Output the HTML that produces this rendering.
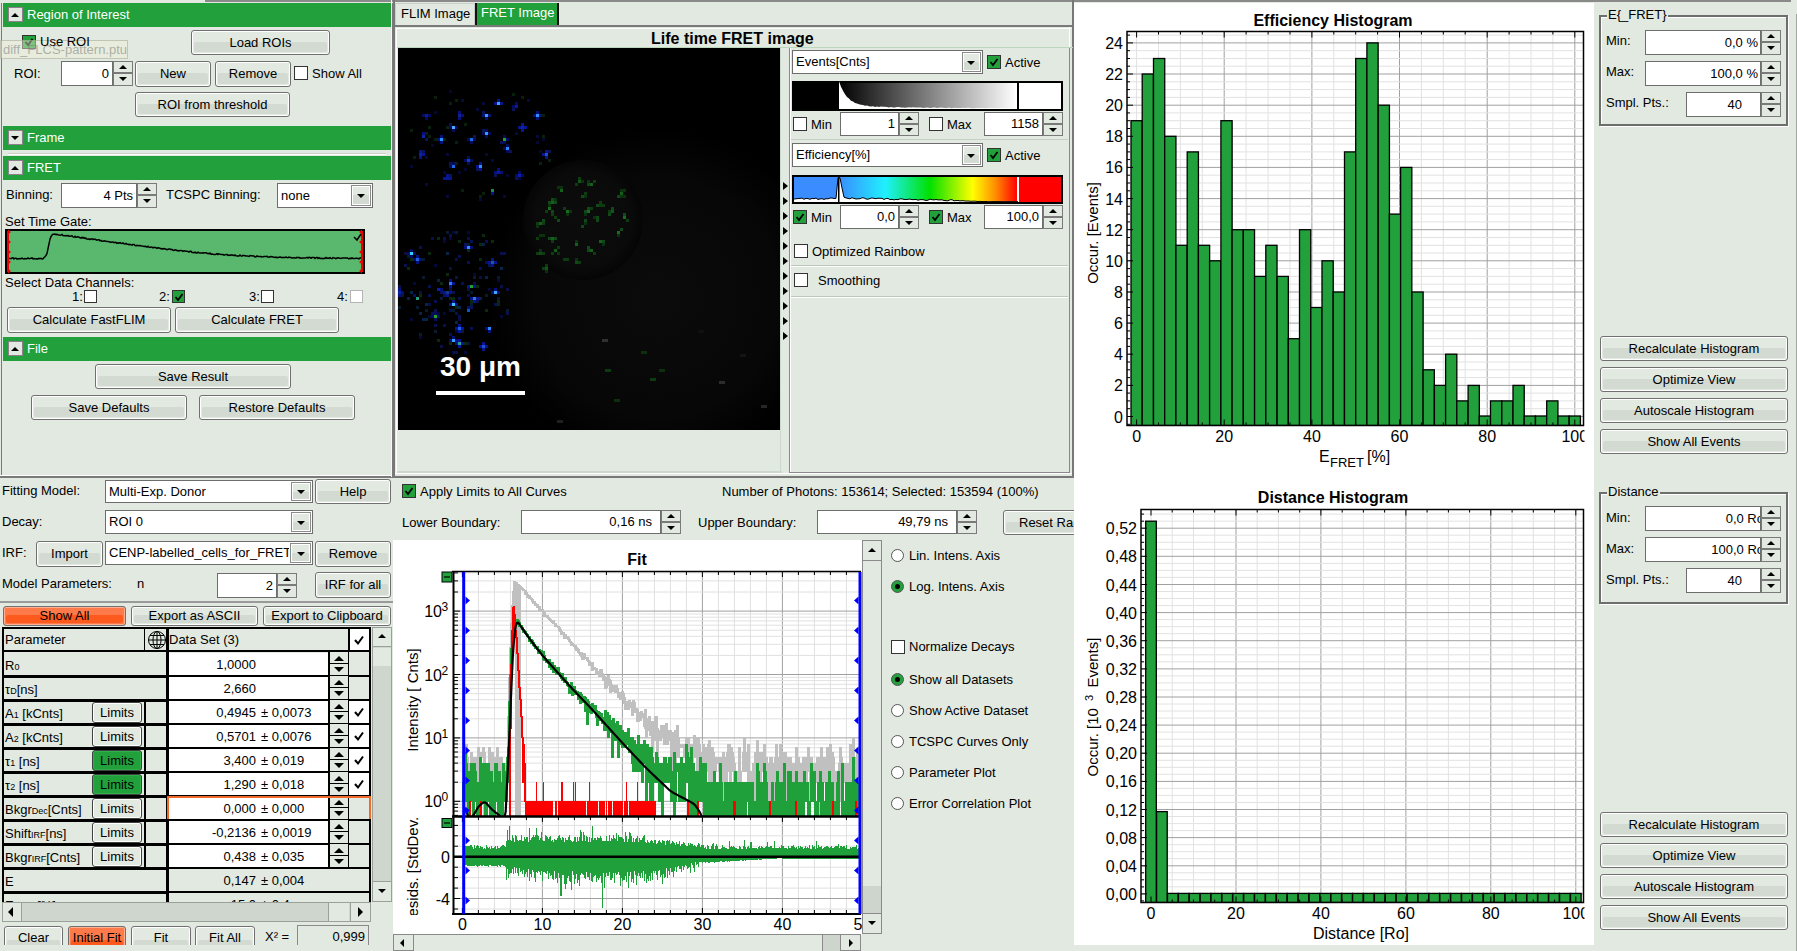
<!DOCTYPE html><html><head><meta charset="utf-8"><style>
*{box-sizing:border-box}
html,body{margin:0;padding:0}
body{width:1797px;height:951px;overflow:hidden;background:#E1E9E0;font-family:"Liberation Sans",sans-serif;font-size:13px;color:#000;position:relative}
.a{position:absolute}
.t{position:absolute;white-space:nowrap;line-height:15px}
.btn{position:absolute;border:1px solid #707070;border-radius:3px;background:#E1E9E0;box-shadow:inset 0 0 0 1px #fff;text-align:center;white-space:nowrap;overflow:hidden}
.btn:before{content:"";position:absolute;left:2px;right:2px;top:46%;bottom:2px;background:#D2DAD1;border-radius:2px}
.btn span{position:relative}
.inp{position:absolute;background:#fff;border:1px solid #6d6d6d;white-space:nowrap;overflow:hidden;text-align:right;padding-right:3px}
.spin{position:absolute;}
.spin i{position:absolute;left:0;right:0;border:1px solid #7a7a7a;background:#E1E9E0}
.cb{position:absolute;width:14px;height:14px;background:#fff;border:1px solid #3c3c3c}
.cbon{background:#21A03B;border-color:#3c3c3c}
.hdr{position:absolute;background:#21A03B;color:#fff}
.tri{position:absolute;width:0;height:0;border-left:4px solid transparent;border-right:4px solid transparent}
</style></head><body><div class="a" style="left:205px;top:0px;width:1586px;height:2px;background:#8a8a8a"></div>
<div class="a" style="left:1px;top:3px;width:1px;height:474px;background:#7a7a7a"></div>
<div class="a" style="left:392px;top:3px;width:1px;height:474px;background:#7a7a7a"></div>
<div class="a" style="left:0px;top:475px;width:392px;height:1px;background:#fff"></div>
<div class="a" style="left:0px;top:476px;width:393px;height:2px;background:#7a7a7a"></div>
<div class="hdr" style="left:3px;top:3px;width:388px;height:24px"></div>
<div class="a" style="left:8px;top:7px;width:15px;height:15px;background:#E1E9E0;border:1px solid #8c7f8c"></div>
<div class="tri" style="left:11px;top:13px;border-left-width:4px;border-right-width:4px;border-bottom:4px solid #000"></div>
<div class="t" style="left:27px;top:7px;color:#fff;">Region of Interest</div>
<div class="a" style="left:22px;top:35px;width:14px;height:14px;background:#21A03B;border:1px solid #333"></div>
<svg class="a" style="left:22px;top:35px" width="14" height="14"><path d="M3.5 7 L6 10 L10.5 4" stroke="#000" stroke-width="1.8" fill="none"/></svg>
<div class="a" style="left:0px;top:40px;width:128px;height:19px;background:rgba(240,240,215,0.45);border:1px solid rgba(150,150,130,0.45)"></div>
<div class="t" style="left:3px;top:42px;color:rgba(120,120,120,0.55);font-size:13px">diff_FLCS-pattern.ptu</div>
<div class="t" style="left:40px;top:34px;">Use ROI</div>
<div class="btn" style="left:191px;top:30px;width:139px;height:25px;"><span style="position:relative;top:4px;line-height:15px">Load ROIs</span></div>
<div class="t" style="left:14px;top:66px;">ROI:</div>
<div class="inp" style="left:61px;top:61px;width:52px;height:25px;line-height:23px;padding-right:3px">0</div>
<div class="a" style="left:113px;top:61px;width:20px;height:12px;border:1px solid #7a7a7a;background:#E1E9E0"></div>
<div class="a" style="left:113px;top:73px;width:20px;height:13px;border:1px solid #7a7a7a;background:#E1E9E0"></div>
<div class="tri" style="left:119px;top:65px;border-left-width:4px;border-right-width:4px;border-bottom:4px solid #000"></div>
<div class="tri" style="left:119px;top:77px;border-left-width:4px;border-right-width:4px;border-top:4px solid #000"></div>
<div class="btn" style="left:135px;top:61px;width:76px;height:26px;"><span style="position:relative;top:4px;line-height:15px">New</span></div>
<div class="btn" style="left:215px;top:61px;width:76px;height:26px;"><span style="position:relative;top:4px;line-height:15px">Remove</span></div>
<div class="a" style="left:294px;top:66px;width:14px;height:14px;background:#fff;border:1px solid #333"></div>
<div class="t" style="left:312px;top:66px;">Show All</div>
<div class="btn" style="left:135px;top:92px;width:155px;height:25px;"><span style="position:relative;top:4px;line-height:15px">ROI from threshold</span></div>
<div class="hdr" style="left:3px;top:126px;width:388px;height:24px"></div>
<div class="a" style="left:8px;top:130px;width:15px;height:15px;background:#E1E9E0;border:1px solid #8c7f8c"></div>
<div class="tri" style="left:11px;top:136px;border-left-width:4px;border-right-width:4px;border-top:4px solid #000"></div>
<div class="t" style="left:27px;top:130px;color:#fff;">Frame</div>
<div class="a" style="left:8px;top:153px;width:378px;height:1px;background:#c8d0c7"></div>
<div class="a" style="left:8px;top:154px;width:378px;height:1px;background:#fff"></div>
<div class="hdr" style="left:3px;top:156px;width:388px;height:24px"></div>
<div class="a" style="left:8px;top:160px;width:15px;height:15px;background:#E1E9E0;border:1px solid #8c7f8c"></div>
<div class="tri" style="left:11px;top:166px;border-left-width:4px;border-right-width:4px;border-bottom:4px solid #000"></div>
<div class="t" style="left:27px;top:160px;color:#fff;">FRET</div>
<div class="t" style="left:6px;top:187px;">Binning:</div>
<div class="inp" style="left:61px;top:183px;width:76px;height:25px;line-height:23px;padding-right:3px">4 Pts</div>
<div class="a" style="left:137px;top:183px;width:20px;height:12px;border:1px solid #7a7a7a;background:#E1E9E0"></div>
<div class="a" style="left:137px;top:195px;width:20px;height:13px;border:1px solid #7a7a7a;background:#E1E9E0"></div>
<div class="tri" style="left:143px;top:187px;border-left-width:4px;border-right-width:4px;border-bottom:4px solid #000"></div>
<div class="tri" style="left:143px;top:199px;border-left-width:4px;border-right-width:4px;border-top:4px solid #000"></div>
<div class="t" style="left:166px;top:187px;">TCSPC Binning:</div>
<div class="a" style="left:277px;top:183px;width:96px;height:25px;background:#fff;border:1px solid #6d6d6d"></div>
<div class="t" style="left:281px;top:188px;">none</div>
<div class="a" style="left:351px;top:185px;width:20px;height:21px;border:1px solid #8a8a8a;background:linear-gradient(#E1E9E0 50%,#D2DAD1 50%);box-shadow:inset 0 0 0 1px #fff"></div>
<div class="tri" style="left:357px;top:194px;border-left-width:4px;border-right-width:4px;border-top:4px solid #000"></div>
<div class="t" style="left:5px;top:214px;">Set Time Gate:</div>
<svg class="a" style="left:5px;top:229px" width="360" height="45"><rect x="1" y="1" width="358" height="43" fill="#5AB86E" stroke="#000" stroke-width="2"/><polyline points="2,29.2 3,29.6 4,29.3 5,29.6 6,29.7 7,29.0 8,28.9 9,29.9 10,29.2 11,29.2 12,30.1 13,29.5 14,29.9 15,29.5 16,29.7 17,29.1 18,29.7 19,29.9 20,29.5 21,29.8 22,29.7 23,29.0 24,29.8 25,29.6 26,29.3 27,28.9 28,29.9 29,29.5 30,29.8 31,30.0 32,29.8 33,30.0 34,29.4 35,29.8 36,29.4 37,29.9 38,29.7 39,28.5 40,27.8 41,26.4 42,24.6 43,19.6 44,14.8 45,10.1 46,7.6 47,6.0 48,5.3 49,5.3 50,5.1 51,5.6 52,5.4 53,5.8 54,5.9 55,6.2 56,6.0 57,5.5 58,6.5 59,6.7 60,6.8 61,6.6 62,6.9 63,6.4 64,7.3 65,7.2 66,7.0 67,6.8 68,7.9 69,8.2 70,7.3 71,8.3 72,8.0 73,7.8 74,8.1 75,8.8 76,9.1 77,8.3 78,9.1 79,8.5 80,9.5 81,9.2 82,10.0 83,10.2 84,9.8 85,10.6 86,9.9 87,9.7 88,10.5 89,10.0 90,10.3 91,10.7 92,11.1 93,10.7 94,10.7 95,11.8 96,11.3 97,12.2 98,12.3 99,11.8 100,12.0 101,12.3 102,12.5 103,12.6 104,12.7 105,12.9 106,13.5 107,13.1 108,13.1 109,13.6 110,13.2 111,13.4 112,14.3 113,13.9 114,14.1 115,13.6 116,14.2 117,14.5 118,14.0 119,14.9 120,15.0 121,14.5 122,15.3 123,15.2 124,15.6 125,15.4 126,15.9 127,16.1 128,15.4 129,15.5 130,16.4 131,16.9 132,16.2 133,16.5 134,16.8 135,16.6 136,16.8 137,16.9 138,17.1 139,17.5 140,17.3 141,17.5 142,18.1 143,17.3 144,18.1 145,18.4 146,18.0 147,18.1 148,18.9 149,18.3 150,18.4 151,18.8 152,19.3 153,18.7 154,19.1 155,19.2 156,19.9 157,19.6 158,20.2 159,19.5 160,19.8 161,20.3 162,20.7 163,20.3 164,20.1 165,20.1 166,20.7 167,20.4 168,21.3 169,21.4 170,20.8 171,21.0 172,21.7 173,21.6 174,22.0 175,21.5 176,21.4 177,21.7 178,22.4 179,21.8 180,22.0 181,22.2 182,22.3 183,22.4 184,23.1 185,22.3 186,22.2 187,23.5 188,23.5 189,23.7 190,23.2 191,23.9 192,23.9 193,23.2 194,23.9 195,24.1 196,24.0 197,23.9 198,23.7 199,23.9 200,23.8 201,23.7 202,24.4 203,24.2 204,24.9 205,24.0 206,25.2 207,25.0 208,25.3 209,25.4 210,25.5 211,25.2 212,24.6 213,25.5 214,24.9 215,25.1 216,25.6 217,25.5 218,25.5 219,26.2 220,25.9 221,25.6 222,25.6 223,26.4 224,26.0 225,26.4 226,26.0 227,25.8 228,26.3 229,26.7 230,26.0 231,26.8 232,27.0 233,26.9 234,27.0 235,26.1 236,26.9 237,27.2 238,26.3 239,26.6 240,26.7 241,27.0 242,26.9 243,27.1 244,27.5 245,26.6 246,26.7 247,26.8 248,26.9 249,26.9 250,28.0 251,27.9 252,27.0 253,27.5 254,27.4 255,27.4 256,27.5 257,27.9 258,27.8 259,27.6 260,27.4 261,27.6 262,27.4 263,28.0 264,28.2 265,27.8 266,27.5 267,27.7 268,27.9 269,28.2 270,28.5 271,28.0 272,28.6 273,28.4 274,28.2 275,28.1 276,28.3 277,28.6 278,28.3 279,28.6 280,28.4 281,28.1 282,28.5 283,28.7 284,28.0 285,28.4 286,28.5 287,29.0 288,29.1 289,28.5 290,29.1 291,29.0 292,28.4 293,28.7 294,28.3 295,29.1 296,28.9 297,29.2 298,29.1 299,29.0 300,29.1 301,28.9 302,28.4 303,29.0 304,28.3 305,28.5 306,29.2 307,28.4 308,28.4 309,28.5 310,29.4 311,28.6 312,28.4 313,29.4 314,28.6 315,29.4 316,29.2 317,29.4 318,29.6 319,29.2 320,29.4 321,28.5 322,29.4 323,29.1 324,29.4 325,28.7 326,29.4 327,29.7 328,28.6 329,28.9 330,29.2 331,29.6 332,28.9 333,28.8 334,28.9 335,29.3 336,29.5 337,29.1 338,29.1 339,29.1 340,29.1 341,29.1 342,28.8 343,29.3 344,29.8 345,29.2 346,29.6 347,28.9 348,29.5 349,29.6 350,29.5 351,29.3 352,29.3 353,29.5 354,29.8 355,28.9 356,28.8 357,29.6" fill="none" stroke="#000" stroke-width="1.5"/><rect x="2" y="2" width="2" height="41" fill="#e00"/><rect x="356" y="2" width="2" height="41" fill="#e00"/><path d="M3 0.5l3 2.5l-3 2.5zM357 0.5l-3 2.5l3 2.5zM3 10.5l3 2.5l-3 2.5zM357 10.5l-3 2.5l3 2.5zM3 20.5l3 2.5l-3 2.5zM357 20.5l-3 2.5l3 2.5zM3 30.5l3 2.5l-3 2.5zM357 30.5l-3 2.5l3 2.5zM3 39.5l3 2.5l-3 2.5zM357 39.5l-3 2.5l3 2.5z" fill="#e00"/><path d="M349 8 L352 11 L356 5" stroke="#000" stroke-width="1.5" fill="none"/></svg>
<div class="t" style="left:5px;top:275px;">Select Data Channels:</div>
<div class="t" style="left:72px;top:289px;">1:</div>
<div class="a" style="left:84px;top:290px;width:13px;height:13px;background:#fff;border:1px solid #333"></div>
<div class="t" style="left:159px;top:289px;">2:</div>
<div class="a" style="left:172px;top:290px;width:13px;height:13px;background:#21A03B;border:1px solid #333"></div>
<svg class="a" style="left:172px;top:290px" width="13" height="13"><path d="M3.5 7 L6 10 L10.5 4" stroke="#000" stroke-width="1.8" fill="none"/></svg>
<div class="t" style="left:249px;top:289px;">3:</div>
<div class="a" style="left:261px;top:290px;width:13px;height:13px;background:#fff;border:1px solid #333"></div>
<div class="t" style="left:337px;top:289px;">4:</div>
<div class="a" style="left:350px;top:290px;width:13px;height:13px;background:#fff;border:1px solid #b4b4b4"></div>
<div class="btn" style="left:7px;top:307px;width:164px;height:26px;"><span style="position:relative;top:4px;line-height:15px">Calculate FastFLIM</span></div>
<div class="btn" style="left:175px;top:307px;width:164px;height:26px;"><span style="position:relative;top:4px;line-height:15px">Calculate FRET</span></div>
<div class="hdr" style="left:3px;top:337px;width:388px;height:24px"></div>
<div class="a" style="left:8px;top:341px;width:15px;height:15px;background:#E1E9E0;border:1px solid #8c7f8c"></div>
<div class="tri" style="left:11px;top:347px;border-left-width:4px;border-right-width:4px;border-bottom:4px solid #000"></div>
<div class="t" style="left:27px;top:341px;color:#fff;">File</div>
<div class="btn" style="left:95px;top:364px;width:196px;height:25px;"><span style="position:relative;top:4px;line-height:15px">Save Result</span></div>
<div class="btn" style="left:31px;top:395px;width:156px;height:25px;"><span style="position:relative;top:4px;line-height:15px">Save Defaults</span></div>
<div class="btn" style="left:199px;top:395px;width:156px;height:25px;"><span style="position:relative;top:4px;line-height:15px">Restore Defaults</span></div>
<div class="a" style="left:0px;top:601px;width:393px;height:2px;background:#9a9a9a"></div>
<div class="t" style="left:2px;top:483px;">Fitting Model:</div>
<div class="a" style="left:105px;top:480px;width:208px;height:23px;background:#fff;border:1px solid #6d6d6d"></div>
<div class="t" style="left:109px;top:484px;">Multi-Exp. Donor</div>
<div class="a" style="left:291px;top:482px;width:20px;height:19px;border:1px solid #8a8a8a;background:linear-gradient(#E1E9E0 50%,#D2DAD1 50%);box-shadow:inset 0 0 0 1px #fff"></div>
<div class="tri" style="left:297px;top:490px;border-left-width:4px;border-right-width:4px;border-top:4px solid #000"></div>
<div class="btn" style="left:315px;top:479px;width:76px;height:25px;"><span style="position:relative;top:4px;line-height:15px">Help</span></div>
<div class="t" style="left:2px;top:514px;">Decay:</div>
<div class="a" style="left:105px;top:510px;width:208px;height:24px;background:#fff;border:1px solid #6d6d6d"></div>
<div class="t" style="left:109px;top:514px;">ROI 0</div>
<div class="a" style="left:291px;top:512px;width:20px;height:20px;border:1px solid #8a8a8a;background:linear-gradient(#E1E9E0 50%,#D2DAD1 50%);box-shadow:inset 0 0 0 1px #fff"></div>
<div class="tri" style="left:297px;top:521px;border-left-width:4px;border-right-width:4px;border-top:4px solid #000"></div>
<div class="t" style="left:2px;top:545px;">IRF:</div>
<div class="btn" style="left:36px;top:541px;width:67px;height:26px;"><span style="position:relative;top:4px;line-height:15px">Import</span></div>
<div class="a" style="left:105px;top:541px;width:208px;height:24px;background:#fff;border:1px solid #6d6d6d"></div>
<div class="a" style="left:106px;top:542px;width:183px;height:22px;overflow:hidden"><div class="t" style="left:3px;top:3px">CENP-labelled_cells_for_FRET.ptu</div></div>
<div class="a" style="left:290px;top:543px;width:21px;height:20px;border:1px solid #8a8a8a;background:linear-gradient(#E1E9E0 50%,#D2DAD1 50%);box-shadow:inset 0 0 0 1px #fff"></div>
<div class="tri" style="left:297px;top:552px;border-left-width:4px;border-right-width:4px;border-top:4px solid #000"></div>
<div class="btn" style="left:315px;top:541px;width:76px;height:26px;"><span style="position:relative;top:4px;line-height:15px">Remove</span></div>
<div class="t" style="left:2px;top:576px;">Model Parameters:</div>
<div class="t" style="left:137px;top:576px;">n</div>
<div class="inp" style="left:217px;top:573px;width:60px;height:25px;line-height:23px;padding-right:3px">2</div>
<div class="a" style="left:277px;top:573px;width:20px;height:12px;border:1px solid #7a7a7a;background:#E1E9E0"></div>
<div class="a" style="left:277px;top:585px;width:20px;height:13px;border:1px solid #7a7a7a;background:#E1E9E0"></div>
<div class="tri" style="left:283px;top:577px;border-left-width:4px;border-right-width:4px;border-bottom:4px solid #000"></div>
<div class="tri" style="left:283px;top:589px;border-left-width:4px;border-right-width:4px;border-top:4px solid #000"></div>
<div class="btn" style="left:315px;top:572px;width:76px;height:26px;"><span style="position:relative;top:4px;line-height:15px">IRF for all</span></div>
<div class="btn orange" style="left:3px;top:606px;width:123px;height:20px;background:#FF7A4A;box-shadow:inset 0 0 0 1px #ffb090;"><span style="position:relative;top:1px;line-height:15px">Show All</span></div>
<style>.orange:before{background:#FF5A1E !important}</style>
<div class="btn" style="left:131px;top:606px;width:127px;height:20px;"><span style="position:relative;top:1px;line-height:15px">Export as ASCII</span></div>
<div class="btn" style="left:263px;top:606px;width:128px;height:20px;"><span style="position:relative;top:1px;line-height:15px">Export to Clipboard</span></div>
<div class="a" style="left:2px;top:627px;width:369px;height:275px;overflow:hidden;background:#E1E9E0"><div class="a" style="left:0;top:0;width:369px;height:25px;border:2px solid #000;border-bottom:0;background:#E1E9E0"></div><div class="t" style="left:3px;top:5px">Parameter</div><div class="a" style="left:142px;top:0;width:1px;height:25px;background:#000"></div><svg class="a" style="left:145px;top:3px" width="20" height="20"><circle cx="10" cy="10" r="8.5" fill="none" stroke="#000" stroke-width="1"/><ellipse cx="10" cy="10" rx="4" ry="8.5" fill="none" stroke="#000"/><line x1="1.5" y1="10" x2="18.5" y2="10" stroke="#000"/><line x1="10" y1="1.5" x2="10" y2="18.5" stroke="#000"/><path d="M3 5.5 H17 M3 14.5 H17" stroke="#000"/></svg><div class="a" style="left:164px;top:0;width:3px;height:25px;background:#000"></div><div class="t" style="left:167px;top:5px">Data Set (3)</div><div class="a" style="left:346px;top:0;width:2px;height:25px;background:#000"></div><div class="a" style="left:348px;top:2px;width:19px;height:21px;background:#fff"></div><svg class="a" style="left:350px;top:6px" width="14" height="14"><path d="M3 7 L6 10.5 L11 3.5" stroke="#000" stroke-width="2" fill="none"/></svg><div class="a" style="left:0;top:23px;width:369px;height:2px;background:#000"></div><div class="a" style="left:0;top:25px;width:2px;height:24px;background:#000"></div><div class="t" style="left:3px;top:31px">R<span style="font-size:9px">0</span></div><div class="a" style="left:164px;top:25px;width:3px;height:24px;background:#000"></div><div class="a" style="left:167px;top:26px;width:200px;height:22px;background:#fff"></div><div class="a" style="left:326px;top:25px;width:20px;height:24px;background:#E1E9E0;border-left:2px solid #000"></div><div class="a" style="left:326px;top:36px;width:20px;height:1px;background:#000"></div><div class="tri" style="left:332px;top:29px;border-left-width:5px;border-right-width:5px;border-bottom:5px solid #000"></div><div class="tri" style="left:332px;top:40px;border-left-width:5px;border-right-width:5px;border-top:5px solid #000"></div><div class="a" style="left:346px;top:25px;width:1px;height:24px;background:#000"></div><div class="a" style="left:347px;top:26px;width:20px;height:22px;background:#E1E9E0"></div><div class="a" style="left:367px;top:25px;width:2px;height:24px;background:#000"></div><div class="t" style="left:167px;top:30px;width:87px;text-align:right">1,0000</div><div class="a" style="left:0;top:48px;width:369px;height:3px;background:#000"></div><div class="a" style="left:0;top:49px;width:2px;height:24px;background:#000"></div><div class="t" style="left:3px;top:55px">τ<span style="font-size:9px">D</span>[ns]</div><div class="a" style="left:164px;top:49px;width:3px;height:24px;background:#000"></div><div class="a" style="left:167px;top:50px;width:200px;height:22px;background:#fff"></div><div class="a" style="left:326px;top:49px;width:20px;height:24px;background:#E1E9E0;border-left:2px solid #000"></div><div class="a" style="left:326px;top:60px;width:20px;height:1px;background:#000"></div><div class="tri" style="left:332px;top:53px;border-left-width:5px;border-right-width:5px;border-bottom:5px solid #000"></div><div class="tri" style="left:332px;top:64px;border-left-width:5px;border-right-width:5px;border-top:5px solid #000"></div><div class="a" style="left:346px;top:49px;width:1px;height:24px;background:#000"></div><div class="a" style="left:347px;top:50px;width:20px;height:22px;background:#E1E9E0"></div><div class="a" style="left:367px;top:49px;width:2px;height:24px;background:#000"></div><div class="t" style="left:167px;top:54px;width:87px;text-align:right">2,660</div><div class="a" style="left:0;top:72px;width:369px;height:3px;background:#000"></div><div class="a" style="left:0;top:73px;width:2px;height:24px;background:#000"></div><div class="t" style="left:3px;top:79px">A<span style="font-size:9px">1</span> [kCnts]</div><div class="a" style="left:90px;top:75px;width:50px;height:21px;border:1px solid #404040;border-radius:3px;background:#E1E9E0;box-shadow:inset 0 0 0 1px #fff;text-align:center;line-height:19px">Limits</div><div class="a" style="left:142px;top:73px;width:2px;height:24px;background:#000"></div><div class="a" style="left:164px;top:73px;width:3px;height:24px;background:#000"></div><div class="a" style="left:167px;top:74px;width:200px;height:22px;background:#fff"></div><div class="a" style="left:326px;top:73px;width:20px;height:24px;background:#E1E9E0;border-left:2px solid #000"></div><div class="a" style="left:326px;top:84px;width:20px;height:1px;background:#000"></div><div class="tri" style="left:332px;top:77px;border-left-width:5px;border-right-width:5px;border-bottom:5px solid #000"></div><div class="tri" style="left:332px;top:88px;border-left-width:5px;border-right-width:5px;border-top:5px solid #000"></div><div class="a" style="left:346px;top:73px;width:1px;height:24px;background:#000"></div><div class="a" style="left:347px;top:74px;width:20px;height:22px;background:#fff"></div><div class="a" style="left:367px;top:73px;width:2px;height:24px;background:#000"></div><div class="t" style="left:167px;top:78px;width:87px;text-align:right">0,4945</div><div class="t" style="left:259px;top:78px">± 0,0073</div><svg class="a" style="left:350px;top:78px" width="14" height="14"><path d="M3 7 L6 10.5 L11 3.5" stroke="#000" stroke-width="2" fill="none"/></svg><div class="a" style="left:0;top:96px;width:369px;height:3px;background:#000"></div><div class="a" style="left:0;top:97px;width:2px;height:24px;background:#000"></div><div class="t" style="left:3px;top:103px">A<span style="font-size:9px">2</span> [kCnts]</div><div class="a" style="left:90px;top:99px;width:50px;height:21px;border:1px solid #404040;border-radius:3px;background:#E1E9E0;box-shadow:inset 0 0 0 1px #fff;text-align:center;line-height:19px">Limits</div><div class="a" style="left:142px;top:97px;width:2px;height:24px;background:#000"></div><div class="a" style="left:164px;top:97px;width:3px;height:24px;background:#000"></div><div class="a" style="left:167px;top:98px;width:200px;height:22px;background:#fff"></div><div class="a" style="left:326px;top:97px;width:20px;height:24px;background:#E1E9E0;border-left:2px solid #000"></div><div class="a" style="left:326px;top:108px;width:20px;height:1px;background:#000"></div><div class="tri" style="left:332px;top:101px;border-left-width:5px;border-right-width:5px;border-bottom:5px solid #000"></div><div class="tri" style="left:332px;top:112px;border-left-width:5px;border-right-width:5px;border-top:5px solid #000"></div><div class="a" style="left:346px;top:97px;width:1px;height:24px;background:#000"></div><div class="a" style="left:347px;top:98px;width:20px;height:22px;background:#fff"></div><div class="a" style="left:367px;top:97px;width:2px;height:24px;background:#000"></div><div class="t" style="left:167px;top:102px;width:87px;text-align:right">0,5701</div><div class="t" style="left:259px;top:102px">± 0,0076</div><svg class="a" style="left:350px;top:102px" width="14" height="14"><path d="M3 7 L6 10.5 L11 3.5" stroke="#000" stroke-width="2" fill="none"/></svg><div class="a" style="left:0;top:120px;width:369px;height:3px;background:#000"></div><div class="a" style="left:0;top:121px;width:2px;height:24px;background:#000"></div><div class="t" style="left:3px;top:127px">τ<span style="font-size:9px">1</span> [ns]</div><div class="a" style="left:90px;top:123px;width:50px;height:21px;border:1px solid #404040;border-radius:3px;background:#21A03B;box-shadow:inset 0 0 0 1px #2fb04a;text-align:center;line-height:19px">Limits</div><div class="a" style="left:142px;top:121px;width:2px;height:24px;background:#000"></div><div class="a" style="left:164px;top:121px;width:3px;height:24px;background:#000"></div><div class="a" style="left:167px;top:122px;width:200px;height:22px;background:#fff"></div><div class="a" style="left:326px;top:121px;width:20px;height:24px;background:#E1E9E0;border-left:2px solid #000"></div><div class="a" style="left:326px;top:132px;width:20px;height:1px;background:#000"></div><div class="tri" style="left:332px;top:125px;border-left-width:5px;border-right-width:5px;border-bottom:5px solid #000"></div><div class="tri" style="left:332px;top:136px;border-left-width:5px;border-right-width:5px;border-top:5px solid #000"></div><div class="a" style="left:346px;top:121px;width:1px;height:24px;background:#000"></div><div class="a" style="left:347px;top:122px;width:20px;height:22px;background:#fff"></div><div class="a" style="left:367px;top:121px;width:2px;height:24px;background:#000"></div><div class="t" style="left:167px;top:126px;width:87px;text-align:right">3,400</div><div class="t" style="left:259px;top:126px">± 0,019</div><svg class="a" style="left:350px;top:126px" width="14" height="14"><path d="M3 7 L6 10.5 L11 3.5" stroke="#000" stroke-width="2" fill="none"/></svg><div class="a" style="left:0;top:144px;width:369px;height:3px;background:#000"></div><div class="a" style="left:0;top:145px;width:2px;height:24px;background:#000"></div><div class="t" style="left:3px;top:151px">τ<span style="font-size:9px">2</span> [ns]</div><div class="a" style="left:90px;top:147px;width:50px;height:21px;border:1px solid #404040;border-radius:3px;background:#21A03B;box-shadow:inset 0 0 0 1px #2fb04a;text-align:center;line-height:19px">Limits</div><div class="a" style="left:142px;top:145px;width:2px;height:24px;background:#000"></div><div class="a" style="left:164px;top:145px;width:3px;height:24px;background:#000"></div><div class="a" style="left:167px;top:146px;width:200px;height:22px;background:#fff"></div><div class="a" style="left:326px;top:145px;width:20px;height:24px;background:#E1E9E0;border-left:2px solid #000"></div><div class="a" style="left:326px;top:156px;width:20px;height:1px;background:#000"></div><div class="tri" style="left:332px;top:149px;border-left-width:5px;border-right-width:5px;border-bottom:5px solid #000"></div><div class="tri" style="left:332px;top:160px;border-left-width:5px;border-right-width:5px;border-top:5px solid #000"></div><div class="a" style="left:346px;top:145px;width:1px;height:24px;background:#000"></div><div class="a" style="left:347px;top:146px;width:20px;height:22px;background:#fff"></div><div class="a" style="left:367px;top:145px;width:2px;height:24px;background:#000"></div><div class="t" style="left:167px;top:150px;width:87px;text-align:right">1,290</div><div class="t" style="left:259px;top:150px">± 0,018</div><svg class="a" style="left:350px;top:150px" width="14" height="14"><path d="M3 7 L6 10.5 L11 3.5" stroke="#000" stroke-width="2" fill="none"/></svg><div class="a" style="left:0;top:168px;width:369px;height:3px;background:#000"></div><div class="a" style="left:0;top:169px;width:2px;height:24px;background:#000"></div><div class="t" style="left:3px;top:175px">Bkgr<span style="font-size:9px">Dec</span>[Cnts]</div><div class="a" style="left:90px;top:171px;width:50px;height:21px;border:1px solid #404040;border-radius:3px;background:#E1E9E0;box-shadow:inset 0 0 0 1px #fff;text-align:center;line-height:19px">Limits</div><div class="a" style="left:142px;top:169px;width:2px;height:24px;background:#000"></div><div class="a" style="left:164px;top:169px;width:3px;height:24px;background:#000"></div><div class="a" style="left:167px;top:170px;width:200px;height:22px;background:#fff"></div><div class="a" style="left:326px;top:169px;width:20px;height:24px;background:#E1E9E0;border-left:2px solid #000"></div><div class="a" style="left:326px;top:180px;width:20px;height:1px;background:#000"></div><div class="tri" style="left:332px;top:173px;border-left-width:5px;border-right-width:5px;border-bottom:5px solid #000"></div><div class="tri" style="left:332px;top:184px;border-left-width:5px;border-right-width:5px;border-top:5px solid #000"></div><div class="a" style="left:346px;top:169px;width:1px;height:24px;background:#000"></div><div class="a" style="left:347px;top:170px;width:20px;height:22px;background:#E1E9E0"></div><div class="a" style="left:367px;top:169px;width:2px;height:24px;background:#000"></div><div class="t" style="left:167px;top:174px;width:87px;text-align:right">0,000</div><div class="t" style="left:259px;top:174px">± 0,000</div><div class="a" style="left:165px;top:169px;width:204px;height:25px;border:2px solid #F26A2A"></div><div class="a" style="left:0;top:192px;width:369px;height:3px;background:#000"></div><div class="a" style="left:0;top:193px;width:2px;height:24px;background:#000"></div><div class="t" style="left:3px;top:199px">Shift<span style="font-size:9px">IRF</span>[ns]</div><div class="a" style="left:90px;top:195px;width:50px;height:21px;border:1px solid #404040;border-radius:3px;background:#E1E9E0;box-shadow:inset 0 0 0 1px #fff;text-align:center;line-height:19px">Limits</div><div class="a" style="left:142px;top:193px;width:2px;height:24px;background:#000"></div><div class="a" style="left:164px;top:193px;width:3px;height:24px;background:#000"></div><div class="a" style="left:167px;top:194px;width:200px;height:22px;background:#fff"></div><div class="a" style="left:326px;top:193px;width:20px;height:24px;background:#E1E9E0;border-left:2px solid #000"></div><div class="a" style="left:326px;top:204px;width:20px;height:1px;background:#000"></div><div class="tri" style="left:332px;top:197px;border-left-width:5px;border-right-width:5px;border-bottom:5px solid #000"></div><div class="tri" style="left:332px;top:208px;border-left-width:5px;border-right-width:5px;border-top:5px solid #000"></div><div class="a" style="left:346px;top:193px;width:1px;height:24px;background:#000"></div><div class="a" style="left:347px;top:194px;width:20px;height:22px;background:#E1E9E0"></div><div class="a" style="left:367px;top:193px;width:2px;height:24px;background:#000"></div><div class="t" style="left:167px;top:198px;width:87px;text-align:right">-0,2136</div><div class="t" style="left:259px;top:198px">± 0,0019</div><div class="a" style="left:0;top:216px;width:369px;height:3px;background:#000"></div><div class="a" style="left:0;top:217px;width:2px;height:24px;background:#000"></div><div class="t" style="left:3px;top:223px">Bkgr<span style="font-size:9px">IRF</span>[Cnts]</div><div class="a" style="left:90px;top:219px;width:50px;height:21px;border:1px solid #404040;border-radius:3px;background:#E1E9E0;box-shadow:inset 0 0 0 1px #fff;text-align:center;line-height:19px">Limits</div><div class="a" style="left:142px;top:217px;width:2px;height:24px;background:#000"></div><div class="a" style="left:164px;top:217px;width:3px;height:24px;background:#000"></div><div class="a" style="left:167px;top:218px;width:200px;height:22px;background:#fff"></div><div class="a" style="left:326px;top:217px;width:20px;height:24px;background:#E1E9E0;border-left:2px solid #000"></div><div class="a" style="left:326px;top:228px;width:20px;height:1px;background:#000"></div><div class="tri" style="left:332px;top:221px;border-left-width:5px;border-right-width:5px;border-bottom:5px solid #000"></div><div class="tri" style="left:332px;top:232px;border-left-width:5px;border-right-width:5px;border-top:5px solid #000"></div><div class="a" style="left:346px;top:217px;width:1px;height:24px;background:#000"></div><div class="a" style="left:347px;top:218px;width:20px;height:22px;background:#E1E9E0"></div><div class="a" style="left:367px;top:217px;width:2px;height:24px;background:#000"></div><div class="t" style="left:167px;top:222px;width:87px;text-align:right">0,438</div><div class="t" style="left:259px;top:222px">± 0,035</div><div class="a" style="left:0;top:240px;width:369px;height:3px;background:#000"></div><div class="a" style="left:0;top:241px;width:2px;height:24px;background:#000"></div><div class="t" style="left:3px;top:247px">E</div><div class="a" style="left:164px;top:241px;width:3px;height:24px;background:#000"></div><div class="a" style="left:167px;top:242px;width:202px;height:22px;background:#E1E9E0"></div><div class="a" style="left:367px;top:241px;width:2px;height:24px;background:#000"></div><div class="t" style="left:167px;top:246px;width:87px;text-align:right">0,147</div><div class="t" style="left:259px;top:246px">± 0,004</div><div class="a" style="left:0;top:264px;width:369px;height:3px;background:#000"></div><div class="a" style="left:0;top:265px;width:2px;height:24px;background:#000"></div><div class="t" style="left:3px;top:271px">E<span style="font-size:9px">FRET</span>[%]</div><div class="a" style="left:164px;top:265px;width:3px;height:24px;background:#000"></div><div class="a" style="left:167px;top:266px;width:202px;height:22px;background:#E1E9E0"></div><div class="a" style="left:367px;top:265px;width:2px;height:24px;background:#000"></div><div class="t" style="left:167px;top:270px;width:87px;text-align:right">15,0</div><div class="t" style="left:259px;top:270px">± 0,4</div></div>
<div class="a" style="left:372px;top:627px;width:20px;height:275px;background:#cfd6ce;border:1px solid #9aa09a"></div>
<div class="a" style="left:372px;top:627px;width:20px;height:20px;background:#E1E9E0;border:1px solid #9aa09a"></div>
<div class="tri" style="left:378px;top:634px;border-left-width:4px;border-right-width:4px;border-bottom:4px solid #000"></div>
<div class="a" style="left:373px;top:648px;width:18px;height:18px;background:#E1E9E0"></div>
<div class="a" style="left:372px;top:881px;width:20px;height:21px;background:#E1E9E0;border:1px solid #9aa09a"></div>
<div class="tri" style="left:378px;top:889px;border-left-width:4px;border-right-width:4px;border-top:4px solid #000"></div>
<div class="a" style="left:2px;top:902px;width:369px;height:20px;background:#cfd6ce;border:1px solid #9aa09a"></div>
<div class="a" style="left:2px;top:902px;width:20px;height:20px;background:#E1E9E0;border:1px solid #9aa09a"></div>
<div class="tri" style="left:8px;top:907px;border-top:5px solid transparent;border-bottom:5px solid transparent;border-right:5px solid #000;border-left:0"></div>
<div class="a" style="left:350px;top:902px;width:21px;height:20px;background:#E1E9E0;border:1px solid #9aa09a"></div>
<div class="tri" style="left:358px;top:907px;border-top:5px solid transparent;border-bottom:5px solid transparent;border-left:5px solid #000;border-right:0"></div>
<div class="a" style="left:328px;top:903px;width:21px;height:18px;background:#E1E9E0;border-left:1px solid #9aa09a"></div>
<div class="a" style="left:371px;top:902px;width:21px;height:20px;background:#E1E9E0"></div>
<div class="btn" style="left:4px;top:926px;width:59px;height:30px;"><span style="position:relative;top:3px;line-height:15px">Clear</span></div>
<div class="btn orange" style="left:68px;top:926px;width:58px;height:30px;background:#FF7A4A;box-shadow:inset 0 0 0 1px #ffb090;"><span style="position:relative;top:3px;line-height:15px">Initial Fit</span></div>
<div class="btn" style="left:131px;top:926px;width:60px;height:30px;"><span style="position:relative;top:3px;line-height:15px">Fit</span></div>
<div class="btn" style="left:195px;top:926px;width:60px;height:30px;"><span style="position:relative;top:3px;line-height:15px">Fit All</span></div>
<div class="t" style="left:265px;top:929px;">X² =</div>
<div class="inp" style="left:297px;top:925px;width:72px;height:30px;line-height:22px;border-color:#8a8a8a;background:#E1E9E0">0,999</div>
<div class="a" style="left:0px;top:945px;width:393px;height:6px;background:#E1E9E0"></div>
<div class="a" style="left:393px;top:927px;width:3px;height:24px;background:#E1E9E0;border-left:1px solid #888;border-top:1px solid #888"></div>
<div class="a" style="left:391px;top:0px;width:1px;height:477px;background:#f4f8f3"></div>
<div class="a" style="left:393px;top:0px;width:2px;height:477px;background:#787878"></div>
<div class="a" style="left:395px;top:3px;width:80px;height:22px;background:#E1E9E0;border:1px solid #c9cfc8;border-bottom:none"></div>
<div class="t" style="left:401px;top:6px;">FLIM Image</div>
<div class="a" style="left:475px;top:3px;width:84px;height:22px;background:#21A03B;border-left:2px solid #111;border-right:2px solid #111"></div>
<div class="t" style="left:481px;top:5px;color:#fff;">FRET Image</div>
<div class="a" style="left:395px;top:25px;width:678px;height:2px;background:#7a7a7a"></div>
<div class="a" style="left:396px;top:28px;width:675px;height:1px;background:#fff"></div>
<div class="a" style="left:396px;top:28px;width:1px;height:446px;background:#fff"></div>
<div class="a" style="left:1069px;top:27px;width:1px;height:447px;background:#fff"></div>
<div class="a" style="left:1072px;top:0px;width:2px;height:477px;background:#787878"></div>
<div class="a" style="left:395px;top:473px;width:677px;height:1px;background:#fff"></div>
<div class="a" style="left:393px;top:476px;width:681px;height:2px;background:#787878"></div>
<div class="a" style="left:397px;top:47px;width:676px;height:1px;background:#bcd8bc"></div>
<div class="t" style="left:651px;top:30px;font-size:16px;font-weight:bold;line-height:18px">Life time FRET image</div>
<div class="a" style="left:397px;top:471px;width:385px;height:2px;background:#cdd8cc"></div>
<div class="a" style="left:780px;top:48px;width:1px;height:425px;background:#cdd8cc"></div>
<div class="a" style="left:789px;top:48px;width:1px;height:425px;background:#9aa59a"></div>
<div class="a" style="left:789px;top:48px;width:281px;height:425px;background:#E1E9E0;border:1px solid #8a8a8a;border-top:none;box-shadow:inset 1px 0 0 #fff"></div>
<svg class="a" style="left:398px;top:48px" width="382" height="382" shape-rendering="crispEdges"><rect width="382" height="382" fill="#000"/><defs><radialGradient id="rg1"><stop offset="0" stop-color="#0b0b0b"/><stop offset="0.7" stop-color="#070707"/><stop offset="1" stop-color="#000"/></radialGradient><radialGradient id="rg2"><stop offset="0" stop-color="#0c0c0c"/><stop offset="0.8" stop-color="#0a0a0a"/><stop offset="1" stop-color="#050505"/></radialGradient></defs><ellipse cx="260" cy="250" rx="170" ry="170" fill="url(#rg1)"/><ellipse cx="185" cy="172" rx="60" ry="60" fill="url(#rg2)"/><rect x="51" y="249" width="3" height="3" fill="#0a2a10"/><rect x="51" y="285" width="3" height="3" fill="#071050"/><rect x="21" y="243" width="3" height="3" fill="#0a0f45"/><rect x="69" y="201" width="3" height="3" fill="#0a2a10"/><rect x="33" y="189" width="3" height="3" fill="#0a0f45"/><rect x="72" y="252" width="3" height="3" fill="#0a2a10"/><rect x="108" y="261" width="3" height="3" fill="#081a30"/><rect x="72" y="255" width="3" height="3" fill="#081a30"/><rect x="99" y="252" width="3" height="3" fill="#0a2a10"/><rect x="36" y="252" width="3" height="3" fill="#071050"/><rect x="57" y="258" width="3" height="3" fill="#0a2a10"/><rect x="75" y="228" width="3" height="3" fill="#081a30"/><rect x="81" y="219" width="3" height="3" fill="#071050"/><rect x="57" y="183" width="3" height="3" fill="#081a30"/><rect x="87" y="228" width="3" height="3" fill="#06244a"/><rect x="42" y="297" width="3" height="3" fill="#0a0f45"/><rect x="102" y="237" width="3" height="3" fill="#0a0f45"/><rect x="45" y="189" width="3" height="3" fill="#0a0f45"/><rect x="21" y="264" width="3" height="3" fill="#06244a"/><rect x="9" y="219" width="3" height="3" fill="#0a2a10"/><rect x="87" y="192" width="3" height="3" fill="#071050"/><rect x="51" y="240" width="3" height="3" fill="#0a0f45"/><rect x="63" y="234" width="3" height="3" fill="#071050"/><rect x="48" y="225" width="3" height="3" fill="#0a2a10"/><rect x="48" y="204" width="3" height="3" fill="#06244a"/><rect x="66" y="303" width="3" height="3" fill="#05083a"/><rect x="24" y="228" width="3" height="3" fill="#081a30"/><rect x="72" y="192" width="3" height="3" fill="#071050"/><rect x="24" y="210" width="3" height="3" fill="#081a30"/><rect x="36" y="216" width="3" height="3" fill="#05083a"/><rect x="6" y="204" width="3" height="3" fill="#0a0f45"/><rect x="27" y="255" width="3" height="3" fill="#06244a"/><rect x="69" y="195" width="3" height="3" fill="#081a30"/><rect x="54" y="249" width="3" height="3" fill="#0a2a10"/><rect x="21" y="198" width="3" height="3" fill="#071050"/><rect x="93" y="210" width="3" height="3" fill="#081490"/><rect x="18" y="258" width="3" height="3" fill="#081a30"/><rect x="99" y="255" width="3" height="3" fill="#0a2a10"/><rect x="57" y="210" width="3" height="3" fill="#0a0f45"/><rect x="81" y="210" width="3" height="3" fill="#0a2a10"/><rect x="54" y="243" width="3" height="3" fill="#0a0f45"/><rect x="54" y="261" width="3" height="3" fill="#081a30"/><rect x="69" y="213" width="3" height="3" fill="#071050"/><rect x="84" y="186" width="3" height="3" fill="#0a2a10"/><rect x="51" y="186" width="3" height="3" fill="#071050"/><rect x="30" y="246" width="3" height="3" fill="#071050"/><rect x="51" y="219" width="3" height="3" fill="#0a0f45"/><rect x="78" y="252" width="3" height="3" fill="#071050"/><rect x="66" y="294" width="3" height="3" fill="#0a2a10"/><rect x="102" y="267" width="3" height="3" fill="#05083a"/><rect x="0" y="258" width="3" height="3" fill="#081a30"/><rect x="6" y="216" width="3" height="3" fill="#071050"/><rect x="60" y="270" width="3" height="3" fill="#0a0f45"/><rect x="84" y="195" width="3" height="3" fill="#06244a"/><rect x="39" y="264" width="3" height="3" fill="#05083a"/><rect x="99" y="231" width="3" height="3" fill="#05083a"/><rect x="99" y="249" width="3" height="3" fill="#081a30"/><rect x="75" y="225" width="3" height="3" fill="#05083a"/><rect x="69" y="189" width="3" height="3" fill="#0a0f45"/><rect x="12" y="210" width="3" height="3" fill="#0a2a10"/><rect x="81" y="228" width="3" height="3" fill="#0a0f45"/><rect x="78" y="237" width="3" height="3" fill="#0a2a10"/><rect x="69" y="240" width="3" height="3" fill="#071050"/><rect x="87" y="261" width="3" height="3" fill="#0a2a10"/><rect x="33" y="264" width="3" height="3" fill="#071050"/><rect x="57" y="273" width="3" height="3" fill="#06244a"/><rect x="75" y="234" width="3" height="3" fill="#071050"/><rect x="36" y="261" width="3" height="3" fill="#071050"/><rect x="72" y="279" width="3" height="3" fill="#071050"/><rect x="99" y="228" width="3" height="3" fill="#081a30"/><rect x="105" y="204" width="3" height="3" fill="#071050"/><rect x="57" y="282" width="3" height="3" fill="#05083a"/><rect x="81" y="297" width="3" height="3" fill="#081490"/><rect x="93" y="192" width="3" height="3" fill="#0a2a10"/><rect x="30" y="204" width="3" height="3" fill="#0a2a10"/><rect x="42" y="243" width="3" height="3" fill="#07145a"/><rect x="36" y="282" width="3" height="3" fill="#081a30"/><rect x="51" y="189" width="3" height="3" fill="#05083a"/><rect x="30" y="255" width="3" height="3" fill="#0a0f45"/><rect x="81" y="249" width="3" height="3" fill="#06244a"/><rect x="72" y="249" width="3" height="3" fill="#081490"/><rect x="15" y="234" width="3" height="3" fill="#05083a"/><rect x="87" y="213" width="3" height="3" fill="#071050"/><rect x="60" y="258" width="3" height="3" fill="#06244a"/><rect x="108" y="264" width="3" height="3" fill="#071050"/><rect x="0" y="237" width="3" height="3" fill="#0a0f45"/><rect x="87" y="246" width="3" height="3" fill="#081a30"/><rect x="57" y="303" width="3" height="3" fill="#071050"/><rect x="45" y="276" width="3" height="3" fill="#071050"/><rect x="81" y="195" width="3" height="3" fill="#0a2a10"/><rect x="21" y="288" width="3" height="3" fill="#05083a"/><rect x="42" y="249" width="3" height="3" fill="#081a30"/><rect x="51" y="261" width="3" height="3" fill="#071050"/><rect x="60" y="276" width="3" height="3" fill="#081490"/><rect x="30" y="267" width="3" height="3" fill="#05083a"/><rect x="39" y="189" width="3" height="3" fill="#0a2a10"/><rect x="39" y="231" width="3" height="3" fill="#06244a"/><rect x="54" y="183" width="3" height="3" fill="#05083a"/><rect x="48" y="183" width="3" height="3" fill="#081a30"/><rect x="36" y="276" width="3" height="3" fill="#071050"/><rect x="54" y="303" width="3" height="3" fill="#0a0f45"/><rect x="57" y="264" width="3" height="3" fill="#071050"/><rect x="108" y="240" width="3" height="3" fill="#0a0f45"/><rect x="9" y="207" width="3" height="3" fill="#081a30"/><rect x="63" y="282" width="3" height="3" fill="#081a30"/><rect x="72" y="243" width="3" height="3" fill="#081a30"/><rect x="27" y="261" width="3" height="3" fill="#081a30"/><rect x="21" y="285" width="3" height="3" fill="#081a30"/><rect x="60" y="249" width="3" height="3" fill="#071050"/><rect x="45" y="192" width="3" height="3" fill="#05083a"/><rect x="69" y="183" width="3" height="3" fill="#05083a"/><rect x="57" y="228" width="3" height="3" fill="#081a30"/><rect x="51" y="294" width="3" height="3" fill="#0a2a10"/><rect x="30" y="237" width="3" height="3" fill="#071050"/><rect x="39" y="291" width="3" height="3" fill="#0a2a10"/><rect x="60" y="192" width="3" height="3" fill="#0a2a10"/><rect x="69" y="294" width="3" height="3" fill="#071050"/><rect x="12" y="270" width="3" height="3" fill="#05083a"/><rect x="96" y="255" width="3" height="3" fill="#071050"/><rect x="21" y="246" width="3" height="3" fill="#0a2a10"/><rect x="69" y="246" width="3" height="3" fill="#0a0f45"/><rect x="60" y="207" width="3" height="3" fill="#071050"/><rect x="24" y="270" width="3" height="3" fill="#06244a"/><rect x="102" y="219" width="3" height="3" fill="#06244a"/><rect x="102" y="204" width="3" height="3" fill="#071050"/><rect x="27" y="270" width="3" height="3" fill="#06244a"/><rect x="42" y="234" width="3" height="3" fill="#0a2a10"/><rect x="60" y="267" width="3" height="3" fill="#071050"/><rect x="45" y="264" width="3" height="3" fill="#05083a"/><rect x="9" y="249" width="3" height="3" fill="#06244a"/><rect x="12" y="243" width="3" height="3" fill="#06244a"/><rect x="90" y="240" width="3" height="3" fill="#05083a"/><rect x="3" y="246" width="3" height="3" fill="#081a30"/><rect x="138" y="93" width="3" height="3" fill="#040830"/><rect x="36" y="63" width="3" height="3" fill="#040830"/><rect x="144" y="90" width="3" height="3" fill="#040830"/><rect x="57" y="93" width="3" height="3" fill="#08200c"/><rect x="60" y="63" width="3" height="3" fill="#06107a"/><rect x="12" y="117" width="3" height="3" fill="#040830"/><rect x="36" y="90" width="3" height="3" fill="#08200c"/><rect x="63" y="141" width="3" height="3" fill="#08200c"/><rect x="33" y="96" width="3" height="3" fill="#040830"/><rect x="57" y="51" width="3" height="3" fill="#08200c"/><rect x="141" y="102" width="3" height="3" fill="#040830"/><rect x="81" y="150" width="3" height="3" fill="#050a3a"/><rect x="51" y="54" width="3" height="3" fill="#08200c"/><rect x="120" y="129" width="3" height="3" fill="#050a3a"/><rect x="30" y="78" width="3" height="3" fill="#08200c"/><rect x="108" y="126" width="3" height="3" fill="#040830"/><rect x="66" y="120" width="3" height="3" fill="#040830"/><rect x="123" y="75" width="3" height="3" fill="#081490"/><rect x="12" y="81" width="3" height="3" fill="#08200c"/><rect x="48" y="147" width="3" height="3" fill="#050a3a"/><rect x="57" y="114" width="3" height="3" fill="#08200c"/><rect x="36" y="48" width="3" height="3" fill="#08200c"/><rect x="150" y="111" width="3" height="3" fill="#08200c"/><rect x="27" y="84" width="3" height="3" fill="#08200c"/><rect x="15" y="108" width="3" height="3" fill="#08200c"/><rect x="45" y="90" width="3" height="3" fill="#08200c"/><rect x="63" y="51" width="3" height="3" fill="#050a3a"/><rect x="48" y="78" width="3" height="3" fill="#08200c"/><rect x="81" y="147" width="3" height="3" fill="#08200c"/><rect x="129" y="51" width="3" height="3" fill="#050a3a"/><rect x="123" y="48" width="3" height="3" fill="#08200c"/><rect x="105" y="147" width="3" height="3" fill="#050a3a"/><rect x="78" y="60" width="3" height="3" fill="#050a3a"/><rect x="87" y="105" width="3" height="3" fill="#050a3a"/><rect x="144" y="87" width="3" height="3" fill="#08200c"/><rect x="66" y="75" width="3" height="3" fill="#08200c"/><rect x="51" y="114" width="3" height="3" fill="#07145a"/><rect x="141" y="114" width="3" height="3" fill="#08200c"/><rect x="51" y="42" width="3" height="3" fill="#040830"/><rect x="93" y="111" width="3" height="3" fill="#050a3a"/><rect x="117" y="84" width="3" height="3" fill="#050a3a"/><rect x="114" y="45" width="3" height="3" fill="#08200c"/><rect x="138" y="87" width="3" height="3" fill="#050a3a"/><rect x="45" y="123" width="3" height="3" fill="#040830"/><rect x="84" y="144" width="3" height="3" fill="#08200c"/><rect x="144" y="66" width="3" height="3" fill="#08200c"/><rect x="27" y="108" width="3" height="3" fill="#050a3a"/><rect x="27" y="135" width="3" height="3" fill="#050a3a"/><rect x="84" y="54" width="3" height="3" fill="#050a3a"/><rect x="30" y="87" width="3" height="3" fill="#08200c"/><rect x="48" y="105" width="3" height="3" fill="#050a3a"/><rect x="60" y="123" width="3" height="3" fill="#040830"/><rect x="99" y="51" width="3" height="3" fill="#081490"/><rect x="96" y="54" width="3" height="3" fill="#081490"/><rect x="102" y="54" width="3" height="3" fill="#081490"/><rect x="99" y="54" width="3" height="3" fill="#3aa0ff"/><rect x="24" y="66" width="3" height="3" fill="#050c60"/><rect x="30" y="66" width="3" height="3" fill="#050c60"/><rect x="27" y="69" width="3" height="3" fill="#050c60"/><rect x="27" y="66" width="3" height="3" fill="#0a1a9a"/><rect x="63" y="66" width="3" height="3" fill="#06107a"/><rect x="60" y="69" width="3" height="3" fill="#06107a"/><rect x="60" y="66" width="3" height="3" fill="#142090"/><rect x="84" y="66" width="3" height="3" fill="#06107a"/><rect x="90" y="66" width="3" height="3" fill="#06107a"/><rect x="87" y="69" width="3" height="3" fill="#06107a"/><rect x="84" y="63" width="3" height="3" fill="#07145a"/><rect x="87" y="66" width="3" height="3" fill="#3a9cff"/><rect x="138" y="63" width="3" height="3" fill="#06107a"/><rect x="135" y="66" width="3" height="3" fill="#06107a"/><rect x="141" y="66" width="3" height="3" fill="#06107a"/><rect x="138" y="69" width="3" height="3" fill="#06107a"/><rect x="138" y="66" width="3" height="3" fill="#2e90ff"/><rect x="51" y="78" width="3" height="3" fill="#050c60"/><rect x="57" y="78" width="3" height="3" fill="#050c60"/><rect x="54" y="81" width="3" height="3" fill="#050c60"/><rect x="51" y="75" width="3" height="3" fill="#07145a"/><rect x="54" y="78" width="3" height="3" fill="#4aaaff"/><rect x="24" y="84" width="3" height="3" fill="#06107a"/><rect x="27" y="90" width="3" height="3" fill="#07145a"/><rect x="24" y="87" width="3" height="3" fill="#0a28a0"/><rect x="42" y="87" width="3" height="3" fill="#06107a"/><rect x="39" y="90" width="3" height="3" fill="#06107a"/><rect x="42" y="93" width="3" height="3" fill="#06107a"/><rect x="42" y="90" width="3" height="3" fill="#2a8cff"/><rect x="69" y="90" width="3" height="3" fill="#050c60"/><rect x="75" y="90" width="3" height="3" fill="#050c60"/><rect x="72" y="93" width="3" height="3" fill="#050c60"/><rect x="75" y="87" width="3" height="3" fill="#07145a"/><rect x="72" y="90" width="3" height="3" fill="#1a6ae0"/><rect x="87" y="81" width="3" height="3" fill="#050c60"/><rect x="84" y="84" width="3" height="3" fill="#050c60"/><rect x="90" y="84" width="3" height="3" fill="#050c60"/><rect x="87" y="87" width="3" height="3" fill="#050c60"/><rect x="84" y="81" width="3" height="3" fill="#07145a"/><rect x="87" y="84" width="3" height="3" fill="#2e9cff"/><rect x="120" y="78" width="3" height="3" fill="#081490"/><rect x="126" y="78" width="3" height="3" fill="#081490"/><rect x="123" y="81" width="3" height="3" fill="#081490"/><rect x="123" y="78" width="3" height="3" fill="#0c22a8"/><rect x="105" y="87" width="3" height="3" fill="#050c60"/><rect x="108" y="90" width="3" height="3" fill="#050c60"/><rect x="105" y="93" width="3" height="3" fill="#050c60"/><rect x="102" y="93" width="3" height="3" fill="#07145a"/><rect x="105" y="90" width="3" height="3" fill="#22a030"/><rect x="108" y="96" width="3" height="3" fill="#050c60"/><rect x="105" y="99" width="3" height="3" fill="#050c60"/><rect x="108" y="102" width="3" height="3" fill="#050c60"/><rect x="111" y="102" width="3" height="3" fill="#07145a"/><rect x="108" y="99" width="3" height="3" fill="#2a88ff"/><rect x="21" y="102" width="3" height="3" fill="#081490"/><rect x="24" y="105" width="3" height="3" fill="#081490"/><rect x="21" y="108" width="3" height="3" fill="#081490"/><rect x="24" y="102" width="3" height="3" fill="#07145a"/><rect x="21" y="105" width="3" height="3" fill="#0a22a0"/><rect x="147" y="102" width="3" height="3" fill="#081490"/><rect x="144" y="105" width="3" height="3" fill="#081490"/><rect x="147" y="108" width="3" height="3" fill="#081490"/><rect x="150" y="102" width="3" height="3" fill="#07145a"/><rect x="147" y="105" width="3" height="3" fill="#1a50d0"/><rect x="54" y="114" width="3" height="3" fill="#050c60"/><rect x="51" y="117" width="3" height="3" fill="#050c60"/><rect x="54" y="117" width="3" height="3" fill="#1a6ae0"/><rect x="69" y="108" width="3" height="3" fill="#050c60"/><rect x="66" y="111" width="3" height="3" fill="#050c60"/><rect x="72" y="111" width="3" height="3" fill="#050c60"/><rect x="69" y="114" width="3" height="3" fill="#050c60"/><rect x="69" y="111" width="3" height="3" fill="#1040c0"/><rect x="81" y="114" width="3" height="3" fill="#081490"/><rect x="78" y="117" width="3" height="3" fill="#081490"/><rect x="81" y="120" width="3" height="3" fill="#081490"/><rect x="78" y="120" width="3" height="3" fill="#07145a"/><rect x="81" y="117" width="3" height="3" fill="#2a90ff"/><rect x="99" y="120" width="3" height="3" fill="#06107a"/><rect x="96" y="123" width="3" height="3" fill="#06107a"/><rect x="102" y="123" width="3" height="3" fill="#06107a"/><rect x="96" y="126" width="3" height="3" fill="#07145a"/><rect x="99" y="123" width="3" height="3" fill="#0a1aa0"/><rect x="120" y="123" width="3" height="3" fill="#050c60"/><rect x="117" y="126" width="3" height="3" fill="#050c60"/><rect x="123" y="126" width="3" height="3" fill="#050c60"/><rect x="117" y="129" width="3" height="3" fill="#07145a"/><rect x="120" y="126" width="3" height="3" fill="#0c1cb0"/><rect x="48" y="126" width="3" height="3" fill="#081490"/><rect x="45" y="129" width="3" height="3" fill="#081490"/><rect x="51" y="129" width="3" height="3" fill="#081490"/><rect x="51" y="126" width="3" height="3" fill="#07145a"/><rect x="48" y="129" width="3" height="3" fill="#081a90"/><rect x="93" y="144" width="3" height="3" fill="#081490"/><rect x="93" y="141" width="3" height="3" fill="#1e8a50"/><rect x="117" y="54" width="3" height="3" fill="#050c60"/><rect x="114" y="57" width="3" height="3" fill="#050c60"/><rect x="114" y="60" width="3" height="3" fill="#07145a"/><rect x="117" y="57" width="3" height="3" fill="#0a1a90"/><rect x="12" y="201" width="3" height="3" fill="#050c60"/><rect x="9" y="204" width="3" height="3" fill="#050c60"/><rect x="15" y="204" width="3" height="3" fill="#050c60"/><rect x="12" y="207" width="3" height="3" fill="#050c60"/><rect x="12" y="204" width="3" height="3" fill="#30d0ff"/><rect x="18" y="207" width="3" height="3" fill="#06107a"/><rect x="15" y="210" width="3" height="3" fill="#06107a"/><rect x="21" y="210" width="3" height="3" fill="#06107a"/><rect x="18" y="213" width="3" height="3" fill="#06107a"/><rect x="18" y="210" width="3" height="3" fill="#1a60e0"/><rect x="66" y="198" width="3" height="3" fill="#06107a"/><rect x="72" y="198" width="3" height="3" fill="#06107a"/><rect x="66" y="195" width="3" height="3" fill="#07145a"/><rect x="69" y="198" width="3" height="3" fill="#2a90ff"/><rect x="90" y="213" width="3" height="3" fill="#081490"/><rect x="96" y="213" width="3" height="3" fill="#081490"/><rect x="93" y="216" width="3" height="3" fill="#081490"/><rect x="90" y="216" width="3" height="3" fill="#07145a"/><rect x="93" y="213" width="3" height="3" fill="#1a5a90"/><rect x="51" y="231" width="3" height="3" fill="#081490"/><rect x="54" y="234" width="3" height="3" fill="#081490"/><rect x="51" y="237" width="3" height="3" fill="#081490"/><rect x="51" y="234" width="3" height="3" fill="#2a80ff"/><rect x="69" y="237" width="3" height="3" fill="#081490"/><rect x="75" y="237" width="3" height="3" fill="#081490"/><rect x="72" y="237" width="3" height="3" fill="#22a030"/><rect x="96" y="240" width="3" height="3" fill="#06107a"/><rect x="93" y="243" width="3" height="3" fill="#06107a"/><rect x="99" y="243" width="3" height="3" fill="#06107a"/><rect x="96" y="243" width="3" height="3" fill="#40a8ff"/><rect x="15" y="246" width="3" height="3" fill="#07145a"/><rect x="18" y="249" width="3" height="3" fill="#20a080"/><rect x="78" y="249" width="3" height="3" fill="#081490"/><rect x="75" y="252" width="3" height="3" fill="#081490"/><rect x="75" y="249" width="3" height="3" fill="#2a78e0"/><rect x="54" y="252" width="3" height="3" fill="#081490"/><rect x="51" y="255" width="3" height="3" fill="#081490"/><rect x="57" y="255" width="3" height="3" fill="#081490"/><rect x="54" y="255" width="3" height="3" fill="#40c0ff"/><rect x="36" y="264" width="3" height="3" fill="#050c60"/><rect x="33" y="267" width="3" height="3" fill="#050c60"/><rect x="39" y="267" width="3" height="3" fill="#050c60"/><rect x="36" y="270" width="3" height="3" fill="#050c60"/><rect x="36" y="267" width="3" height="3" fill="#22a030"/><rect x="69" y="258" width="3" height="3" fill="#06107a"/><rect x="72" y="258" width="3" height="3" fill="#07145a"/><rect x="69" y="261" width="3" height="3" fill="#1a50d0"/><rect x="57" y="279" width="3" height="3" fill="#081490"/><rect x="63" y="279" width="3" height="3" fill="#081490"/><rect x="60" y="282" width="3" height="3" fill="#081490"/><rect x="60" y="279" width="3" height="3" fill="#1a60e0"/><rect x="87" y="279" width="3" height="3" fill="#06107a"/><rect x="90" y="282" width="3" height="3" fill="#06107a"/><rect x="90" y="279" width="3" height="3" fill="#2a88ff"/><rect x="54" y="288" width="3" height="3" fill="#06107a"/><rect x="51" y="291" width="3" height="3" fill="#06107a"/><rect x="57" y="291" width="3" height="3" fill="#06107a"/><rect x="54" y="291" width="3" height="3" fill="#3aa0ff"/><rect x="60" y="291" width="3" height="3" fill="#081490"/><rect x="57" y="294" width="3" height="3" fill="#081490"/><rect x="63" y="294" width="3" height="3" fill="#081490"/><rect x="60" y="297" width="3" height="3" fill="#081490"/><rect x="60" y="294" width="3" height="3" fill="#20a090"/><rect x="84" y="294" width="3" height="3" fill="#081490"/><rect x="87" y="297" width="3" height="3" fill="#081490"/><rect x="84" y="300" width="3" height="3" fill="#081490"/><rect x="84" y="297" width="3" height="3" fill="#1a50d0"/><rect x="0" y="240" width="3" height="3" fill="#06107a"/><rect x="3" y="243" width="3" height="3" fill="#06107a"/><rect x="0" y="246" width="3" height="3" fill="#06107a"/><rect x="0" y="243" width="3" height="3" fill="#0a22a0"/><rect x="42" y="240" width="3" height="3" fill="#06107a"/><rect x="39" y="240" width="3" height="3" fill="#0a20a0"/><rect x="45" y="243" width="3" height="3" fill="#081490"/><rect x="51" y="243" width="3" height="3" fill="#081490"/><rect x="48" y="246" width="3" height="3" fill="#081490"/><rect x="45" y="246" width="3" height="3" fill="#07145a"/><rect x="48" y="243" width="3" height="3" fill="#103a80"/><rect x="180" y="132" width="3" height="3" fill="#115616"/><rect x="183" y="132" width="3" height="3" fill="#0a320e"/><rect x="180" y="129" width="3" height="3" fill="#0c3c10"/><rect x="177" y="135" width="3" height="3" fill="#0c3c10"/><rect x="192" y="135" width="3" height="3" fill="#146018"/><rect x="189" y="132" width="3" height="3" fill="#0a320e"/><rect x="189" y="135" width="3" height="3" fill="#10481a"/><rect x="195" y="132" width="3" height="3" fill="#0c3c10"/><rect x="162" y="141" width="3" height="3" fill="#146018"/><rect x="159" y="138" width="3" height="3" fill="#0a320e"/><rect x="162" y="138" width="3" height="3" fill="#0a320e"/><rect x="183" y="147" width="3" height="3" fill="#10481a"/><rect x="186" y="144" width="3" height="3" fill="#0c3c10"/><rect x="186" y="147" width="3" height="3" fill="#0a320e"/><rect x="222" y="144" width="3" height="3" fill="#146018"/><rect x="225" y="147" width="3" height="3" fill="#0a320e"/><rect x="219" y="147" width="3" height="3" fill="#10481a"/><rect x="225" y="141" width="3" height="3" fill="#0a320e"/><rect x="222" y="141" width="3" height="3" fill="#0a320e"/><rect x="222" y="147" width="3" height="3" fill="#0a320e"/><rect x="153" y="153" width="3" height="3" fill="#146018"/><rect x="150" y="156" width="3" height="3" fill="#0a320e"/><rect x="153" y="150" width="3" height="3" fill="#10481a"/><rect x="156" y="150" width="3" height="3" fill="#0a320e"/><rect x="156" y="153" width="3" height="3" fill="#10481a"/><rect x="150" y="153" width="3" height="3" fill="#10481a"/><rect x="150" y="159" width="3" height="3" fill="#186c1c"/><rect x="153" y="162" width="3" height="3" fill="#10481a"/><rect x="147" y="162" width="3" height="3" fill="#0c3c10"/><rect x="168" y="162" width="3" height="3" fill="#186c1c"/><rect x="165" y="159" width="3" height="3" fill="#0c3c10"/><rect x="168" y="165" width="3" height="3" fill="#0a320e"/><rect x="171" y="162" width="3" height="3" fill="#0a320e"/><rect x="201" y="153" width="3" height="3" fill="#0c3c10"/><rect x="201" y="156" width="3" height="3" fill="#0c3c10"/><rect x="198" y="156" width="3" height="3" fill="#10481a"/><rect x="204" y="156" width="3" height="3" fill="#0c3c10"/><rect x="189" y="162" width="3" height="3" fill="#186c1c"/><rect x="186" y="165" width="3" height="3" fill="#0a320e"/><rect x="192" y="159" width="3" height="3" fill="#0c3c10"/><rect x="186" y="162" width="3" height="3" fill="#10481a"/><rect x="189" y="159" width="3" height="3" fill="#10481a"/><rect x="213" y="162" width="3" height="3" fill="#115616"/><rect x="210" y="165" width="3" height="3" fill="#10481a"/><rect x="210" y="162" width="3" height="3" fill="#0c3c10"/><rect x="213" y="159" width="3" height="3" fill="#10481a"/><rect x="156" y="168" width="3" height="3" fill="#0c3c10"/><rect x="159" y="171" width="3" height="3" fill="#10481a"/><rect x="153" y="165" width="3" height="3" fill="#0c3c10"/><rect x="141" y="174" width="3" height="3" fill="#146018"/><rect x="138" y="177" width="3" height="3" fill="#0a320e"/><rect x="138" y="174" width="3" height="3" fill="#0c3c10"/><rect x="144" y="174" width="3" height="3" fill="#0c3c10"/><rect x="144" y="171" width="3" height="3" fill="#10481a"/><rect x="198" y="168" width="3" height="3" fill="#10481a"/><rect x="195" y="168" width="3" height="3" fill="#0a320e"/><rect x="198" y="171" width="3" height="3" fill="#10481a"/><rect x="141" y="186" width="3" height="3" fill="#0a320e"/><rect x="144" y="186" width="3" height="3" fill="#0a320e"/><rect x="138" y="189" width="3" height="3" fill="#0c3c10"/><rect x="153" y="189" width="3" height="3" fill="#146018"/><rect x="150" y="189" width="3" height="3" fill="#10481a"/><rect x="156" y="189" width="3" height="3" fill="#10481a"/><rect x="153" y="192" width="3" height="3" fill="#0c3c10"/><rect x="177" y="195" width="3" height="3" fill="#146018"/><rect x="177" y="192" width="3" height="3" fill="#0a320e"/><rect x="219" y="183" width="3" height="3" fill="#186c1c"/><rect x="222" y="180" width="3" height="3" fill="#10481a"/><rect x="219" y="186" width="3" height="3" fill="#0a320e"/><rect x="201" y="192" width="3" height="3" fill="#146018"/><rect x="204" y="195" width="3" height="3" fill="#0a320e"/><rect x="204" y="192" width="3" height="3" fill="#10481a"/><rect x="156" y="201" width="3" height="3" fill="#146018"/><rect x="159" y="204" width="3" height="3" fill="#0a320e"/><rect x="159" y="198" width="3" height="3" fill="#0c3c10"/><rect x="153" y="204" width="3" height="3" fill="#0c3c10"/><rect x="141" y="204" width="3" height="3" fill="#10481a"/><rect x="138" y="204" width="3" height="3" fill="#0c3c10"/><rect x="144" y="204" width="3" height="3" fill="#0c3c10"/><rect x="141" y="201" width="3" height="3" fill="#0a320e"/><rect x="168" y="210" width="3" height="3" fill="#0c3c10"/><rect x="165" y="210" width="3" height="3" fill="#0c3c10"/><rect x="180" y="213" width="3" height="3" fill="#0c3c10"/><rect x="177" y="213" width="3" height="3" fill="#10481a"/><rect x="177" y="210" width="3" height="3" fill="#0a320e"/><rect x="192" y="201" width="3" height="3" fill="#146018"/><rect x="195" y="204" width="3" height="3" fill="#0c3c10"/><rect x="189" y="198" width="3" height="3" fill="#10481a"/><rect x="189" y="201" width="3" height="3" fill="#10481a"/><rect x="147" y="219" width="3" height="3" fill="#115616"/><rect x="147" y="222" width="3" height="3" fill="#0a320e"/><rect x="147" y="216" width="3" height="3" fill="#0c3c10"/><rect x="144" y="219" width="3" height="3" fill="#0c3c10"/><rect x="186" y="174" width="3" height="3" fill="#0a320e"/><rect x="186" y="171" width="3" height="3" fill="#10481a"/><rect x="183" y="177" width="3" height="3" fill="#10481a"/><rect x="225" y="168" width="3" height="3" fill="#186c1c"/><rect x="228" y="171" width="3" height="3" fill="#0c3c10"/><rect x="225" y="165" width="3" height="3" fill="#10481a"/><rect x="204" y="291" width="3" height="3" fill="#303030"/><rect x="207" y="291" width="3" height="3" fill="#303030"/><rect x="321" y="333" width="3" height="3" fill="#2c2c2c"/><rect x="324" y="333" width="3" height="3" fill="#2c2c2c"/><rect x="363" y="357" width="3" height="3" fill="#262626"/><rect x="366" y="357" width="3" height="3" fill="#262626"/><rect x="159" y="372" width="3" height="3" fill="#202020"/><rect x="162" y="372" width="3" height="3" fill="#202020"/><rect x="207" y="321" width="3" height="3" fill="#0e3a10"/><rect x="210" y="321" width="3" height="3" fill="#0e3a10"/><rect x="252" y="330" width="3" height="3" fill="#0e3a10"/><rect x="255" y="330" width="3" height="3" fill="#0e3a10"/><rect x="261" y="321" width="3" height="3" fill="#0c300e"/><rect x="264" y="321" width="3" height="3" fill="#0c300e"/><rect x="216" y="351" width="3" height="3" fill="#0c300e"/><rect x="219" y="351" width="3" height="3" fill="#0c300e"/><rect x="243" y="303" width="3" height="3" fill="#0c300e"/><rect x="246" y="303" width="3" height="3" fill="#0c300e"/><rect x="300" y="282" width="3" height="3" fill="#101010"/><rect x="303" y="282" width="3" height="3" fill="#101010"/><rect x="342" y="306" width="3" height="3" fill="#141414"/><rect x="345" y="306" width="3" height="3" fill="#141414"/></svg>
<div class="t" style="left:440px;top:351px;font-size:28px;color:#fff;font-weight:bold;line-height:32px">30 μm</div>
<div class="a" style="left:436px;top:391px;width:89px;height:4px;background:#fff"></div>
<div class="tri" style="left:783px;top:182px;border-top:4px solid transparent;border-bottom:4px solid transparent;border-left:5px solid #000;border-right:0"></div>
<div class="tri" style="left:783px;top:197px;border-top:4px solid transparent;border-bottom:4px solid transparent;border-left:5px solid #000;border-right:0"></div>
<div class="tri" style="left:783px;top:212px;border-top:4px solid transparent;border-bottom:4px solid transparent;border-left:5px solid #000;border-right:0"></div>
<div class="tri" style="left:783px;top:227px;border-top:4px solid transparent;border-bottom:4px solid transparent;border-left:5px solid #000;border-right:0"></div>
<div class="tri" style="left:783px;top:242px;border-top:4px solid transparent;border-bottom:4px solid transparent;border-left:5px solid #000;border-right:0"></div>
<div class="tri" style="left:783px;top:257px;border-top:4px solid transparent;border-bottom:4px solid transparent;border-left:5px solid #000;border-right:0"></div>
<div class="tri" style="left:783px;top:272px;border-top:4px solid transparent;border-bottom:4px solid transparent;border-left:5px solid #000;border-right:0"></div>
<div class="tri" style="left:783px;top:287px;border-top:4px solid transparent;border-bottom:4px solid transparent;border-left:5px solid #000;border-right:0"></div>
<div class="tri" style="left:783px;top:302px;border-top:4px solid transparent;border-bottom:4px solid transparent;border-left:5px solid #000;border-right:0"></div>
<div class="tri" style="left:783px;top:317px;border-top:4px solid transparent;border-bottom:4px solid transparent;border-left:5px solid #000;border-right:0"></div>
<div class="tri" style="left:783px;top:332px;border-top:4px solid transparent;border-bottom:4px solid transparent;border-left:5px solid #000;border-right:0"></div>
<div class="a" style="left:792px;top:50px;width:191px;height:24px;background:#fff;border:1px solid #6d6d6d"></div>
<div class="t" style="left:796px;top:54px;">Events[Cnts]</div>
<div class="a" style="left:962px;top:52px;width:19px;height:20px;border:1px solid #8a8a8a;background:linear-gradient(#E1E9E0 50%,#D2DAD1 50%);box-shadow:inset 0 0 0 1px #fff"></div>
<div class="tri" style="left:967px;top:61px;border-left-width:4px;border-right-width:4px;border-top:4px solid #000"></div>
<div class="a" style="left:987px;top:55px;width:14px;height:14px;background:#21A03B;border:1px solid #333"></div>
<svg class="a" style="left:987px;top:55px" width="14" height="14"><path d="M3.5 7 L6 10 L10.5 4" stroke="#000" stroke-width="1.8" fill="none"/></svg>
<div class="t" style="left:1005px;top:55px;">Active</div>
<svg class="a" style="left:792px;top:81px" width="271" height="30"><defs><linearGradient id="gg" x1="0" x2="1"><stop offset="0" stop-color="#000"/><stop offset="1" stop-color="#fff"/></linearGradient><linearGradient id="rb" x1="0" x2="1"><stop offset="0" stop-color="#3a8cff"/><stop offset="0.18" stop-color="#22e8ff"/><stop offset="0.42" stop-color="#00e000"/><stop offset="0.62" stop-color="#ffff20"/><stop offset="0.8" stop-color="#ff9000"/><stop offset="1" stop-color="#ff1010"/></linearGradient></defs><rect x="1" y="1" width="269" height="28" fill="#fff" stroke="#000" stroke-width="2"/><rect x="2" y="2" width="45" height="26" fill="#000"/><rect x="47" y="2" width="178" height="26" fill="url(#gg)"/><rect x="225" y="2" width="2" height="26" fill="#000"/><polygon points="47,28 47,5 47,0.3 49,5.8 51,9.7 53,13.2 55,16.1 57,17.6 59,19.8 61,20.5 63,22.1 65,22.5 67,23.2 69,23.8 71,24.1 73,24.8 75,24.5 77,25.3 79,25.5 81,25.2 83,25.9 85,25.4 87,26.0 89,25.6 91,25.8 93,25.7 95,26.0 97,26.5 99,25.9 101,26.5 103,26.6 105,26.1 107,26.1 109,26.5 111,26.4 113,26.8 115,26.6 117,26.3 119,26.4 121,26.2 123,26.4 125,26.6 127,26.6 129,26.5 131,27.0 133,26.8 135,26.6 137,26.7 139,26.9 141,26.6 143,26.6 145,27.0 147,26.8 149,26.6 151,26.8 153,27.0 155,27.1 157,26.6 159,27.2 161,26.9 163,26.7 165,27.1 167,26.9 169,26.9 171,26.7 173,27.0 175,26.8 177,26.7 179,27.3 181,27.3 183,27.2 185,26.9 187,27.0 189,26.9 191,26.9 193,27.3 195,27.1 197,26.9 199,26.8 201,26.9 203,26.9 205,26.9 207,27.1 209,27.0 211,27.1 213,27.2 215,27.3 217,27.1 219,27.0 221,27.0 223,27.1 225,28" fill="#fff"/></svg>
<div class="a" style="left:793px;top:117px;width:14px;height:14px;background:#fff;border:1px solid #333"></div>
<div class="t" style="left:811px;top:117px;">Min</div>
<div class="inp" style="left:840px;top:112px;width:59px;height:24px;line-height:22px;padding-right:3px">1</div>
<div class="a" style="left:899px;top:112px;width:20px;height:12px;border:1px solid #7a7a7a;background:#E1E9E0"></div>
<div class="a" style="left:899px;top:124px;width:20px;height:12px;border:1px solid #7a7a7a;background:#E1E9E0"></div>
<div class="tri" style="left:905px;top:116px;border-left-width:4px;border-right-width:4px;border-bottom:4px solid #000"></div>
<div class="tri" style="left:905px;top:128px;border-left-width:4px;border-right-width:4px;border-top:4px solid #000"></div>
<div class="a" style="left:929px;top:117px;width:14px;height:14px;background:#fff;border:1px solid #333"></div>
<div class="t" style="left:947px;top:117px;">Max</div>
<div class="inp" style="left:984px;top:112px;width:59px;height:24px;line-height:22px;padding-right:3px">1158</div>
<div class="a" style="left:1043px;top:112px;width:20px;height:12px;border:1px solid #7a7a7a;background:#E1E9E0"></div>
<div class="a" style="left:1043px;top:124px;width:20px;height:12px;border:1px solid #7a7a7a;background:#E1E9E0"></div>
<div class="tri" style="left:1049px;top:116px;border-left-width:4px;border-right-width:4px;border-bottom:4px solid #000"></div>
<div class="tri" style="left:1049px;top:128px;border-left-width:4px;border-right-width:4px;border-top:4px solid #000"></div>
<div class="a" style="left:791px;top:139px;width:277px;height:1px;background:#c5cfc4"></div>
<div class="a" style="left:792px;top:143px;width:191px;height:24px;background:#fff;border:1px solid #6d6d6d"></div>
<div class="t" style="left:796px;top:147px;">Efficiency[%]</div>
<div class="a" style="left:962px;top:145px;width:19px;height:20px;border:1px solid #8a8a8a;background:linear-gradient(#E1E9E0 50%,#D2DAD1 50%);box-shadow:inset 0 0 0 1px #fff"></div>
<div class="tri" style="left:967px;top:154px;border-left-width:4px;border-right-width:4px;border-top:4px solid #000"></div>
<div class="a" style="left:987px;top:148px;width:14px;height:14px;background:#21A03B;border:1px solid #333"></div>
<svg class="a" style="left:987px;top:148px" width="14" height="14"><path d="M3.5 7 L6 10 L10.5 4" stroke="#000" stroke-width="1.8" fill="none"/></svg>
<div class="t" style="left:1005px;top:148px;">Active</div>
<svg class="a" style="left:792px;top:175px" width="271" height="29"><defs><linearGradient id="rb2" x1="0" x2="1"><stop offset="0" stop-color="#3a8cff"/><stop offset="0.26" stop-color="#20f0ff"/><stop offset="0.51" stop-color="#00e000"/><stop offset="0.75" stop-color="#ffff00"/><stop offset="0.88" stop-color="#ff8c00"/><stop offset="1" stop-color="#ff0000"/></linearGradient></defs><rect x="1" y="1" width="269" height="27" fill="#ff0000" stroke="#000" stroke-width="2"/><rect x="2" y="2" width="45" height="25" fill="#3a8cff"/><rect x="47" y="2" width="178" height="25" fill="url(#rb2)"/><rect x="225" y="2" width="2" height="25" fill="#fff"/><rect x="46" y="2" width="1.5" height="25" fill="#000"/><polygon points="2,27 2,24.0 4,23.8 6,23.5 8,23.4 10,23.1 12,24.3 14,23.4 16,23.6 18,24.3 20,23.4 22,23.7 24,23.0 26,24.5 28,23.9 30,23.7 32,24.4 34,23.7 36,23.8 38,23.1 40,23.0 42,23.5 44,23.4 46,3.0 48,3.0 50,13.0 52,22.2 54,22.9 56,23.4 58,23.8 60,22.7 62,23.4 64,24.0 66,23.8 68,23.7 70,22.8 72,22.9 74,24.0 76,24.2 78,23.5 80,22.9 82,23.4 84,23.7 86,23.2 88,23.3 90,23.3 92,24.5 94,23.5 96,23.4 98,24.6 100,24.4 102,24.9 104,24.4 106,24.7 108,23.8 110,23.9 112,24.4 114,24.6 116,24.3 118,24.1 120,24.6 122,24.6 124,24.4 126,25.2 128,24.7 130,24.6 132,24.9 134,25.5 136,25.2 138,24.1 140,24.7 142,24.9 144,24.5 146,24.9 148,24.9 150,24.8 152,25.5 154,25.7 156,25.8 158,24.8 160,24.7 162,25.8 164,25.6 166,25.5 168,25.9 170,25.7 172,25.8 174,26.1 176,26.0 178,26.2 180,26.3 182,26.1 184,26.3 186,26.5 188,26.4 190,26.5 192,26.6 194,26.5 196,26.7 198,26.7 200,26.6 202,26.6 204,26.6 206,26.6 208,26.6 210,26.7 212,26.7 214,26.7 216,26.6 218,26.6 220,26.7 222,26.7 224,26.7 226,26.7 225,27" fill="#fff"/><polyline points="2,24.0 4,23.8 6,23.5 8,23.4 10,23.1 12,24.3 14,23.4 16,23.6 18,24.3 20,23.4 22,23.7 24,23.0 26,24.5 28,23.9 30,23.7 32,24.4 34,23.7 36,23.8 38,23.1 40,23.0 42,23.5 44,23.4 46,3.0 48,3.0 50,13.0 52,22.2 54,22.9 56,23.4 58,23.8 60,22.7 62,23.4 64,24.0 66,23.8 68,23.7 70,22.8 72,22.9 74,24.0 76,24.2 78,23.5 80,22.9 82,23.4 84,23.7 86,23.2 88,23.3 90,23.3 92,24.5 94,23.5 96,23.4 98,24.6 100,24.4 102,24.9 104,24.4 106,24.7 108,23.8 110,23.9 112,24.4 114,24.6 116,24.3 118,24.1 120,24.6 122,24.6 124,24.4 126,25.2 128,24.7 130,24.6 132,24.9 134,25.5 136,25.2 138,24.1 140,24.7 142,24.9 144,24.5 146,24.9 148,24.9 150,24.8 152,25.5 154,25.7 156,25.8 158,24.8 160,24.7 162,25.8 164,25.6 166,25.5 168,25.9 170,25.7 172,25.8 174,26.1 176,26.0 178,26.2 180,26.3 182,26.1 184,26.3 186,26.5 188,26.4 190,26.5 192,26.6 194,26.5 196,26.7 198,26.7 200,26.6 202,26.6 204,26.6 206,26.6 208,26.6 210,26.7 212,26.7 214,26.7 216,26.6 218,26.6 220,26.7 222,26.7 224,26.7 226,26.7" fill="none" stroke="#000" stroke-width="1"/><rect x="46" y="2" width="1.5" height="25" fill="#000"/></svg>
<div class="a" style="left:793px;top:210px;width:14px;height:14px;background:#21A03B;border:1px solid #333"></div>
<svg class="a" style="left:793px;top:210px" width="14" height="14"><path d="M3.5 7 L6 10 L10.5 4" stroke="#000" stroke-width="1.8" fill="none"/></svg>
<div class="t" style="left:811px;top:210px;">Min</div>
<div class="inp" style="left:840px;top:205px;width:59px;height:24px;line-height:22px;padding-right:3px">0,0</div>
<div class="a" style="left:899px;top:205px;width:20px;height:12px;border:1px solid #7a7a7a;background:#E1E9E0"></div>
<div class="a" style="left:899px;top:217px;width:20px;height:12px;border:1px solid #7a7a7a;background:#E1E9E0"></div>
<div class="tri" style="left:905px;top:209px;border-left-width:4px;border-right-width:4px;border-bottom:4px solid #000"></div>
<div class="tri" style="left:905px;top:221px;border-left-width:4px;border-right-width:4px;border-top:4px solid #000"></div>
<div class="a" style="left:929px;top:210px;width:14px;height:14px;background:#21A03B;border:1px solid #333"></div>
<svg class="a" style="left:929px;top:210px" width="14" height="14"><path d="M3.5 7 L6 10 L10.5 4" stroke="#000" stroke-width="1.8" fill="none"/></svg>
<div class="t" style="left:947px;top:210px;">Max</div>
<div class="inp" style="left:984px;top:205px;width:59px;height:24px;line-height:22px;padding-right:3px">100,0</div>
<div class="a" style="left:1043px;top:205px;width:20px;height:12px;border:1px solid #7a7a7a;background:#E1E9E0"></div>
<div class="a" style="left:1043px;top:217px;width:20px;height:12px;border:1px solid #7a7a7a;background:#E1E9E0"></div>
<div class="tri" style="left:1049px;top:209px;border-left-width:4px;border-right-width:4px;border-bottom:4px solid #000"></div>
<div class="tri" style="left:1049px;top:221px;border-left-width:4px;border-right-width:4px;border-top:4px solid #000"></div>
<div class="a" style="left:794px;top:244px;width:14px;height:14px;background:#fff;border:1px solid #333"></div>
<div class="t" style="left:812px;top:244px;">Optimized Rainbow</div>
<div class="a" style="left:791px;top:265px;width:277px;height:1px;background:#b9c8b8"></div>
<div class="a" style="left:791px;top:266px;width:277px;height:1px;background:#fff"></div>
<div class="a" style="left:794px;top:273px;width:14px;height:14px;background:#fff;border:1px solid #333"></div>
<div class="t" style="left:818px;top:273px;">Smoothing</div>
<div class="a" style="left:791px;top:296px;width:277px;height:1px;background:#b9c8b8"></div>
<div class="a" style="left:791px;top:297px;width:277px;height:1px;background:#fff"></div>
<div class="a" style="left:402px;top:484px;width:14px;height:14px;background:#21A03B;border:1px solid #333"></div>
<svg class="a" style="left:402px;top:484px" width="14" height="14"><path d="M3.5 7 L6 10 L10.5 4" stroke="#000" stroke-width="1.8" fill="none"/></svg>
<div class="t" style="left:420px;top:484px;">Apply Limits to All Curves</div>
<div class="t" style="left:722px;top:484px;">Number of Photons: 153614; Selected: 153594 (100%)</div>
<div class="t" style="left:402px;top:515px;">Lower Boundary:</div>
<div class="inp" style="left:521px;top:510px;width:140px;height:24px;line-height:22px;padding-right:8px">0,16 ns</div>
<div class="a" style="left:661px;top:510px;width:20px;height:12px;border:1px solid #7a7a7a;background:#E1E9E0"></div>
<div class="a" style="left:661px;top:522px;width:20px;height:12px;border:1px solid #7a7a7a;background:#E1E9E0"></div>
<div class="tri" style="left:667px;top:514px;border-left-width:4px;border-right-width:4px;border-bottom:4px solid #000"></div>
<div class="tri" style="left:667px;top:526px;border-left-width:4px;border-right-width:4px;border-top:4px solid #000"></div>
<div class="t" style="left:698px;top:515px;">Upper Boundary:</div>
<div class="inp" style="left:817px;top:510px;width:140px;height:24px;line-height:22px;padding-right:8px">49,79 ns</div>
<div class="a" style="left:957px;top:510px;width:20px;height:12px;border:1px solid #7a7a7a;background:#E1E9E0"></div>
<div class="a" style="left:957px;top:522px;width:20px;height:12px;border:1px solid #7a7a7a;background:#E1E9E0"></div>
<div class="tri" style="left:963px;top:514px;border-left-width:4px;border-right-width:4px;border-bottom:4px solid #000"></div>
<div class="tri" style="left:963px;top:526px;border-left-width:4px;border-right-width:4px;border-top:4px solid #000"></div>
<div class="btn" style="left:1003px;top:510px;width:90px;height:25px"><span style="position:absolute;left:15px;top:4px;line-height:15px">Reset Range</span></div>
<div class="a" style="left:1074px;top:477px;width:723px;height:474px;background:transparent"></div>
<div class="a" style="left:393px;top:540px;width:469px;height:395px;background:#fff"></div>
<svg class="a" style="left:393px;top:540px" width="469" height="395" viewBox="393 540 469 395"><defs><clipPath id="cm"><rect x="454" y="572" width="407" height="244"/></clipPath><clipPath id="cr"><rect x="454" y="817" width="407" height="96"/></clipPath></defs><text x="637" y="565" font-size="16" font-weight="bold" text-anchor="middle" font-family="Liberation Sans">Fit</text><line x1="462.4" y1="571.5" x2="462.4" y2="914" stroke="#e0e0e0" stroke-width="1"/><line x1="478.4" y1="571.5" x2="478.4" y2="914" stroke="#e0e0e0" stroke-width="1"/><line x1="494.4" y1="571.5" x2="494.4" y2="914" stroke="#e0e0e0" stroke-width="1"/><line x1="510.4" y1="571.5" x2="510.4" y2="914" stroke="#e0e0e0" stroke-width="1"/><line x1="526.4" y1="571.5" x2="526.4" y2="914" stroke="#e0e0e0" stroke-width="1"/><line x1="542.4" y1="571.5" x2="542.4" y2="914" stroke="#a0a0a0" stroke-width="1"/><line x1="558.4" y1="571.5" x2="558.4" y2="914" stroke="#e0e0e0" stroke-width="1"/><line x1="574.4" y1="571.5" x2="574.4" y2="914" stroke="#e0e0e0" stroke-width="1"/><line x1="590.4" y1="571.5" x2="590.4" y2="914" stroke="#e0e0e0" stroke-width="1"/><line x1="606.4" y1="571.5" x2="606.4" y2="914" stroke="#e0e0e0" stroke-width="1"/><line x1="622.4" y1="571.5" x2="622.4" y2="914" stroke="#a0a0a0" stroke-width="1"/><line x1="638.4" y1="571.5" x2="638.4" y2="914" stroke="#e0e0e0" stroke-width="1"/><line x1="654.4" y1="571.5" x2="654.4" y2="914" stroke="#e0e0e0" stroke-width="1"/><line x1="670.4" y1="571.5" x2="670.4" y2="914" stroke="#e0e0e0" stroke-width="1"/><line x1="686.4" y1="571.5" x2="686.4" y2="914" stroke="#e0e0e0" stroke-width="1"/><line x1="702.4" y1="571.5" x2="702.4" y2="914" stroke="#a0a0a0" stroke-width="1"/><line x1="718.4" y1="571.5" x2="718.4" y2="914" stroke="#e0e0e0" stroke-width="1"/><line x1="734.4" y1="571.5" x2="734.4" y2="914" stroke="#e0e0e0" stroke-width="1"/><line x1="750.4" y1="571.5" x2="750.4" y2="914" stroke="#e0e0e0" stroke-width="1"/><line x1="766.4" y1="571.5" x2="766.4" y2="914" stroke="#e0e0e0" stroke-width="1"/><line x1="782.4" y1="571.5" x2="782.4" y2="914" stroke="#a0a0a0" stroke-width="1"/><line x1="798.4" y1="571.5" x2="798.4" y2="914" stroke="#e0e0e0" stroke-width="1"/><line x1="814.4" y1="571.5" x2="814.4" y2="914" stroke="#e0e0e0" stroke-width="1"/><line x1="830.4" y1="571.5" x2="830.4" y2="914" stroke="#e0e0e0" stroke-width="1"/><line x1="846.4" y1="571.5" x2="846.4" y2="914" stroke="#e0e0e0" stroke-width="1"/><line x1="453.5" y1="815.4" x2="861" y2="815.4" stroke="#e0e0e0"/><line x1="453.5" y1="811.1" x2="861" y2="811.1" stroke="#e0e0e0"/><line x1="453.5" y1="807.4" x2="861" y2="807.4" stroke="#e0e0e0"/><line x1="453.5" y1="804.2" x2="861" y2="804.2" stroke="#e0e0e0"/><line x1="453.5" y1="801.3" x2="861" y2="801.3" stroke="#a0a0a0"/><line x1="453.5" y1="782.2" x2="861" y2="782.2" stroke="#e0e0e0"/><line x1="453.5" y1="771.1" x2="861" y2="771.1" stroke="#e0e0e0"/><line x1="453.5" y1="763.1" x2="861" y2="763.1" stroke="#e0e0e0"/><line x1="453.5" y1="757.0" x2="861" y2="757.0" stroke="#e0e0e0"/><line x1="453.5" y1="752.0" x2="861" y2="752.0" stroke="#e0e0e0"/><line x1="453.5" y1="747.7" x2="861" y2="747.7" stroke="#e0e0e0"/><line x1="453.5" y1="744.0" x2="861" y2="744.0" stroke="#e0e0e0"/><line x1="453.5" y1="740.8" x2="861" y2="740.8" stroke="#e0e0e0"/><line x1="453.5" y1="737.9" x2="861" y2="737.9" stroke="#a0a0a0"/><line x1="453.5" y1="718.8" x2="861" y2="718.8" stroke="#e0e0e0"/><line x1="453.5" y1="707.7" x2="861" y2="707.7" stroke="#e0e0e0"/><line x1="453.5" y1="699.7" x2="861" y2="699.7" stroke="#e0e0e0"/><line x1="453.5" y1="693.6" x2="861" y2="693.6" stroke="#e0e0e0"/><line x1="453.5" y1="688.6" x2="861" y2="688.6" stroke="#e0e0e0"/><line x1="453.5" y1="684.3" x2="861" y2="684.3" stroke="#e0e0e0"/><line x1="453.5" y1="680.6" x2="861" y2="680.6" stroke="#e0e0e0"/><line x1="453.5" y1="677.4" x2="861" y2="677.4" stroke="#e0e0e0"/><line x1="453.5" y1="674.5" x2="861" y2="674.5" stroke="#a0a0a0"/><line x1="453.5" y1="655.4" x2="861" y2="655.4" stroke="#e0e0e0"/><line x1="453.5" y1="644.3" x2="861" y2="644.3" stroke="#e0e0e0"/><line x1="453.5" y1="636.3" x2="861" y2="636.3" stroke="#e0e0e0"/><line x1="453.5" y1="630.2" x2="861" y2="630.2" stroke="#e0e0e0"/><line x1="453.5" y1="625.2" x2="861" y2="625.2" stroke="#e0e0e0"/><line x1="453.5" y1="620.9" x2="861" y2="620.9" stroke="#e0e0e0"/><line x1="453.5" y1="617.2" x2="861" y2="617.2" stroke="#e0e0e0"/><line x1="453.5" y1="614.0" x2="861" y2="614.0" stroke="#e0e0e0"/><line x1="453.5" y1="611.1" x2="861" y2="611.1" stroke="#a0a0a0"/><line x1="453.5" y1="592.0" x2="861" y2="592.0" stroke="#e0e0e0"/><line x1="453.5" y1="580.9" x2="861" y2="580.9" stroke="#e0e0e0"/><line x1="453.5" y1="572.9" x2="861" y2="572.9" stroke="#e0e0e0"/><line x1="453.5" y1="909.0" x2="861" y2="909.0" stroke="#e0e0e0"/><line x1="453.5" y1="898.5" x2="861" y2="898.5" stroke="#a0a0a0"/><line x1="453.5" y1="888.1" x2="861" y2="888.1" stroke="#e0e0e0"/><line x1="453.5" y1="877.6" x2="861" y2="877.6" stroke="#e0e0e0"/><line x1="453.5" y1="867.2" x2="861" y2="867.2" stroke="#e0e0e0"/><line x1="453.5" y1="856.7" x2="861" y2="856.7" stroke="#a0a0a0"/><line x1="453.5" y1="846.2" x2="861" y2="846.2" stroke="#e0e0e0"/><line x1="453.5" y1="835.8" x2="861" y2="835.8" stroke="#e0e0e0"/><line x1="453.5" y1="825.4" x2="861" y2="825.4" stroke="#e0e0e0"/><path clip-path="url(#cm)" d="M463.5 751.5V763.6M464.5 762.6V763.6M465.5 762.6V818.5M466.5 743.5V771.6M467.5 756.5V801.8M468.5 762.6V801.8M469.5 770.6V801.8M470.5 770.6V782.7M471.5 751.5V801.8M472.5 770.6V771.6M473.5 770.6V782.7M474.5 756.5V782.7M475.5 770.6V782.7M476.5 762.6V801.8M477.5 756.5V801.8M478.5 747.2V771.6M479.5 751.5V763.6M480.5 751.5V757.5M481.5 751.5V757.5M482.5 751.5V752.5M483.5 747.2V752.5M484.5 751.5V818.5M485.5 781.7V782.7M486.5 781.7V801.8M487.5 762.6V801.8M488.5 770.6V782.7M489.5 747.2V782.7M490.5 756.5V782.7M491.5 762.6V771.6M492.5 751.5V763.6M493.5 756.5V782.7M494.5 756.5V782.7M495.5 756.5V771.6M496.5 756.5V763.6M497.5 747.2V757.5M498.5 756.5V771.6M499.5 762.6V771.6M500.5 762.6V782.7M501.5 756.5V763.6M502.5 762.6V771.6M503.5 770.6V801.8M504.5 762.6V782.7M505.5 762.6V763.6M506.5 762.6V771.6M507.5 762.6V782.7M508.5 715.7V763.6M509.5 677.0V716.7M510.5 646.6V678.0M511.5 622.7V647.6M512.5 605.1V623.7M513.5 591.4V606.1M514.5 581.0V592.4M515.5 582.6V583.6M516.5 581.9V818.5M517.5 583.6V585.0M518.5 584.0V585.7M519.5 584.7V818.5M520.5 586.2V587.9M521.5 586.9V589.3M522.5 588.3V590.1M523.5 589.1V591.4M524.5 590.3V591.4M525.5 590.4V594.8M526.5 592.2V595.2M527.5 594.2V597.6M528.5 595.2V596.4M529.5 595.4V598.5M530.5 596.8V599.4M531.5 598.4V600.4M532.5 599.4V601.5M533.5 600.5V604.3M534.5 601.1V604.2M535.5 602.8V605.5M536.5 604.3V605.3M537.5 604.3V607.9M538.5 605.8V607.2M539.5 606.2V610.6M540.5 608.9V610.6M541.5 609.4V611.0M542.5 609.2V611.6M543.5 610.6V613.1M544.5 612.1V616.6M545.5 614.6V615.8M546.5 614.8V616.4M547.5 615.3V618.4M548.5 617.0V619.0M549.5 618.0V619.6M550.5 618.6V620.8M551.5 619.8V621.7M552.5 620.7V623.0M553.5 620.2V623.7M554.5 622.7V624.4M555.5 623.4V627.2M556.5 625.3V627.2M557.5 626.2V627.2M558.5 626.2V628.0M559.5 627.0V630.8M560.5 629.1V631.8M561.5 630.8V634.5M562.5 632.2V635.2M563.5 632.2V635.4M564.5 634.4V638.6M565.5 634.3V636.7M566.5 635.7V638.7M567.5 636.4V638.1M568.5 637.1V640.0M569.5 639.0V642.3M570.5 640.7V642.7M571.5 641.7V645.8M572.5 642.5V644.9M573.5 643.9V646.2M574.5 645.2V647.1M575.5 645.4V648.8M576.5 647.3V650.7M577.5 648.2V650.5M578.5 648.6V653.4M579.5 652.4V653.8M580.5 651.6V655.8M581.5 652.1V657.2M582.5 656.2V659.8M583.5 655.4V659.8M584.5 653.2V657.5M585.5 656.5V659.0M586.5 657.2V659.4M587.5 656.9V660.7M588.5 659.7V661.7M589.5 660.7V666.1M590.5 662.0V664.1M591.5 662.4V663.8M592.5 661.5V671.3M593.5 667.3V668.7M594.5 666.6V670.2M595.5 668.4V669.4M596.5 668.4V674.7M597.5 670.5V673.3M598.5 672.1V674.1M599.5 673.1V677.1M600.5 669.4V674.3M601.5 669.4V677.1M602.5 673.2V674.6M603.5 673.6V680.9M604.5 676.2V679.0M605.5 677.2V689.2M606.5 681.3V687.5M607.5 679.9V682.5M608.5 675.0V685.9M609.5 679.4V681.1M610.5 680.1V693.3M611.5 684.2V688.4M612.5 684.6V687.9M613.5 684.9V691.8M614.5 688.6V690.4M615.5 689.4V693.0M616.5 684.5V692.4M617.5 688.1V693.1M618.5 692.1V698.1M619.5 691.8V695.7M620.5 692.2V699.8M621.5 694.9V695.9M622.5 691.2V695.9M623.5 693.0V700.3M624.5 697.0V703.6M625.5 702.6V710.1M626.5 706.6V708.0M627.5 701.3V707.6M628.5 701.7V710.1M629.5 699.8V704.2M630.5 701.5V705.8M631.5 701.7V708.2M632.5 705.7V716.3M633.5 699.9V706.7M634.5 702.1V711.1M635.5 708.1V713.2M636.5 708.1V711.1M637.5 709.1V722.2M638.5 715.7V722.2M639.5 712.2V720.7M640.5 714.5V720.7M641.5 711.1V718.0M642.5 713.3V716.7M643.5 714.5V715.5M644.5 714.5V727.2M645.5 709.1V729.1M646.5 718.3V738.4M647.5 721.2V731.2M648.5 721.2V723.8M649.5 715.7V723.8M650.5 721.2V735.8M651.5 726.2V729.1M652.5 724.5V752.5M653.5 721.2V725.5M654.5 721.2V741.3M655.5 715.7V733.4M656.5 715.7V729.1M657.5 728.1V771.6M658.5 730.2V735.8M659.5 734.8V738.4M660.5 737.4V741.3M661.5 724.5V738.4M662.5 730.2V735.8M663.5 724.5V735.8M664.5 734.8V744.5M665.5 728.1V744.5M666.5 722.8V738.4M667.5 737.4V744.5M668.5 730.2V741.3M669.5 734.8V738.4M670.5 730.2V741.3M671.5 740.3V801.8M672.5 732.4V744.5M673.5 740.3V744.5M674.5 740.3V752.5M675.5 730.2V763.6M676.5 747.2V752.5M677.5 724.5V757.5M678.5 737.4V757.5M679.5 743.5V744.5M680.5 743.5V748.2M681.5 743.5V748.2M682.5 747.2V748.2M683.5 743.5V748.2M684.5 743.5V757.5M685.5 743.5V748.2M686.5 737.4V744.5M687.5 737.4V738.4M688.5 737.4V763.6M689.5 743.5V771.6M690.5 743.5V771.6M691.5 747.2V763.6M692.5 747.2V771.6M693.5 743.5V752.5M694.5 734.8V748.2M695.5 737.4V757.5M696.5 751.5V757.5M697.5 756.5V771.6M698.5 737.4V757.5M699.5 743.5V771.6M700.5 770.6V782.7M701.5 756.5V801.8M702.5 751.5V771.6M703.5 743.5V752.5M704.5 751.5V771.6M705.5 751.5V763.6M706.5 747.2V771.6M707.5 770.6V771.6M708.5 743.5V771.6M709.5 740.3V801.8M710.5 747.2V752.5M711.5 751.5V782.7M712.5 747.2V763.6M713.5 751.5V757.5M714.5 756.5V782.7M715.5 762.6V771.6M716.5 756.5V763.6M717.5 762.6V763.6M718.5 756.5V763.6M719.5 762.6V771.6M720.5 756.5V782.7M721.5 770.6V782.7M722.5 781.7V801.8M723.5 751.5V782.7M724.5 756.5V771.6M725.5 756.5V771.6M726.5 770.6V801.8M727.5 751.5V771.6M728.5 743.5V752.5M729.5 743.5V757.5M730.5 756.5V801.8M731.5 747.2V763.6M732.5 751.5V757.5M733.5 756.5V771.6M734.5 762.6V801.8M735.5 770.6V801.8M736.5 800.8V818.5M737.5 770.6V801.8M738.5 770.6V782.7M739.5 747.2V801.8M740.5 770.6V782.7M741.5 770.6V771.6M742.5 770.6V771.6M743.5 751.5V771.6M744.5 737.4V771.6M745.5 751.5V752.5M746.5 751.5V771.6M747.5 770.6V771.6M748.5 743.5V782.7M749.5 770.6V771.6M750.5 770.6V782.7M751.5 770.6V782.7M752.5 781.7V818.5M753.5 762.6V801.8M754.5 762.6V763.6M755.5 751.5V782.7M756.5 762.6V801.8M757.5 740.3V763.6M758.5 762.6V818.5M759.5 781.7V818.5M760.5 751.5V782.7M761.5 751.5V757.5M762.5 756.5V771.6M763.5 751.5V771.6M764.5 743.5V771.6M765.5 770.6V818.5M766.5 756.5V771.6M767.5 762.6V782.7M768.5 762.6V771.6M769.5 762.6V801.8M770.5 756.5V763.6M771.5 756.5V782.7M772.5 770.6V801.8M773.5 762.6V782.7M774.5 781.7V801.8M775.5 756.5V801.8M776.5 743.5V757.5M777.5 756.5V771.6M778.5 770.6V818.5M779.5 770.6V801.8M780.5 743.5V771.6M781.5 756.5V782.7M782.5 756.5V771.6M783.5 751.5V771.6M784.5 770.6V818.5M785.5 751.5V818.5M786.5 762.6V771.6M787.5 756.5V782.7M788.5 770.6V771.6M789.5 770.6V801.8M790.5 756.5V782.7M791.5 762.6V818.5M792.5 800.8V801.8M793.5 762.6V801.8M794.5 770.6V818.5M795.5 800.8V818.5M796.5 747.2V801.8M797.5 770.6V801.8M798.5 756.5V771.6M799.5 762.6V782.7M800.5 762.6V771.6M801.5 770.6V801.8M802.5 770.6V801.8M803.5 756.5V782.7M804.5 781.7V782.7M805.5 762.6V801.8M806.5 756.5V782.7M807.5 756.5V771.6M808.5 747.2V757.5M809.5 756.5V763.6M810.5 762.6V801.8M811.5 756.5V782.7M812.5 770.6V801.8M813.5 762.6V771.6M814.5 762.6V801.8M815.5 770.6V771.6M816.5 770.6V782.7M817.5 756.5V782.7M818.5 781.7V818.5M819.5 756.5V801.8M820.5 770.6V782.7M821.5 747.2V801.8M822.5 762.6V771.6M823.5 756.5V782.7M824.5 781.7V782.7M825.5 770.6V782.7M826.5 756.5V782.7M827.5 747.2V757.5M828.5 756.5V801.8M829.5 770.6V782.7M830.5 743.5V818.5M831.5 762.6V782.7M832.5 751.5V771.6M833.5 756.5V801.8M834.5 770.6V782.7M835.5 781.7V801.8M836.5 770.6V801.8M837.5 770.6V771.6M838.5 770.6V801.8M839.5 762.6V801.8M840.5 747.2V763.6M841.5 756.5V782.7M842.5 781.7V801.8M843.5 770.6V782.7M844.5 762.6V771.6M845.5 762.6V782.7M846.5 762.6V771.6M847.5 770.6V801.8M848.5 762.6V782.7M849.5 762.6V782.7M850.5 743.5V818.5M851.5 756.5V771.6M852.5 756.5V782.7M853.5 737.4V782.7M854.5 756.5V757.5M855.5 756.5V782.7M856.5 781.7V801.8M857.5 751.5V801.8M858.5 762.6V782.7M859.5 762.6V782.7M860.5 747.2V771.6M861.5 770.6V818.5" stroke="#c0c0c0" stroke-width="3.0" fill="none" shape-rendering="crispEdges"/><path clip-path="url(#cm)" d="M463.5 781.7V801.8M464.5 751.5V801.8M465.5 751.5V771.6M466.5 762.6V801.8M467.5 770.6V771.6M468.5 770.6V818.5M469.5 800.8V801.8M470.5 781.7V801.8M471.5 762.6V801.8M472.5 770.6V771.6M473.5 770.6V818.5M474.5 762.6V801.8M475.5 770.6V801.8M476.5 781.7V782.7M477.5 781.7V818.5M478.5 781.7V818.5M479.5 781.7V801.8M480.5 756.5V818.5M481.5 770.6V801.8M482.5 781.7V782.7M483.5 762.6V782.7M484.5 781.7V801.8M485.5 762.6V818.5M486.5 800.8V818.5M487.5 762.6V801.8M488.5 762.6V782.7M489.5 770.6V801.8M490.5 800.8V818.5M491.5 770.6V818.5M492.5 781.7V782.7M493.5 781.7V818.5M494.5 781.7V818.5M495.5 762.6V801.8M496.5 762.6V801.8M497.5 800.8V801.8M498.5 781.7V818.5M499.5 770.6V818.5M500.5 781.7V782.7M501.5 781.7V818.5M502.5 781.7V818.5M503.5 762.6V782.7M504.5 781.7V782.7M505.5 770.6V801.8M506.5 781.7V801.8M507.5 756.5V782.7M508.5 747.2V763.6M509.5 700.8V748.2M510.5 674.4V701.8M511.5 647.5V675.4M512.5 630.7V648.5M513.5 625.4V631.7M514.5 616.6V626.4M515.5 619.0V622.1M516.5 618.5V622.1M517.5 619.0V623.6M518.5 620.3V623.4M519.5 622.4V627.0M520.5 624.8V626.8M521.5 625.2V628.3M522.5 627.3V630.2M523.5 629.0V632.5M524.5 630.1V631.6M525.5 630.6V633.7M526.5 632.6V634.5M527.5 633.5V636.7M528.5 635.7V637.1M529.5 636.1V641.5M530.5 639.5V641.1M531.5 639.2V643.6M532.5 640.4V643.2M533.5 642.2V646.3M534.5 644.1V647.0M535.5 646.0V649.1M536.5 645.9V647.4M537.5 645.9V650.2M538.5 649.2V653.7M539.5 649.1V654.3M540.5 651.9V653.7M541.5 650.3V653.6M542.5 652.4V656.3M543.5 651.2V659.6M544.5 654.5V661.2M545.5 657.9V660.5M546.5 659.3V662.8M547.5 658.7V661.9M548.5 660.9V664.4M549.5 659.0V667.5M550.5 665.0V666.8M551.5 664.8V670.3M552.5 662.0V668.1M553.5 667.1V673.0M554.5 665.4V671.5M555.5 668.6V671.3M556.5 670.3V674.5M557.5 667.3V673.0M558.5 667.3V674.2M559.5 672.4V673.5M560.5 672.5V676.6M561.5 673.6V679.0M562.5 673.4V680.8M563.5 676.8V681.2M564.5 678.0V682.6M565.5 676.9V681.6M566.5 680.6V682.7M567.5 681.7V685.5M568.5 684.5V686.7M569.5 685.7V694.4M570.5 685.5V689.2M571.5 681.7V694.2M572.5 687.8V695.7M573.5 689.1V690.3M574.5 686.3V690.6M575.5 689.6V695.1M576.5 690.5V691.9M577.5 690.5V694.7M578.5 693.7V700.2M579.5 695.8V696.8M580.5 692.2V703.9M581.5 693.9V701.2M582.5 698.9V702.6M583.5 698.7V701.1M584.5 695.5V699.7M585.5 696.6V711.5M586.5 701.3V707.3M587.5 698.5V725.4M588.5 700.9V707.8M589.5 706.8V712.6M590.5 704.1V711.1M591.5 708.8V714.3M592.5 702.9V712.1M593.5 706.2V708.2M594.5 707.2V711.1M595.5 704.5V713.2M596.5 710.1V718.0M597.5 712.2V725.5M598.5 711.1V714.3M599.5 712.2V718.0M600.5 717.0V720.7M601.5 713.3V720.7M602.5 718.3V723.8M603.5 717.0V722.2M604.5 721.2V731.2M605.5 710.1V723.8M606.5 719.7V731.2M607.5 712.2V731.2M608.5 728.1V738.4M609.5 714.5V733.4M610.5 726.2V733.4M611.5 719.7V731.2M612.5 730.2V757.5M613.5 718.3V735.8M614.5 722.8V741.3M615.5 737.4V741.3M616.5 734.8V741.3M617.5 721.2V735.8M618.5 734.8V757.5M619.5 724.5V744.5M620.5 724.5V735.8M621.5 734.8V741.3M622.5 730.2V748.2M623.5 737.4V741.3M624.5 740.3V748.2M625.5 732.4V748.2M626.5 737.4V744.5M627.5 732.4V744.5M628.5 728.1V738.4M629.5 737.4V752.5M630.5 737.4V744.5M631.5 740.3V752.5M632.5 737.4V763.6M633.5 756.5V771.6M634.5 740.3V771.6M635.5 743.5V757.5M636.5 747.2V771.6M637.5 747.2V757.5M638.5 734.8V757.5M639.5 743.5V771.6M640.5 747.2V757.5M641.5 751.5V763.6M642.5 743.5V782.7M643.5 756.5V757.5M644.5 740.3V757.5M645.5 747.2V763.6M646.5 762.6V801.8M647.5 743.5V782.7M648.5 747.2V752.5M649.5 751.5V763.6M650.5 762.6V818.5M651.5 747.2V782.7M652.5 756.5V818.5M653.5 762.6V771.6M654.5 762.6V782.7M655.5 781.7V782.7M656.5 751.5V782.7M657.5 756.5V771.6M658.5 770.6V771.6M659.5 770.6V801.8M660.5 762.6V782.7M661.5 762.6V801.8M662.5 770.6V818.5M663.5 781.7V782.7M664.5 756.5V782.7M665.5 756.5V771.6M666.5 770.6V782.7M667.5 770.6V782.7M668.5 762.6V771.6M669.5 756.5V782.7M670.5 756.5V771.6M671.5 770.6V801.8M672.5 770.6V801.8M673.5 770.6V782.7M674.5 751.5V818.5M675.5 770.6V801.8M676.5 762.6V771.6M677.5 762.6V763.6M678.5 762.6V771.6M679.5 770.6V801.8M680.5 762.6V801.8M681.5 756.5V801.8M682.5 800.8V801.8M683.5 800.8V801.8M684.5 762.6V801.8M685.5 781.7V782.7M686.5 743.5V782.7M687.5 751.5V771.6M688.5 770.6V782.7M689.5 756.5V801.8M690.5 770.6V818.5M691.5 747.2V782.7M692.5 781.7V818.5M693.5 762.6V818.5M694.5 781.7V801.8M695.5 800.8V818.5M696.5 770.6V801.8M697.5 770.6V801.8M698.5 770.6V782.7M699.5 770.6V801.8M700.5 756.5V782.7M701.5 781.7V801.8M702.5 770.6V782.7M703.5 762.6V801.8M704.5 770.6V818.5M705.5 762.6V782.7M706.5 781.7V818.5M707.5 817.5V818.5M708.5 781.7V818.5M709.5 817.5V818.5M710.5 800.8V818.5M711.5 781.7V801.8M712.5 800.8V801.8M713.5 800.8V818.5M714.5 770.6V818.5M715.5 781.7V818.5M716.5 800.8V818.5M717.5 781.7V801.8M718.5 781.7V801.8M719.5 800.8V818.5M720.5 762.6V801.8M721.5 781.7V818.5M722.5 800.8V818.5M723.5 817.5V818.5M724.5 817.5V818.5M725.5 781.7V818.5M726.5 800.8V801.8M727.5 781.7V801.8M728.5 781.7V818.5M729.5 781.7V818.5M730.5 800.8V818.5M731.5 781.7V818.5M732.5 800.8V818.5M733.5 817.5V818.5M734.5 781.7V818.5M735.5 770.6V801.8M736.5 800.8V818.5M737.5 800.8V801.8M738.5 781.7V818.5M739.5 781.7V801.8M740.5 781.7V818.5M741.5 817.5V818.5M742.5 781.7V818.5M743.5 800.8V818.5M744.5 781.7V818.5M745.5 781.7V818.5M746.5 800.8V801.8M747.5 800.8V801.8M748.5 781.7V801.8M749.5 800.8V818.5M750.5 817.5V818.5M751.5 781.7V818.5M752.5 781.7V801.8M753.5 800.8V818.5M754.5 800.8V801.8M755.5 800.8V818.5M756.5 800.8V818.5M757.5 762.6V818.5M758.5 770.6V782.7M759.5 781.7V818.5M760.5 781.7V818.5M761.5 781.7V801.8M762.5 781.7V818.5M763.5 817.5V818.5M764.5 762.6V818.5M765.5 770.6V782.7M766.5 781.7V818.5M767.5 800.8V818.5M768.5 800.8V801.8M769.5 800.8V818.5M770.5 800.8V818.5M771.5 817.5V818.5M772.5 781.7V818.5M773.5 800.8V818.5M774.5 800.8V818.5M775.5 800.8V818.5M776.5 781.7V801.8M777.5 770.6V818.5M778.5 800.8V801.8M779.5 781.7V818.5M780.5 781.7V818.5M781.5 781.7V801.8M782.5 800.8V818.5M783.5 781.7V818.5M784.5 762.6V818.5M785.5 817.5V818.5M786.5 800.8V818.5M787.5 800.8V818.5M788.5 770.6V818.5M789.5 781.7V818.5M790.5 770.6V801.8M791.5 800.8V818.5M792.5 800.8V818.5M793.5 781.7V801.8M794.5 781.7V801.8M795.5 800.8V818.5M796.5 770.6V801.8M797.5 781.7V818.5M798.5 781.7V818.5M799.5 781.7V818.5M800.5 800.8V801.8M801.5 800.8V818.5M802.5 781.7V818.5M803.5 800.8V818.5M804.5 770.6V801.8M805.5 781.7V801.8M806.5 800.8V801.8M807.5 781.7V801.8M808.5 800.8V818.5M809.5 800.8V818.5M810.5 800.8V801.8M811.5 762.6V801.8M812.5 781.7V801.8M813.5 800.8V801.8M814.5 770.6V801.8M815.5 800.8V818.5M816.5 817.5V818.5M817.5 800.8V818.5M818.5 781.7V801.8M819.5 781.7V801.8M820.5 770.6V801.8M821.5 800.8V818.5M822.5 781.7V818.5M823.5 800.8V818.5M824.5 817.5V818.5M825.5 817.5V818.5M826.5 781.7V818.5M827.5 800.8V818.5M828.5 800.8V818.5M829.5 770.6V818.5M830.5 800.8V801.8M831.5 800.8V801.8M832.5 781.7V818.5M833.5 817.5V818.5M834.5 800.8V818.5M835.5 817.5V818.5M836.5 817.5V818.5M837.5 781.7V818.5M838.5 770.6V818.5M839.5 817.5V818.5M840.5 817.5V818.5M841.5 817.5V818.5M842.5 762.6V818.5M843.5 800.8V818.5M844.5 800.8V818.5M845.5 800.8V818.5M846.5 781.7V818.5M847.5 781.7V801.8M848.5 800.8V818.5M849.5 781.7V801.8M850.5 800.8V818.5M851.5 781.7V818.5M852.5 817.5V818.5M853.5 756.5V818.5M854.5 781.7V801.8M855.5 800.8V818.5M856.5 800.8V818.5M857.5 781.7V818.5M858.5 800.8V818.5M859.5 781.7V818.5M860.5 781.7V818.5M861.5 781.7V801.8" stroke="#20a03a" stroke-width="2.5" fill="none" shape-rendering="crispEdges"/><path clip-path="url(#cm)" d="M463.5 817.5V818.5M464.5 817.5V818.5M465.5 817.5V818.5M466.5 817.5V818.5M467.5 817.5V818.5M468.5 817.5V818.5M469.5 800.8V818.5M470.5 817.5V818.5M471.5 817.5V818.5M472.5 817.5V818.5M473.5 817.5V818.5M474.5 817.5V818.5M475.5 817.5V818.5M476.5 817.5V818.5M477.5 817.5V818.5M478.5 817.5V818.5M479.5 817.5V818.5M480.5 800.8V818.5M481.5 817.5V818.5M482.5 817.5V818.5M483.5 817.5V818.5M484.5 817.5V818.5M485.5 817.5V818.5M486.5 817.5V818.5M487.5 817.5V818.5M488.5 817.5V818.5M489.5 817.5V818.5M490.5 817.5V818.5M491.5 817.5V818.5M492.5 817.5V818.5M493.5 817.5V818.5M494.5 817.5V818.5M495.5 817.5V818.5M496.5 817.5V818.5M497.5 817.5V818.5M498.5 817.5V818.5M499.5 817.5V818.5M500.5 817.5V818.5M501.5 817.5V818.5M502.5 817.5V818.5M503.5 817.5V818.5M504.5 817.5V818.5M505.5 817.5V818.5M506.5 817.5V818.5M507.5 817.5V818.5M508.5 817.5V818.5M509.5 728.1V818.5M510.5 664.2V729.1M511.5 629.8V665.2M512.5 606.8V630.8M513.5 606.3V615.1M514.5 614.1V630.6M515.5 629.6V638.4M516.5 637.4V653.5M517.5 652.5V671.2M518.5 670.2V687.6M519.5 686.6V700.3M520.5 699.3V716.7M521.5 715.7V738.4M522.5 737.4V782.7M523.5 743.5V763.6M524.5 762.6V801.8M525.5 800.8V818.5M526.5 817.5V818.5M527.5 817.5V818.5M528.5 817.5V818.5M529.5 817.5V818.5M530.5 817.5V818.5M531.5 817.5V818.5M532.5 817.5V818.5M533.5 817.5V818.5M534.5 817.5V818.5M535.5 817.5V818.5M536.5 817.5V818.5M537.5 817.5V818.5M538.5 817.5V818.5M539.5 817.5V818.5M540.5 817.5V818.5M541.5 817.5V818.5M542.5 817.5V818.5M543.5 817.5V818.5M544.5 817.5V818.5M545.5 817.5V818.5M546.5 817.5V818.5M547.5 817.5V818.5M548.5 817.5V818.5M549.5 817.5V818.5M550.5 817.5V818.5M551.5 817.5V818.5M552.5 817.5V818.5M553.5 817.5V818.5M554.5 817.5V818.5M555.5 817.5V818.5M556.5 817.5V818.5M557.5 817.5V818.5M558.5 817.5V818.5M559.5 817.5V818.5M560.5 817.5V818.5M561.5 817.5V818.5M562.5 817.5V818.5M563.5 817.5V818.5M564.5 817.5V818.5M565.5 817.5V818.5M566.5 817.5V818.5M567.5 817.5V818.5M568.5 817.5V818.5M569.5 817.5V818.5M570.5 817.5V818.5M571.5 817.5V818.5M572.5 817.5V818.5M573.5 817.5V818.5M574.5 817.5V818.5M575.5 817.5V818.5M576.5 817.5V818.5M577.5 817.5V818.5M578.5 817.5V818.5M579.5 817.5V818.5M580.5 817.5V818.5M581.5 817.5V818.5M582.5 817.5V818.5M583.5 817.5V818.5M584.5 817.5V818.5M585.5 817.5V818.5M586.5 817.5V818.5M587.5 817.5V818.5M588.5 817.5V818.5M589.5 817.5V818.5M590.5 817.5V818.5M591.5 817.5V818.5M592.5 817.5V818.5M593.5 817.5V818.5M594.5 817.5V818.5M595.5 817.5V818.5M596.5 817.5V818.5M597.5 817.5V818.5M598.5 817.5V818.5M599.5 817.5V818.5M600.5 817.5V818.5M601.5 817.5V818.5M602.5 817.5V818.5M603.5 817.5V818.5M604.5 817.5V818.5M605.5 817.5V818.5M606.5 817.5V818.5M607.5 817.5V818.5M608.5 817.5V818.5M609.5 817.5V818.5M610.5 817.5V818.5M611.5 817.5V818.5M612.5 817.5V818.5M613.5 817.5V818.5M614.5 817.5V818.5M615.5 817.5V818.5M616.5 817.5V818.5M617.5 817.5V818.5M618.5 817.5V818.5M619.5 817.5V818.5M620.5 817.5V818.5M621.5 817.5V818.5M622.5 817.5V818.5M623.5 817.5V818.5M624.5 817.5V818.5M625.5 817.5V818.5M626.5 817.5V818.5M627.5 817.5V818.5M628.5 817.5V818.5M629.5 817.5V818.5M630.5 817.5V818.5M631.5 817.5V818.5M632.5 817.5V818.5M633.5 817.5V818.5M634.5 817.5V818.5M635.5 817.5V818.5M636.5 817.5V818.5M637.5 817.5V818.5M638.5 817.5V818.5M639.5 817.5V818.5M640.5 817.5V818.5M641.5 817.5V818.5M642.5 817.5V818.5M643.5 817.5V818.5M644.5 817.5V818.5M645.5 817.5V818.5M646.5 817.5V818.5M647.5 817.5V818.5M648.5 817.5V818.5M649.5 817.5V818.5M650.5 800.8V818.5M651.5 817.5V818.5M652.5 800.8V818.5M653.5 800.8V801.8M654.5 800.8V818.5M655.5 817.5V818.5M656.5 817.5V818.5M657.5 817.5V818.5M658.5 817.5V818.5M659.5 817.5V818.5M660.5 817.5V818.5M661.5 817.5V818.5M662.5 817.5V818.5M663.5 817.5V818.5M664.5 817.5V818.5M665.5 817.5V818.5M666.5 817.5V818.5M667.5 817.5V818.5M668.5 817.5V818.5M669.5 817.5V818.5M670.5 817.5V818.5M671.5 817.5V818.5M672.5 817.5V818.5M673.5 817.5V818.5M674.5 817.5V818.5M675.5 817.5V818.5M676.5 817.5V818.5M677.5 817.5V818.5M678.5 817.5V818.5M679.5 817.5V818.5M680.5 817.5V818.5M681.5 817.5V818.5M682.5 817.5V818.5M683.5 817.5V818.5M684.5 817.5V818.5M685.5 817.5V818.5M686.5 817.5V818.5M687.5 800.8V818.5M688.5 817.5V818.5M689.5 817.5V818.5M690.5 817.5V818.5M691.5 817.5V818.5M692.5 817.5V818.5M693.5 817.5V818.5M694.5 817.5V818.5M695.5 817.5V818.5M696.5 817.5V818.5M697.5 800.8V818.5M698.5 817.5V818.5M699.5 817.5V818.5M700.5 817.5V818.5M701.5 817.5V818.5M702.5 817.5V818.5M703.5 817.5V818.5M704.5 817.5V818.5M705.5 817.5V818.5M706.5 817.5V818.5M707.5 817.5V818.5M708.5 817.5V818.5M709.5 817.5V818.5M710.5 817.5V818.5M711.5 817.5V818.5M712.5 817.5V818.5M713.5 817.5V818.5M714.5 817.5V818.5M715.5 817.5V818.5M716.5 817.5V818.5M717.5 817.5V818.5M718.5 817.5V818.5M719.5 817.5V818.5M720.5 817.5V818.5M721.5 817.5V818.5M722.5 817.5V818.5M723.5 817.5V818.5M724.5 817.5V818.5M725.5 817.5V818.5M726.5 817.5V818.5M727.5 817.5V818.5M728.5 817.5V818.5M729.5 817.5V818.5M730.5 817.5V818.5M731.5 817.5V818.5M732.5 817.5V818.5M733.5 800.8V818.5M734.5 800.8V818.5M735.5 817.5V818.5M736.5 817.5V818.5M737.5 817.5V818.5M738.5 817.5V818.5M739.5 817.5V818.5M740.5 817.5V818.5M741.5 817.5V818.5M742.5 817.5V818.5M743.5 817.5V818.5M744.5 817.5V818.5M745.5 817.5V818.5M746.5 817.5V818.5M747.5 817.5V818.5M748.5 817.5V818.5M749.5 817.5V818.5M750.5 817.5V818.5M751.5 817.5V818.5M752.5 817.5V818.5M753.5 817.5V818.5M754.5 817.5V818.5M755.5 817.5V818.5M756.5 817.5V818.5M757.5 817.5V818.5M758.5 817.5V818.5M759.5 817.5V818.5M760.5 817.5V818.5M761.5 817.5V818.5M762.5 817.5V818.5M763.5 817.5V818.5M764.5 817.5V818.5M765.5 817.5V818.5M766.5 817.5V818.5M767.5 817.5V818.5M768.5 817.5V818.5M769.5 800.8V818.5M770.5 817.5V818.5M771.5 817.5V818.5M772.5 817.5V818.5M773.5 817.5V818.5M774.5 817.5V818.5M775.5 817.5V818.5M776.5 817.5V818.5M777.5 817.5V818.5M778.5 817.5V818.5M779.5 817.5V818.5M780.5 817.5V818.5M781.5 817.5V818.5M782.5 817.5V818.5M783.5 817.5V818.5M784.5 817.5V818.5M785.5 817.5V818.5M786.5 817.5V818.5M787.5 817.5V818.5M788.5 817.5V818.5M789.5 817.5V818.5M790.5 817.5V818.5M791.5 817.5V818.5M792.5 817.5V818.5M793.5 817.5V818.5M794.5 817.5V818.5M795.5 800.8V818.5M796.5 817.5V818.5M797.5 817.5V818.5M798.5 817.5V818.5M799.5 817.5V818.5M800.5 817.5V818.5M801.5 817.5V818.5M802.5 817.5V818.5M803.5 817.5V818.5M804.5 817.5V818.5M805.5 817.5V818.5M806.5 817.5V818.5M807.5 817.5V818.5M808.5 817.5V818.5M809.5 817.5V818.5M810.5 817.5V818.5M811.5 817.5V818.5M812.5 817.5V818.5M813.5 817.5V818.5M814.5 817.5V818.5M815.5 817.5V818.5M816.5 817.5V818.5M817.5 817.5V818.5M818.5 817.5V818.5M819.5 817.5V818.5M820.5 817.5V818.5M821.5 817.5V818.5M822.5 817.5V818.5M823.5 817.5V818.5M824.5 817.5V818.5M825.5 817.5V818.5M826.5 817.5V818.5M827.5 817.5V818.5M828.5 817.5V818.5M829.5 817.5V818.5M830.5 817.5V818.5M831.5 817.5V818.5M832.5 800.8V818.5M833.5 817.5V818.5M834.5 817.5V818.5M835.5 817.5V818.5M836.5 817.5V818.5M837.5 817.5V818.5M838.5 817.5V818.5M839.5 817.5V818.5M840.5 817.5V818.5M841.5 817.5V818.5M842.5 817.5V818.5M843.5 817.5V818.5M844.5 817.5V818.5M845.5 817.5V818.5M846.5 817.5V818.5M847.5 817.5V818.5M848.5 817.5V818.5M849.5 817.5V818.5M850.5 817.5V818.5M851.5 817.5V818.5M852.5 817.5V818.5M853.5 817.5V818.5M854.5 817.5V818.5M855.5 800.8V818.5M856.5 817.5V818.5M857.5 817.5V818.5M858.5 817.5V818.5M859.5 817.5V818.5M860.5 817.5V818.5M861.5 817.5V818.5" stroke="#ff0000" stroke-width="2.0" fill="none" shape-rendering="crispEdges"/><path clip-path="url(#cm)" d="M525.5 801.3V818M526.5 801.3V818M527.5 801.3V818M528.5 801.3V818M529.5 801.3V818M530.5 801.3V818M531.5 801.3V818M532.5 801.3V818M533.5 801.3V818M534.5 801.3V818M535.5 801.3V818M536.5 782.2V818M537.5 801.3V818M538.5 801.3V818M539.5 801.3V818M540.5 801.3V818M541.5 801.3V818M542.5 801.3V818M543.5 782.2V818M544.5 801.3V818M545.5 801.3V818M546.5 801.3V818M547.5 801.3V818M548.5 801.3V818M549.5 801.3V818M550.5 801.3V818M551.5 801.3V818M552.5 801.3V818M555.5 801.3V818M556.5 801.3V818M558.5 801.3V818M559.5 801.3V818M560.5 801.3V818M561.5 782.2V818M562.5 782.2V818M563.5 801.3V818M564.5 801.3V818M565.5 801.3V818M566.5 801.3V818M567.5 801.3V818M568.5 801.3V818M569.5 801.3V818M570.5 801.3V818M571.5 801.3V818M572.5 801.3V818M573.5 782.2V818M574.5 801.3V818M575.5 782.2V818M576.5 801.3V818M577.5 801.3V818M578.5 801.3V818M579.5 801.3V818M580.5 801.3V818M581.5 801.3V818M582.5 801.3V818M583.5 801.3V818M584.5 801.3V818M585.5 801.3V818M587.5 801.3V818M588.5 801.3V818M589.5 782.2V818M590.5 801.3V818M591.5 801.3V818M592.5 801.3V818M593.5 801.3V818M594.5 801.3V818M595.5 801.3V818M596.5 801.3V818M597.5 801.3V818M599.5 801.3V818M600.5 801.3V818M601.5 801.3V818M602.5 801.3V818M603.5 801.3V818M604.5 801.3V818M606.5 801.3V818M608.5 801.3V818M609.5 801.3V818M610.5 801.3V818M611.5 801.3V818M613.5 801.3V818M614.5 801.3V818M615.5 801.3V818M616.5 801.3V818M617.5 801.3V818M618.5 801.3V818M619.5 801.3V818M620.5 801.3V818M621.5 801.3V818M622.5 801.3V818M624.5 801.3V818M625.5 801.3V818M626.5 782.2V818M627.5 801.3V818M629.5 801.3V818M630.5 801.3V818M631.5 801.3V818M632.5 801.3V818M633.5 801.3V818M634.5 801.3V818M635.5 801.3V818M636.5 801.3V818M637.5 782.2V818M638.5 801.3V818M639.5 801.3V818M640.5 801.3V818M641.5 801.3V818M642.5 801.3V818M643.5 801.3V818M644.5 801.3V818M645.5 801.3V818M646.5 801.3V818M647.5 801.3V818M648.5 801.3V818M649.5 801.3V818" stroke="#ff0000" stroke-width="1" fill="none" shape-rendering="crispEdges"/><polyline clip-path="url(#cm)" points="463.7,807.2 464.7,808.6 465.7,810.0 466.8,812.7 467.8,815.3 468.8,817.2 469.8,818.0 470.8,818.0 471.9,817.3 472.9,815.9 473.9,814.4 474.9,812.8 476.0,811.0 477.0,809.1 478.0,807.5 479.0,806.2 480.1,805.1 481.1,804.2 482.1,803.4 483.1,802.7 484.2,802.4 485.2,802.5 486.2,803.1 487.2,804.2 488.3,805.4 489.3,806.6 490.3,807.8 491.3,808.8 492.4,809.8 493.4,810.6 494.4,811.4 495.4,812.3 496.4,813.1 497.5,813.9 498.5,814.7 499.5,815.5 500.5,816.3 501.6,817.1 502.6,817.9 503.6,818.0 504.6,816.8 505.7,811.7 506.7,790.4 507.7,772.3 508.7,750.5 509.8,725.8 510.8,701.4 511.8,678.0 512.8,657.0 513.9,641.6 514.9,631.6 515.9,625.5 516.9,623.2 518.0,622.8 519.0,623.5 520.0,625.0 521.0,626.5 522.0,628.0 523.1,629.5 524.1,630.9 525.1,632.4 526.1,633.9 527.2,635.3 528.2,636.8 529.2,638.2 530.2,639.6 531.3,640.9 532.3,642.3 533.3,643.6 534.3,645.0 535.4,646.3 536.4,647.6 537.4,649.0 538.4,650.3 539.5,651.6 540.5,652.9 541.5,654.2 542.5,655.5 543.6,656.7 544.6,657.9 545.6,659.1 546.6,660.2 547.6,661.4 548.7,662.5 549.7,663.6 550.7,664.8 551.7,665.9 552.8,667.1 553.8,668.2 554.8,669.4 555.8,670.5 556.9,671.7 557.9,672.8 558.9,674.0 559.9,675.1 561.0,676.2 562.0,677.4 563.0,678.5 564.0,679.7 565.1,680.8 566.1,682.0 567.1,683.1 568.1,684.2 569.2,685.4 570.2,686.5 571.2,687.6 572.2,688.7 573.2,689.7 574.3,690.8 575.3,691.9 576.3,692.9 577.3,694.0 578.4,695.1 579.4,696.2 580.4,697.2 581.4,698.3 582.5,699.4 583.5,700.5 584.5,701.5 585.5,702.6 586.6,703.7 587.6,704.7 588.6,705.8 589.6,706.9 590.7,708.0 591.7,709.1 592.7,710.2 593.7,711.3 594.8,712.4 595.8,713.5 596.8,714.7 597.8,715.8 598.8,716.9 599.9,718.1 600.9,719.2 601.9,720.3 602.9,721.5 604.0,722.6 605.0,723.7 606.0,724.9 607.0,726.0 608.1,727.1 609.1,728.3 610.1,729.4 611.1,730.5 612.2,731.7 613.2,732.8 614.2,733.9 615.2,735.0 616.3,736.2 617.3,737.3 618.3,738.4 619.3,739.6 620.4,740.7 621.4,741.8 622.4,742.9 623.4,744.0 624.4,745.1 625.5,746.2 626.5,747.3 627.5,748.4 628.5,749.5 629.6,750.5 630.6,751.6 631.6,752.7 632.6,753.8 633.7,754.9 634.7,756.0 635.7,757.0 636.7,758.1 637.8,759.2 638.8,760.3 639.8,761.4 640.8,762.4 641.9,763.5 642.9,764.6 643.9,765.7 644.9,766.7 646.0,767.8 647.0,768.8 648.0,769.8 649.0,770.8 650.0,771.8 651.1,772.8 652.1,773.7 653.1,774.7 654.1,775.7 655.2,776.6 656.2,777.6 657.2,778.6 658.2,779.5 659.3,780.5 660.3,781.5 661.3,782.4 662.3,783.4 663.4,784.4 664.4,785.3 665.4,786.3 666.4,787.3 667.5,788.2 668.5,789.2 669.5,790.1 670.5,790.9 671.6,791.6 672.6,792.3 673.6,793.0 674.6,793.5 675.6,794.1 676.7,794.6 677.7,795.1 678.7,795.7 679.7,796.2 680.8,796.7 681.8,797.2 682.8,797.8 683.8,798.3 684.9,798.8 685.9,799.4 686.9,799.9 687.9,800.5 689.0,801.1 690.0,801.6 691.0,802.2 692.0,802.8 693.1,803.5 694.1,804.3 695.1,805.3 696.1,806.5 697.2,807.9 698.2,809.5 699.2,811.2 700.2,813.1 701.2,815.2 702.3,817.3 703.3,818.0 704.3,818.0 705.3,818.0 706.4,818.0 707.4,818.0 708.4,818.0 709.4,818.0 710.5,818.0 711.5,818.0 712.5,818.0 713.5,818.0 714.6,818.0 715.6,818.0 716.6,818.0 717.6,818.0 718.7,818.0 719.7,818.0 720.7,818.0 721.7,818.0 722.8,818.0 723.8,818.0 724.8,818.0 725.8,818.0 726.8,818.0 727.9,818.0 728.9,818.0 729.9,818.0 730.9,818.0 732.0,818.0 733.0,818.0 734.0,818.0 735.0,818.0 736.1,818.0 737.1,818.0 738.1,818.0 739.1,818.0 740.2,818.0 741.2,818.0 742.2,818.0 743.2,818.0 744.3,818.0 745.3,818.0 746.3,818.0 747.3,818.0 748.4,818.0 749.4,818.0 750.4,818.0 751.4,818.0 752.4,818.0 753.5,818.0 754.5,818.0 755.5,818.0 756.5,818.0 757.6,818.0 758.6,818.0 759.6,818.0 760.6,818.0 761.7,818.0 762.7,818.0 763.7,818.0 764.7,818.0 765.8,818.0 766.8,818.0 767.8,818.0 768.8,818.0 769.9,818.0 770.9,818.0 771.9,818.0 772.9,818.0 774.0,818.0 775.0,818.0 776.0,818.0 777.0,818.0 778.0,818.0 779.1,818.0 780.1,818.0 781.1,818.0 782.1,818.0 783.2,818.0 784.2,818.0 785.2,818.0 786.2,818.0 787.3,818.0 788.3,818.0 789.3,818.0 790.3,818.0 791.4,818.0 792.4,818.0 793.4,818.0 794.4,818.0 795.5,818.0 796.5,818.0 797.5,818.0 798.5,818.0 799.6,818.0 800.6,818.0 801.6,818.0 802.6,818.0 803.6,818.0 804.7,818.0 805.7,818.0 806.7,818.0 807.7,818.0 808.8,818.0 809.8,818.0 810.8,818.0 811.8,818.0 812.9,818.0 813.9,818.0 814.9,818.0 815.9,818.0 817.0,818.0 818.0,818.0 819.0,818.0 820.0,818.0 821.1,818.0 822.1,818.0 823.1,818.0 824.1,818.0 825.2,818.0 826.2,818.0 827.2,818.0 828.2,818.0 829.2,818.0 830.3,818.0 831.3,818.0 832.3,818.0 833.3,818.0 834.4,818.0 835.4,818.0 836.4,818.0 837.4,818.0 838.5,818.0 839.5,818.0 840.5,818.0 841.5,818.0 842.6,818.0 843.6,818.0 844.6,818.0 845.6,818.0 846.7,818.0 847.7,818.0 848.7,818.0 849.7,818.0 850.8,818.0 851.8,818.0 852.8,818.0 853.8,818.0 854.8,818.0 855.9,818.0 856.9,818.0 857.9,818.0 858.9,818.0 860.0,818.0 861.0,818.0 862.0,818.0" fill="none" stroke="#000" stroke-width="2.2"/><path clip-path="url(#cr)" d="M464.5 845.2V866.1M465.5 845.6V865.4M466.5 845.7V865.4M467.5 845.6V865.8M468.5 846.4V866.1M469.5 846.3V865.5M470.5 845.1V865.5M471.5 844.9V866.3M472.5 847.2V865.9M473.5 848.7V866.3M474.5 845.3V866.2M475.5 848.0V865.4M476.5 845.9V865.5M477.5 845.4V866.5M478.5 845.9V865.5M479.5 847.7V866.2M480.5 845.9V865.3M481.5 847.3V865.6M482.5 846.5V865.9M483.5 848.7V865.4M484.5 848.4V865.7M485.5 848.6V865.9M486.5 845.4V866.3M487.5 847.0V865.9M488.5 848.1V866.5M489.5 846.9V865.4M490.5 848.6V865.2M491.5 845.7V866.4M492.5 847.9V865.6M493.5 847.8V866.3M494.5 847.3V866.4M495.5 846.3V865.9M496.5 849.1V866.3M497.5 846.0V866.6M498.5 848.3V865.2M499.5 847.5V865.8M500.5 847.2V866.5M501.5 845.5V865.3M502.5 845.3V865.3M503.5 845.4V865.6M504.5 845.6V866.1M505.5 847.4V866.5M506.5 840.7V879.5M507.5 830.1V868.5M508.5 840.4V878.1M509.5 826.4V873.9M510.5 840.0V872.9M511.5 840.7V872.9M512.5 835.4V868.9M513.5 837.5V874.1M514.5 842.4V867.3M515.5 834.9V872.9M516.5 836.2V868.3M517.5 839.7V873.0M518.5 840.5V876.0M519.5 840.4V868.3M520.5 840.0V871.8M521.5 835.4V871.0M522.5 840.5V873.7M523.5 841.0V870.1M524.5 837.4V877.2M525.5 839.3V874.1M526.5 836.8V871.9M527.5 836.9V877.3M528.5 841.7V868.7M529.5 828.2V881.4M530.5 839.8V874.3M531.5 837.9V877.4M532.5 836.6V869.8M533.5 835.3V872.0M534.5 837.2V878.2M535.5 835.0V882.1M536.5 828.1V871.7M537.5 834.8V873.2M538.5 835.6V871.4M539.5 839.9V872.3M540.5 837.6V875.3M541.5 831.6V870.7M542.5 839.9V880.8M543.5 840.7V872.1M544.5 840.7V872.2M545.5 835.1V872.6M546.5 836.3V873.5M547.5 836.9V871.2M548.5 839.2V879.0M549.5 837.0V872.5M550.5 835.6V876.4M551.5 841.1V875.1M552.5 839.8V878.9M553.5 842.2V879.6M554.5 839.3V871.0M555.5 839.9V879.0M556.5 840.4V877.7M557.5 837.5V882.7M558.5 835.8V873.1M559.5 835.4V877.5M560.5 838.2V896.4M561.5 840.2V896.4M562.5 836.8V875.0M563.5 838.2V874.5M564.5 842.2V884.4M565.5 837.9V889.2M566.5 839.9V883.5M567.5 840.1V877.6M568.5 837.0V876.0M569.5 835.2V880.7M570.5 839.8V882.2M571.5 840.8V890.4M572.5 842.1V870.5M573.5 841.2V875.3M574.5 836.9V884.0M575.5 837.4V878.6M576.5 841.5V874.2M577.5 837.4V883.0M578.5 840.5V879.9M579.5 836.8V885.6M580.5 830.4V874.7M581.5 831.8V872.6M582.5 841.1V874.2M583.5 832.3V874.8M584.5 835.4V877.9M585.5 841.0V879.3M586.5 836.1V872.0M587.5 836.9V876.8M588.5 841.9V876.7M589.5 837.1V880.0M590.5 841.6V873.0M591.5 838.4V880.6M592.5 825.5V881.8M593.5 839.5V876.9M594.5 838.1V875.7M595.5 837.5V875.4M596.5 839.7V881.7M597.5 836.8V878.1M598.5 837.5V879.8M599.5 837.6V878.3M600.5 836.4V876.0M601.5 838.1V882.6M602.5 840.9V907.9M603.5 841.0V873.4M604.5 841.2V887.8M605.5 840.8V876.5M606.5 835.5V873.3M607.5 841.0V875.5M608.5 840.9V876.4M609.5 835.3V872.4M610.5 840.9V879.6M611.5 838.4V880.1M612.5 839.1V877.6M613.5 834.6V873.3M614.5 838.4V882.9M615.5 838.7V872.6M616.5 832.6V875.4M617.5 840.7V873.7M618.5 835.3V872.4M619.5 837.2V875.0M620.5 836.8V885.8M621.5 836.5V878.2M622.5 837.9V881.3M623.5 838.9V880.4M624.5 842.2V880.2M625.5 832.1V876.1M626.5 836.0V882.2M627.5 842.1V872.2M628.5 839.1V888.1M629.5 831.7V875.6M630.5 833.0V872.2M631.5 835.6V881.7M632.5 842.4V879.1M633.5 837.9V882.7M634.5 842.3V871.2M635.5 838.9V874.5M636.5 837.6V885.4M637.5 835.9V876.4M638.5 842.0V872.9M639.5 838.0V875.6M640.5 839.6V877.8M641.5 840.2V873.3M642.5 837.7V877.6M643.5 836.1V870.7M644.5 834.8V881.4M645.5 841.6V874.0M646.5 842.6V883.0M647.5 839.9V879.3M648.5 842.1V880.7M649.5 843.2V875.9M650.5 840.8V881.4M651.5 839.8V873.2M652.5 841.2V879.5M653.5 843.2V870.5M654.5 839.9V872.6M655.5 839.9V871.0M656.5 844.2V874.9M657.5 843.2V879.7M658.5 841.2V870.8M659.5 839.7V870.3M660.5 842.4V876.8M661.5 843.2V874.7M662.5 840.1V884.3M663.5 841.4V874.1M664.5 841.4V878.4M665.5 844.7V877.0M666.5 840.9V867.9M667.5 839.5V878.0M668.5 841.1V871.2M669.5 840.3V875.3M670.5 844.3V867.7M671.5 843.3V872.1M672.5 841.3V871.7M673.5 842.2V876.8M674.5 843.4V870.6M675.5 845.2V867.4M676.5 842.4V872.4M677.5 844.4V867.1M678.5 843.6V865.9M679.5 840.6V868.5M680.5 845.5V869.0M681.5 843.9V871.5M682.5 843.8V865.5M683.5 842.4V870.3M684.5 842.9V867.3M685.5 844.5V865.3M686.5 845.8V865.9M687.5 846.4V869.1M688.5 843.4V868.1M689.5 845.4V866.7M690.5 842.9V872.8M691.5 844.2V863.3M692.5 844.4V864.8M693.5 845.7V867.6M694.5 845.0V872.0M695.5 845.8V862.1M696.5 846.8V865.3M697.5 844.9V863.6M698.5 843.4V867.1M699.5 844.4V861.9M700.5 847.4V862.2M701.5 845.4V862.3M702.5 844.9V862.6M703.5 845.2V862.3M704.5 847.6V862.3M705.5 847.3V863.1M706.5 848.6V862.3M707.5 845.4V862.3M708.5 846.0V862.6M709.5 848.7V862.5M710.5 849.0V862.2M711.5 845.7V862.3M712.5 844.3V862.2M713.5 843.3V862.2M714.5 848.6V862.5M715.5 846.4V861.7M716.5 843.9V862.1M717.5 845.8V862.1M718.5 849.1V862.2M719.5 849.0V862.0M720.5 848.8V861.4M721.5 848.0V861.3M722.5 845.4V861.6M723.5 846.8V861.9M724.5 846.8V861.9M725.5 848.1V861.4M726.5 847.9V861.4M727.5 848.8V861.6M728.5 849.2V861.2M729.5 840.5V861.5M730.5 847.1V861.2M731.5 846.2V861.4M732.5 846.7V861.0M733.5 845.9V861.1M734.5 846.6V861.0M735.5 847.6V860.8M736.5 848.1V860.7M737.5 848.9V860.8M738.5 848.7V860.8M739.5 845.7V860.5M740.5 847.1V860.4M741.5 848.9V860.3M742.5 849.2V860.8M743.5 846.2V860.7M744.5 840.2V860.4M745.5 846.8V860.5M746.5 849.1V860.3M747.5 847.3V860.4M748.5 845.7V860.2M749.5 848.1V859.9M750.5 842.1V860.1M751.5 841.7V860.1M752.5 848.4V860.1M753.5 848.2V860.1M754.5 848.2V860.1M755.5 848.3V859.6M756.5 848.2V859.5M757.5 848.7V859.8M758.5 847.1V859.4M759.5 846.4V859.7M760.5 848.0V859.6M761.5 846.2V859.6M762.5 847.0V859.3M763.5 848.1V859.2M764.5 847.8V859.2M765.5 846.6V859.3M766.5 845.7V859.3M767.5 842.4V859.0M768.5 846.7V859.0M769.5 846.9V858.9M770.5 845.5V859.0M771.5 845.8V858.9M772.5 847.5V858.8M773.5 847.8V858.9M774.5 841.0V858.8M775.5 848.1V858.7M776.5 848.3V858.7M777.5 847.5V858.4M778.5 848.1V858.4M779.5 847.4V858.3M780.5 847.5V858.4M781.5 845.3V858.3M782.5 845.9V858.7M783.5 845.5V858.7M784.5 847.6V858.7M785.5 847.7V858.9M786.5 848.2V858.6M787.5 848.8V858.7M788.5 846.4V858.7M789.5 848.0V858.8M790.5 848.0V858.9M791.5 845.7V858.8M792.5 845.8V858.7M793.5 845.4V858.7M794.5 847.1V858.7M795.5 847.6V858.7M796.5 847.3V858.9M797.5 848.8V858.6M798.5 846.0V858.6M799.5 847.7V858.9M800.5 846.2V858.9M801.5 847.0V858.8M802.5 846.7V858.6M803.5 848.7V858.7M804.5 848.2V858.6M805.5 846.1V858.9M806.5 848.4V858.7M807.5 846.9V858.8M808.5 847.6V858.8M809.5 845.3V858.8M810.5 849.1V858.7M811.5 848.7V858.8M812.5 845.2V858.8M813.5 846.7V858.6M814.5 846.4V858.6M815.5 848.6V858.8M816.5 840.6V858.8M817.5 848.0V858.7M818.5 844.7V858.9M819.5 847.4V858.8M820.5 846.9V858.7M821.5 845.6V858.9M822.5 848.7V858.7M823.5 848.1V858.8M824.5 847.4V858.8M825.5 847.1V858.6M826.5 846.4V858.6M827.5 845.5V858.8M828.5 846.5V858.9M829.5 847.7V858.7M830.5 847.4V858.9M831.5 846.2V858.8M832.5 847.6V858.9M833.5 847.5V858.9M834.5 846.6V858.8M835.5 846.3V858.7M836.5 845.9V858.8M837.5 845.8V858.8M838.5 843.7V858.6M839.5 848.0V858.7M840.5 846.2V858.8M841.5 845.9V858.6M842.5 846.8V858.7M843.5 846.0V858.6M844.5 846.2V858.6M845.5 847.6V858.9M846.5 845.4V858.8M847.5 848.9V858.7M848.5 848.8V858.7M849.5 848.5V858.7M850.5 847.3V858.8M851.5 848.2V858.8M852.5 847.2V858.8M853.5 846.8V858.8M854.5 846.9V858.6M855.5 847.0V858.8M856.5 845.4V858.8M857.5 848.5V858.7M858.5 848.2V858.7M859.5 846.9V858.6" stroke="#20a03a" stroke-width="1" fill="none" shape-rendering="crispEdges"/><line x1="454" y1="856.7" x2="861" y2="856.7" stroke="#000" stroke-width="2.5"/><line x1="453.5" y1="571" x2="453.5" y2="915" stroke="#000" stroke-width="2"/><line x1="452" y1="571.5" x2="861" y2="571.5" stroke="#000" stroke-width="1.5"/><line x1="452" y1="816.5" x2="861" y2="816.5" stroke="#000" stroke-width="2.5"/><line x1="452" y1="914" x2="861" y2="914" stroke="#000" stroke-width="2"/><path d="M454 815.4h4M454 811.1h4M454 807.4h4M454 804.2h4M454 801.3h6M454 782.2h4M454 771.1h4M454 763.1h4M454 757.0h4M454 752.0h4M454 747.7h4M454 744.0h4M454 740.8h4M454 737.9h6M454 718.8h4M454 707.7h4M454 699.7h4M454 693.6h4M454 688.6h4M454 684.3h4M454 680.6h4M454 677.4h4M454 674.5h6M454 655.4h4M454 644.3h4M454 636.3h4M454 630.2h4M454 625.2h4M454 620.9h4M454 617.2h4M454 614.0h4M454 611.1h6M454 592.0h4M454 580.9h4M454 572.9h4M462.4 572v5M462.4 913v-5M462.4 817v5M478.4 572v3M478.4 913v-3M478.4 817v3M494.4 572v3M494.4 913v-3M494.4 817v3M510.4 572v3M510.4 913v-3M510.4 817v3M526.4 572v3M526.4 913v-3M526.4 817v3M542.4 572v5M542.4 913v-5M542.4 817v5M558.4 572v3M558.4 913v-3M558.4 817v3M574.4 572v3M574.4 913v-3M574.4 817v3M590.4 572v3M590.4 913v-3M590.4 817v3M606.4 572v3M606.4 913v-3M606.4 817v3M622.4 572v5M622.4 913v-5M622.4 817v5M638.4 572v3M638.4 913v-3M638.4 817v3M654.4 572v3M654.4 913v-3M654.4 817v3M670.4 572v3M670.4 913v-3M670.4 817v3M686.4 572v3M686.4 913v-3M686.4 817v3M702.4 572v5M702.4 913v-5M702.4 817v5M718.4 572v3M718.4 913v-3M718.4 817v3M734.4 572v3M734.4 913v-3M734.4 817v3M750.4 572v3M750.4 913v-3M750.4 817v3M766.4 572v3M766.4 913v-3M766.4 817v3M782.4 572v5M782.4 913v-5M782.4 817v5M798.4 572v3M798.4 913v-3M798.4 817v3M814.4 572v3M814.4 913v-3M814.4 817v3M830.4 572v3M830.4 913v-3M830.4 817v3M846.4 572v3M846.4 913v-3M846.4 817v3M454 909.0h4M454 898.5h6M454 888.1h4M454 877.6h4M454 867.2h4M454 856.7h6M454 846.2h4M454 835.8h4M454 825.4h4" stroke="#000" stroke-width="1" fill="none"/><line x1="463.7" y1="572" x2="463.7" y2="914" stroke="#0000ff" stroke-width="3"/><line x1="860" y1="572" x2="860" y2="914" stroke="#0000ff" stroke-width="3"/><path d="M465.5 596.5l4.5 4l-4.5 4zM858.5 596.5l-4.5 4l4.5 4zM465.5 626.5l4.5 4l-4.5 4zM858.5 626.5l-4.5 4l4.5 4zM465.5 656.5l4.5 4l-4.5 4zM858.5 656.5l-4.5 4l4.5 4zM465.5 686.5l4.5 4l-4.5 4zM858.5 686.5l-4.5 4l4.5 4zM465.5 716.5l4.5 4l-4.5 4zM858.5 716.5l-4.5 4l4.5 4zM465.5 746.5l4.5 4l-4.5 4zM858.5 746.5l-4.5 4l4.5 4zM465.5 776.5l4.5 4l-4.5 4zM858.5 776.5l-4.5 4l4.5 4zM465.5 806.5l4.5 4l-4.5 4zM858.5 806.5l-4.5 4l4.5 4zM465.5 836.5l4.5 4l-4.5 4zM858.5 836.5l-4.5 4l4.5 4zM465.5 866.5l4.5 4l-4.5 4zM858.5 866.5l-4.5 4l4.5 4zM465.5 896.5l4.5 4l-4.5 4zM858.5 896.5l-4.5 4l4.5 4z" fill="#0000ff"/><rect x="442" y="572" width="10" height="10" fill="#21A03B" stroke="#000" stroke-width="1"/><line x1="444" y1="577" x2="450" y2="577" stroke="#000" stroke-width="1.2"/><rect x="442" y="818.5" width="10" height="9" fill="#21A03B" stroke="#000" stroke-width="1"/><line x1="444" y1="823" x2="450" y2="823" stroke="#000" stroke-width="1.2"/><text x="442" y="617.1" font-size="16" text-anchor="end" font-family="Liberation Sans">10</text><text x="441.5" y="611.1" font-size="12" font-family="Liberation Sans">3</text><text x="442" y="680.5" font-size="16" text-anchor="end" font-family="Liberation Sans">10</text><text x="441.5" y="674.5" font-size="12" font-family="Liberation Sans">2</text><text x="442" y="743.9" font-size="16" text-anchor="end" font-family="Liberation Sans">10</text><text x="441.5" y="737.9" font-size="12" font-family="Liberation Sans">1</text><text x="442" y="807.3" font-size="16" text-anchor="end" font-family="Liberation Sans">10</text><text x="441.5" y="801.3" font-size="12" font-family="Liberation Sans">0</text><text x="450" y="862.7" font-size="16" text-anchor="end" font-family="Liberation Sans">0</text><text x="450" y="904.5" font-size="16" text-anchor="end" font-family="Liberation Sans">-4</text><text x="462.4" y="930" font-size="16" text-anchor="middle" font-family="Liberation Sans">0</text><text x="542.4" y="930" font-size="16" text-anchor="middle" font-family="Liberation Sans">10</text><text x="622.4" y="930" font-size="16" text-anchor="middle" font-family="Liberation Sans">20</text><text x="702.4" y="930" font-size="16" text-anchor="middle" font-family="Liberation Sans">30</text><text x="782.4" y="930" font-size="16" text-anchor="middle" font-family="Liberation Sans">40</text><text x="862.4" y="930" font-size="16" text-anchor="middle" font-family="Liberation Sans">50</text><text transform="translate(418,700) rotate(-90)" font-size="15" text-anchor="middle" font-family="Liberation Sans">Intensity [ Cnts]</text><clipPath id="crl"><rect x="393" y="817" width="40" height="98"/></clipPath><g clip-path="url(#crl)"><text transform="translate(418,870) rotate(-90)" font-size="15" text-anchor="middle" font-family="Liberation Sans">Resids. [StdDev.]</text></g></svg>
<div class="a" style="left:862px;top:540px;width:20px;height:394px;background:#E1E9E0;border:1px solid #8a8a8a"></div>
<div class="a" style="left:862px;top:540px;width:20px;height:21px;background:#E1E9E0;border:1px solid #8a8a8a"></div>
<div class="tri" style="left:868px;top:548px;border-left-width:4px;border-right-width:4px;border-bottom:4px solid #000"></div>
<div class="a" style="left:863px;top:886px;width:18px;height:27px;background:#cdd5cc"></div>
<div class="a" style="left:862px;top:913px;width:20px;height:21px;background:#E1E9E0;border:1px solid #8a8a8a"></div>
<div class="tri" style="left:868px;top:921px;border-left-width:4px;border-right-width:4px;border-top:4px solid #000"></div>
<div class="a" style="left:393px;top:934px;width:468px;height:17px;background:#E1E9E0;border-top:1px solid #8a8a8a"></div>
<div class="a" style="left:393px;top:934px;width:21px;height:17px;background:#E1E9E0;border:1px solid #8a8a8a"></div>
<div class="tri" style="left:400px;top:939px;border-top:4px solid transparent;border-bottom:4px solid transparent;border-right:4px solid #000;border-left:0"></div>
<div class="a" style="left:822px;top:935px;width:18px;height:16px;background:#cdd5cc;border-left:1px solid #8a8a8a"></div>
<div class="a" style="left:840px;top:934px;width:21px;height:17px;background:#E1E9E0;border:1px solid #8a8a8a"></div>
<div class="tri" style="left:849px;top:939px;border-top:4px solid transparent;border-bottom:4px solid transparent;border-left:4px solid #000;border-right:0"></div>
<div class="a" style="left:891px;top:549px;width:13px;height:13px;border-radius:50%;background:#fff;border:1px solid #555"></div>
<div class="t" style="left:909px;top:548px;">Lin. Intens. Axis</div>
<div class="a" style="left:891px;top:580px;width:13px;height:13px;border-radius:50%;background:#21A03B;border:1px solid #555"></div>
<div class="a" style="left:895px;top:584px;width:5px;height:5px;border-radius:50%;background:#000"></div>
<div class="t" style="left:909px;top:579px;">Log. Intens. Axis</div>
<div class="a" style="left:891px;top:640px;width:14px;height:14px;background:#fff;border:1px solid #333"></div>
<div class="t" style="left:909px;top:639px;">Normalize Decays</div>
<div class="a" style="left:891px;top:673px;width:13px;height:13px;border-radius:50%;background:#21A03B;border:1px solid #555"></div>
<div class="a" style="left:895px;top:677px;width:5px;height:5px;border-radius:50%;background:#000"></div>
<div class="t" style="left:909px;top:672px;">Show all Datasets</div>
<div class="a" style="left:891px;top:704px;width:13px;height:13px;border-radius:50%;background:#fff;border:1px solid #555"></div>
<div class="t" style="left:909px;top:703px;">Show Active Dataset</div>
<div class="a" style="left:891px;top:735px;width:13px;height:13px;border-radius:50%;background:#fff;border:1px solid #555"></div>
<div class="t" style="left:909px;top:734px;">TCSPC Curves Only</div>
<div class="a" style="left:891px;top:766px;width:13px;height:13px;border-radius:50%;background:#fff;border:1px solid #555"></div>
<div class="t" style="left:909px;top:765px;">Parameter Plot</div>
<div class="a" style="left:891px;top:797px;width:13px;height:13px;border-radius:50%;background:#fff;border:1px solid #555"></div>
<div class="t" style="left:909px;top:796px;">Error Correlation Plot</div>
<div class="a" style="left:1074px;top:3px;width:520px;height:942px;background:#fff"></div>
<svg class="a" style="left:1074px;top:3px" width="520" height="470" viewBox="1074 3 520 470"><text x="1333" y="26" font-size="16" font-weight="bold" text-anchor="middle" font-family="Liberation Sans">Efficiency Histogram</text><line x1="1136.6" y1="31.5" x2="1136.6" y2="425.5" stroke="#e2e2e2"/><line x1="1158.5" y1="31.5" x2="1158.5" y2="425.5" stroke="#e2e2e2"/><line x1="1180.4" y1="31.5" x2="1180.4" y2="425.5" stroke="#e2e2e2"/><line x1="1202.3" y1="31.5" x2="1202.3" y2="425.5" stroke="#e2e2e2"/><line x1="1224.2" y1="31.5" x2="1224.2" y2="425.5" stroke="#a0a0a0"/><line x1="1246.1" y1="31.5" x2="1246.1" y2="425.5" stroke="#e2e2e2"/><line x1="1268.1" y1="31.5" x2="1268.1" y2="425.5" stroke="#e2e2e2"/><line x1="1290.0" y1="31.5" x2="1290.0" y2="425.5" stroke="#e2e2e2"/><line x1="1311.9" y1="31.5" x2="1311.9" y2="425.5" stroke="#a0a0a0"/><line x1="1333.8" y1="31.5" x2="1333.8" y2="425.5" stroke="#e2e2e2"/><line x1="1355.7" y1="31.5" x2="1355.7" y2="425.5" stroke="#e2e2e2"/><line x1="1377.6" y1="31.5" x2="1377.6" y2="425.5" stroke="#e2e2e2"/><line x1="1399.5" y1="31.5" x2="1399.5" y2="425.5" stroke="#a0a0a0"/><line x1="1421.4" y1="31.5" x2="1421.4" y2="425.5" stroke="#e2e2e2"/><line x1="1443.3" y1="31.5" x2="1443.3" y2="425.5" stroke="#e2e2e2"/><line x1="1465.2" y1="31.5" x2="1465.2" y2="425.5" stroke="#e2e2e2"/><line x1="1487.2" y1="31.5" x2="1487.2" y2="425.5" stroke="#a0a0a0"/><line x1="1509.1" y1="31.5" x2="1509.1" y2="425.5" stroke="#e2e2e2"/><line x1="1531.0" y1="31.5" x2="1531.0" y2="425.5" stroke="#e2e2e2"/><line x1="1552.9" y1="31.5" x2="1552.9" y2="425.5" stroke="#e2e2e2"/><line x1="1574.8" y1="31.5" x2="1574.8" y2="425.5" stroke="#a0a0a0"/><line x1="1127" y1="424.3" x2="1583.5" y2="424.3" stroke="#e2e2e2"/><line x1="1127" y1="416.5" x2="1583.5" y2="416.5" stroke="#a0a0a0"/><line x1="1127" y1="408.7" x2="1583.5" y2="408.7" stroke="#e2e2e2"/><line x1="1127" y1="400.9" x2="1583.5" y2="400.9" stroke="#e2e2e2"/><line x1="1127" y1="393.1" x2="1583.5" y2="393.1" stroke="#e2e2e2"/><line x1="1127" y1="385.4" x2="1583.5" y2="385.4" stroke="#a0a0a0"/><line x1="1127" y1="377.6" x2="1583.5" y2="377.6" stroke="#e2e2e2"/><line x1="1127" y1="369.8" x2="1583.5" y2="369.8" stroke="#e2e2e2"/><line x1="1127" y1="362.0" x2="1583.5" y2="362.0" stroke="#e2e2e2"/><line x1="1127" y1="354.2" x2="1583.5" y2="354.2" stroke="#a0a0a0"/><line x1="1127" y1="346.4" x2="1583.5" y2="346.4" stroke="#e2e2e2"/><line x1="1127" y1="338.7" x2="1583.5" y2="338.7" stroke="#e2e2e2"/><line x1="1127" y1="330.9" x2="1583.5" y2="330.9" stroke="#e2e2e2"/><line x1="1127" y1="323.1" x2="1583.5" y2="323.1" stroke="#a0a0a0"/><line x1="1127" y1="315.3" x2="1583.5" y2="315.3" stroke="#e2e2e2"/><line x1="1127" y1="307.5" x2="1583.5" y2="307.5" stroke="#e2e2e2"/><line x1="1127" y1="299.8" x2="1583.5" y2="299.8" stroke="#e2e2e2"/><line x1="1127" y1="292.0" x2="1583.5" y2="292.0" stroke="#a0a0a0"/><line x1="1127" y1="284.2" x2="1583.5" y2="284.2" stroke="#e2e2e2"/><line x1="1127" y1="276.4" x2="1583.5" y2="276.4" stroke="#e2e2e2"/><line x1="1127" y1="268.6" x2="1583.5" y2="268.6" stroke="#e2e2e2"/><line x1="1127" y1="260.8" x2="1583.5" y2="260.8" stroke="#a0a0a0"/><line x1="1127" y1="253.0" x2="1583.5" y2="253.0" stroke="#e2e2e2"/><line x1="1127" y1="245.3" x2="1583.5" y2="245.3" stroke="#e2e2e2"/><line x1="1127" y1="237.5" x2="1583.5" y2="237.5" stroke="#e2e2e2"/><line x1="1127" y1="229.7" x2="1583.5" y2="229.7" stroke="#a0a0a0"/><line x1="1127" y1="221.9" x2="1583.5" y2="221.9" stroke="#e2e2e2"/><line x1="1127" y1="214.1" x2="1583.5" y2="214.1" stroke="#e2e2e2"/><line x1="1127" y1="206.3" x2="1583.5" y2="206.3" stroke="#e2e2e2"/><line x1="1127" y1="198.6" x2="1583.5" y2="198.6" stroke="#a0a0a0"/><line x1="1127" y1="190.8" x2="1583.5" y2="190.8" stroke="#e2e2e2"/><line x1="1127" y1="183.0" x2="1583.5" y2="183.0" stroke="#e2e2e2"/><line x1="1127" y1="175.2" x2="1583.5" y2="175.2" stroke="#e2e2e2"/><line x1="1127" y1="167.4" x2="1583.5" y2="167.4" stroke="#a0a0a0"/><line x1="1127" y1="159.6" x2="1583.5" y2="159.6" stroke="#e2e2e2"/><line x1="1127" y1="151.9" x2="1583.5" y2="151.9" stroke="#e2e2e2"/><line x1="1127" y1="144.1" x2="1583.5" y2="144.1" stroke="#e2e2e2"/><line x1="1127" y1="136.3" x2="1583.5" y2="136.3" stroke="#a0a0a0"/><line x1="1127" y1="128.5" x2="1583.5" y2="128.5" stroke="#e2e2e2"/><line x1="1127" y1="120.7" x2="1583.5" y2="120.7" stroke="#e2e2e2"/><line x1="1127" y1="112.9" x2="1583.5" y2="112.9" stroke="#e2e2e2"/><line x1="1127" y1="105.2" x2="1583.5" y2="105.2" stroke="#a0a0a0"/><line x1="1127" y1="97.4" x2="1583.5" y2="97.4" stroke="#e2e2e2"/><line x1="1127" y1="89.6" x2="1583.5" y2="89.6" stroke="#e2e2e2"/><line x1="1127" y1="81.8" x2="1583.5" y2="81.8" stroke="#e2e2e2"/><line x1="1127" y1="74.0" x2="1583.5" y2="74.0" stroke="#a0a0a0"/><line x1="1127" y1="66.2" x2="1583.5" y2="66.2" stroke="#e2e2e2"/><line x1="1127" y1="58.5" x2="1583.5" y2="58.5" stroke="#e2e2e2"/><line x1="1127" y1="50.7" x2="1583.5" y2="50.7" stroke="#e2e2e2"/><line x1="1127" y1="42.9" x2="1583.5" y2="42.9" stroke="#a0a0a0"/><line x1="1127" y1="35.1" x2="1583.5" y2="35.1" stroke="#e2e2e2"/><clipPath id="hc3"><rect x="1127" y="31.5" width="456.5" height="394.0"/></clipPath><g clip-path="url(#hc3)"><rect x="1131.0" y="120.7" width="11.23" height="304.8" fill="#21A03B" stroke="#000" stroke-width="1.3"/><rect x="1142.2" y="74.0" width="11.23" height="351.5" fill="#21A03B" stroke="#000" stroke-width="1.3"/><rect x="1153.5" y="58.5" width="11.23" height="367.0" fill="#21A03B" stroke="#000" stroke-width="1.3"/><rect x="1164.7" y="136.3" width="11.23" height="289.2" fill="#21A03B" stroke="#000" stroke-width="1.3"/><rect x="1175.9" y="245.3" width="11.23" height="180.2" fill="#21A03B" stroke="#000" stroke-width="1.3"/><rect x="1187.2" y="151.9" width="11.23" height="273.6" fill="#21A03B" stroke="#000" stroke-width="1.3"/><rect x="1198.4" y="245.3" width="11.23" height="180.2" fill="#21A03B" stroke="#000" stroke-width="1.3"/><rect x="1209.6" y="260.8" width="11.23" height="164.7" fill="#21A03B" stroke="#000" stroke-width="1.3"/><rect x="1220.9" y="120.7" width="11.23" height="304.8" fill="#21A03B" stroke="#000" stroke-width="1.3"/><rect x="1232.1" y="229.7" width="11.23" height="195.8" fill="#21A03B" stroke="#000" stroke-width="1.3"/><rect x="1243.3" y="229.7" width="11.23" height="195.8" fill="#21A03B" stroke="#000" stroke-width="1.3"/><rect x="1254.6" y="276.4" width="11.23" height="149.1" fill="#21A03B" stroke="#000" stroke-width="1.3"/><rect x="1265.8" y="245.3" width="11.23" height="180.2" fill="#21A03B" stroke="#000" stroke-width="1.3"/><rect x="1277.1" y="276.4" width="11.23" height="149.1" fill="#21A03B" stroke="#000" stroke-width="1.3"/><rect x="1288.3" y="338.7" width="11.23" height="86.8" fill="#21A03B" stroke="#000" stroke-width="1.3"/><rect x="1299.5" y="229.7" width="11.23" height="195.8" fill="#21A03B" stroke="#000" stroke-width="1.3"/><rect x="1310.8" y="307.5" width="11.23" height="118.0" fill="#21A03B" stroke="#000" stroke-width="1.3"/><rect x="1322.0" y="260.8" width="11.23" height="164.7" fill="#21A03B" stroke="#000" stroke-width="1.3"/><rect x="1333.2" y="292.0" width="11.23" height="133.5" fill="#21A03B" stroke="#000" stroke-width="1.3"/><rect x="1344.5" y="151.9" width="11.23" height="273.6" fill="#21A03B" stroke="#000" stroke-width="1.3"/><rect x="1355.7" y="58.5" width="11.23" height="367.0" fill="#21A03B" stroke="#000" stroke-width="1.3"/><rect x="1366.9" y="42.9" width="11.23" height="382.6" fill="#21A03B" stroke="#000" stroke-width="1.3"/><rect x="1378.2" y="105.2" width="11.23" height="320.3" fill="#21A03B" stroke="#000" stroke-width="1.3"/><rect x="1389.4" y="214.1" width="11.23" height="211.4" fill="#21A03B" stroke="#000" stroke-width="1.3"/><rect x="1400.6" y="167.4" width="11.23" height="258.1" fill="#21A03B" stroke="#000" stroke-width="1.3"/><rect x="1411.9" y="292.0" width="11.23" height="133.5" fill="#21A03B" stroke="#000" stroke-width="1.3"/><rect x="1423.1" y="369.8" width="11.23" height="55.7" fill="#21A03B" stroke="#000" stroke-width="1.3"/><rect x="1434.4" y="385.4" width="11.23" height="40.1" fill="#21A03B" stroke="#000" stroke-width="1.3"/><rect x="1445.6" y="354.2" width="11.23" height="71.3" fill="#21A03B" stroke="#000" stroke-width="1.3"/><rect x="1456.8" y="400.9" width="11.23" height="24.6" fill="#21A03B" stroke="#000" stroke-width="1.3"/><rect x="1468.1" y="385.4" width="11.23" height="40.1" fill="#21A03B" stroke="#000" stroke-width="1.3"/><rect x="1479.3" y="416.0" width="11.23" height="9.5" fill="#21A03B" stroke="#000" stroke-width="1.3"/><rect x="1490.5" y="400.9" width="11.23" height="24.6" fill="#21A03B" stroke="#000" stroke-width="1.3"/><rect x="1501.8" y="400.9" width="11.23" height="24.6" fill="#21A03B" stroke="#000" stroke-width="1.3"/><rect x="1513.0" y="385.4" width="11.23" height="40.1" fill="#21A03B" stroke="#000" stroke-width="1.3"/><rect x="1524.2" y="416.0" width="11.23" height="9.5" fill="#21A03B" stroke="#000" stroke-width="1.3"/><rect x="1535.5" y="416.0" width="11.23" height="9.5" fill="#21A03B" stroke="#000" stroke-width="1.3"/><rect x="1546.7" y="400.9" width="11.23" height="24.6" fill="#21A03B" stroke="#000" stroke-width="1.3"/><rect x="1557.9" y="416.0" width="11.23" height="9.5" fill="#21A03B" stroke="#000" stroke-width="1.3"/><rect x="1569.2" y="416.0" width="11.23" height="9.5" fill="#21A03B" stroke="#000" stroke-width="1.3"/></g><rect x="1127" y="31.5" width="456.5" height="394.0" fill="none" stroke="#000" stroke-width="1.5"/><path d="M1127 424.3h3M1127 416.5h6M1127 408.7h3M1127 400.9h3M1127 393.1h3M1127 385.4h6M1127 377.6h3M1127 369.8h3M1127 362.0h3M1127 354.2h6M1127 346.4h3M1127 338.7h3M1127 330.9h3M1127 323.1h6M1127 315.3h3M1127 307.5h3M1127 299.8h3M1127 292.0h6M1127 284.2h3M1127 276.4h3M1127 268.6h3M1127 260.8h6M1127 253.0h3M1127 245.3h3M1127 237.5h3M1127 229.7h6M1127 221.9h3M1127 214.1h3M1127 206.3h3M1127 198.6h6M1127 190.8h3M1127 183.0h3M1127 175.2h3M1127 167.4h6M1127 159.6h3M1127 151.9h3M1127 144.1h3M1127 136.3h6M1127 128.5h3M1127 120.7h3M1127 112.9h3M1127 105.2h6M1127 97.4h3M1127 89.6h3M1127 81.8h3M1127 74.0h6M1127 66.2h3M1127 58.5h3M1127 50.7h3M1127 42.9h6M1127 35.1h3M1136.6 31.5v6M1136.6 425.5v-6M1158.5 31.5v3M1158.5 425.5v-3M1180.4 31.5v3M1180.4 425.5v-3M1202.3 31.5v3M1202.3 425.5v-3M1224.2 31.5v6M1224.2 425.5v-6M1246.1 31.5v3M1246.1 425.5v-3M1268.1 31.5v3M1268.1 425.5v-3M1290.0 31.5v3M1290.0 425.5v-3M1311.9 31.5v6M1311.9 425.5v-6M1333.8 31.5v3M1333.8 425.5v-3M1355.7 31.5v3M1355.7 425.5v-3M1377.6 31.5v3M1377.6 425.5v-3M1399.5 31.5v6M1399.5 425.5v-6M1421.4 31.5v3M1421.4 425.5v-3M1443.3 31.5v3M1443.3 425.5v-3M1465.2 31.5v3M1465.2 425.5v-3M1487.2 31.5v6M1487.2 425.5v-6M1509.1 31.5v3M1509.1 425.5v-3M1531.0 31.5v3M1531.0 425.5v-3M1552.9 31.5v3M1552.9 425.5v-3M1574.8 31.5v6M1574.8 425.5v-6" stroke="#000" fill="none"/><clipPath id="xl3"><rect x="1074" y="425.5" width="510.5" height="40"/></clipPath><text x="1123" y="422.5" font-size="16" text-anchor="end" font-family="Liberation Sans">0</text><text x="1123" y="391.4" font-size="16" text-anchor="end" font-family="Liberation Sans">2</text><text x="1123" y="360.2" font-size="16" text-anchor="end" font-family="Liberation Sans">4</text><text x="1123" y="329.1" font-size="16" text-anchor="end" font-family="Liberation Sans">6</text><text x="1123" y="298.0" font-size="16" text-anchor="end" font-family="Liberation Sans">8</text><text x="1123" y="266.8" font-size="16" text-anchor="end" font-family="Liberation Sans">10</text><text x="1123" y="235.7" font-size="16" text-anchor="end" font-family="Liberation Sans">12</text><text x="1123" y="204.6" font-size="16" text-anchor="end" font-family="Liberation Sans">14</text><text x="1123" y="173.4" font-size="16" text-anchor="end" font-family="Liberation Sans">16</text><text x="1123" y="142.3" font-size="16" text-anchor="end" font-family="Liberation Sans">18</text><text x="1123" y="111.2" font-size="16" text-anchor="end" font-family="Liberation Sans">20</text><text x="1123" y="80.0" font-size="16" text-anchor="end" font-family="Liberation Sans">22</text><text x="1123" y="48.9" font-size="16" text-anchor="end" font-family="Liberation Sans">24</text><text clip-path="url(#xl3)" x="1136.6" y="441.5" font-size="16" text-anchor="middle" font-family="Liberation Sans">0</text><text clip-path="url(#xl3)" x="1224.2" y="441.5" font-size="16" text-anchor="middle" font-family="Liberation Sans">20</text><text clip-path="url(#xl3)" x="1311.9" y="441.5" font-size="16" text-anchor="middle" font-family="Liberation Sans">40</text><text clip-path="url(#xl3)" x="1399.5" y="441.5" font-size="16" text-anchor="middle" font-family="Liberation Sans">60</text><text clip-path="url(#xl3)" x="1487.2" y="441.5" font-size="16" text-anchor="middle" font-family="Liberation Sans">80</text><text clip-path="url(#xl3)" x="1574.8" y="441.5" font-size="16" text-anchor="middle" font-family="Liberation Sans">100</text><text x="1319" y="462" font-size="16" font-family="Liberation Sans">E</text><text x="1330" y="467" font-size="13" font-family="Liberation Sans">FRET</text><text x="1367" y="462" font-size="16" font-family="Liberation Sans">[%]</text><text transform="translate(1098,233) rotate(-90)" font-size="15" text-anchor="middle" font-family="Liberation Sans">Occur. [Events]</text></svg>
<svg class="a" style="left:1074px;top:477px" width="520" height="470" viewBox="1074 477 520 470"><text x="1333" y="503" font-size="16" font-weight="bold" text-anchor="middle" font-family="Liberation Sans">Distance Histogram</text><line x1="1151.0" y1="509.5" x2="1151.0" y2="902.5" stroke="#e2e2e2"/><line x1="1172.2" y1="509.5" x2="1172.2" y2="902.5" stroke="#e2e2e2"/><line x1="1193.5" y1="509.5" x2="1193.5" y2="902.5" stroke="#e2e2e2"/><line x1="1214.7" y1="509.5" x2="1214.7" y2="902.5" stroke="#e2e2e2"/><line x1="1236.0" y1="509.5" x2="1236.0" y2="902.5" stroke="#a0a0a0"/><line x1="1257.2" y1="509.5" x2="1257.2" y2="902.5" stroke="#e2e2e2"/><line x1="1278.4" y1="509.5" x2="1278.4" y2="902.5" stroke="#e2e2e2"/><line x1="1299.7" y1="509.5" x2="1299.7" y2="902.5" stroke="#e2e2e2"/><line x1="1320.9" y1="509.5" x2="1320.9" y2="902.5" stroke="#a0a0a0"/><line x1="1342.2" y1="509.5" x2="1342.2" y2="902.5" stroke="#e2e2e2"/><line x1="1363.4" y1="509.5" x2="1363.4" y2="902.5" stroke="#e2e2e2"/><line x1="1384.6" y1="509.5" x2="1384.6" y2="902.5" stroke="#e2e2e2"/><line x1="1405.9" y1="509.5" x2="1405.9" y2="902.5" stroke="#a0a0a0"/><line x1="1427.1" y1="509.5" x2="1427.1" y2="902.5" stroke="#e2e2e2"/><line x1="1448.4" y1="509.5" x2="1448.4" y2="902.5" stroke="#e2e2e2"/><line x1="1469.6" y1="509.5" x2="1469.6" y2="902.5" stroke="#e2e2e2"/><line x1="1490.8" y1="509.5" x2="1490.8" y2="902.5" stroke="#a0a0a0"/><line x1="1512.1" y1="509.5" x2="1512.1" y2="902.5" stroke="#e2e2e2"/><line x1="1533.3" y1="509.5" x2="1533.3" y2="902.5" stroke="#e2e2e2"/><line x1="1554.6" y1="509.5" x2="1554.6" y2="902.5" stroke="#e2e2e2"/><line x1="1575.8" y1="509.5" x2="1575.8" y2="902.5" stroke="#a0a0a0"/><line x1="1141" y1="900.9" x2="1583.5" y2="900.9" stroke="#e2e2e2"/><line x1="1141" y1="893.9" x2="1583.5" y2="893.9" stroke="#a0a0a0"/><line x1="1141" y1="886.9" x2="1583.5" y2="886.9" stroke="#e2e2e2"/><line x1="1141" y1="879.8" x2="1583.5" y2="879.8" stroke="#e2e2e2"/><line x1="1141" y1="872.8" x2="1583.5" y2="872.8" stroke="#e2e2e2"/><line x1="1141" y1="865.8" x2="1583.5" y2="865.8" stroke="#a0a0a0"/><line x1="1141" y1="858.7" x2="1583.5" y2="858.7" stroke="#e2e2e2"/><line x1="1141" y1="851.7" x2="1583.5" y2="851.7" stroke="#e2e2e2"/><line x1="1141" y1="844.7" x2="1583.5" y2="844.7" stroke="#e2e2e2"/><line x1="1141" y1="837.6" x2="1583.5" y2="837.6" stroke="#a0a0a0"/><line x1="1141" y1="830.6" x2="1583.5" y2="830.6" stroke="#e2e2e2"/><line x1="1141" y1="823.6" x2="1583.5" y2="823.6" stroke="#e2e2e2"/><line x1="1141" y1="816.5" x2="1583.5" y2="816.5" stroke="#e2e2e2"/><line x1="1141" y1="809.5" x2="1583.5" y2="809.5" stroke="#a0a0a0"/><line x1="1141" y1="802.5" x2="1583.5" y2="802.5" stroke="#e2e2e2"/><line x1="1141" y1="795.4" x2="1583.5" y2="795.4" stroke="#e2e2e2"/><line x1="1141" y1="788.4" x2="1583.5" y2="788.4" stroke="#e2e2e2"/><line x1="1141" y1="781.4" x2="1583.5" y2="781.4" stroke="#a0a0a0"/><line x1="1141" y1="774.3" x2="1583.5" y2="774.3" stroke="#e2e2e2"/><line x1="1141" y1="767.3" x2="1583.5" y2="767.3" stroke="#e2e2e2"/><line x1="1141" y1="760.3" x2="1583.5" y2="760.3" stroke="#e2e2e2"/><line x1="1141" y1="753.2" x2="1583.5" y2="753.2" stroke="#a0a0a0"/><line x1="1141" y1="746.2" x2="1583.5" y2="746.2" stroke="#e2e2e2"/><line x1="1141" y1="739.2" x2="1583.5" y2="739.2" stroke="#e2e2e2"/><line x1="1141" y1="732.1" x2="1583.5" y2="732.1" stroke="#e2e2e2"/><line x1="1141" y1="725.1" x2="1583.5" y2="725.1" stroke="#a0a0a0"/><line x1="1141" y1="718.1" x2="1583.5" y2="718.1" stroke="#e2e2e2"/><line x1="1141" y1="711.0" x2="1583.5" y2="711.0" stroke="#e2e2e2"/><line x1="1141" y1="704.0" x2="1583.5" y2="704.0" stroke="#e2e2e2"/><line x1="1141" y1="697.0" x2="1583.5" y2="697.0" stroke="#a0a0a0"/><line x1="1141" y1="690.0" x2="1583.5" y2="690.0" stroke="#e2e2e2"/><line x1="1141" y1="682.9" x2="1583.5" y2="682.9" stroke="#e2e2e2"/><line x1="1141" y1="675.9" x2="1583.5" y2="675.9" stroke="#e2e2e2"/><line x1="1141" y1="668.9" x2="1583.5" y2="668.9" stroke="#a0a0a0"/><line x1="1141" y1="661.8" x2="1583.5" y2="661.8" stroke="#e2e2e2"/><line x1="1141" y1="654.8" x2="1583.5" y2="654.8" stroke="#e2e2e2"/><line x1="1141" y1="647.8" x2="1583.5" y2="647.8" stroke="#e2e2e2"/><line x1="1141" y1="640.7" x2="1583.5" y2="640.7" stroke="#a0a0a0"/><line x1="1141" y1="633.7" x2="1583.5" y2="633.7" stroke="#e2e2e2"/><line x1="1141" y1="626.7" x2="1583.5" y2="626.7" stroke="#e2e2e2"/><line x1="1141" y1="619.6" x2="1583.5" y2="619.6" stroke="#e2e2e2"/><line x1="1141" y1="612.6" x2="1583.5" y2="612.6" stroke="#a0a0a0"/><line x1="1141" y1="605.6" x2="1583.5" y2="605.6" stroke="#e2e2e2"/><line x1="1141" y1="598.5" x2="1583.5" y2="598.5" stroke="#e2e2e2"/><line x1="1141" y1="591.5" x2="1583.5" y2="591.5" stroke="#e2e2e2"/><line x1="1141" y1="584.5" x2="1583.5" y2="584.5" stroke="#a0a0a0"/><line x1="1141" y1="577.4" x2="1583.5" y2="577.4" stroke="#e2e2e2"/><line x1="1141" y1="570.4" x2="1583.5" y2="570.4" stroke="#e2e2e2"/><line x1="1141" y1="563.4" x2="1583.5" y2="563.4" stroke="#e2e2e2"/><line x1="1141" y1="556.3" x2="1583.5" y2="556.3" stroke="#a0a0a0"/><line x1="1141" y1="549.3" x2="1583.5" y2="549.3" stroke="#e2e2e2"/><line x1="1141" y1="542.3" x2="1583.5" y2="542.3" stroke="#e2e2e2"/><line x1="1141" y1="535.2" x2="1583.5" y2="535.2" stroke="#e2e2e2"/><line x1="1141" y1="528.2" x2="1583.5" y2="528.2" stroke="#a0a0a0"/><line x1="1141" y1="521.2" x2="1583.5" y2="521.2" stroke="#e2e2e2"/><line x1="1141" y1="514.1" x2="1583.5" y2="514.1" stroke="#e2e2e2"/><clipPath id="hc477"><rect x="1141" y="509.5" width="442.5" height="393.0"/></clipPath><g clip-path="url(#hc477)"><rect x="1145.7" y="521.2" width="10.62" height="381.3" fill="#21A03B" stroke="#000" stroke-width="1.3"/><rect x="1156.6" y="811.6" width="10.62" height="90.9" fill="#21A03B" stroke="#000" stroke-width="1.3"/><rect x="1167.5" y="893.4" width="10.62" height="9.1" fill="#21A03B" stroke="#000" stroke-width="1.3"/><rect x="1178.4" y="893.4" width="10.62" height="9.1" fill="#21A03B" stroke="#000" stroke-width="1.3"/><rect x="1189.3" y="893.4" width="10.62" height="9.1" fill="#21A03B" stroke="#000" stroke-width="1.3"/><rect x="1200.2" y="893.4" width="10.62" height="9.1" fill="#21A03B" stroke="#000" stroke-width="1.3"/><rect x="1211.0" y="893.4" width="10.62" height="9.1" fill="#21A03B" stroke="#000" stroke-width="1.3"/><rect x="1221.9" y="893.4" width="10.62" height="9.1" fill="#21A03B" stroke="#000" stroke-width="1.3"/><rect x="1232.8" y="893.4" width="10.62" height="9.1" fill="#21A03B" stroke="#000" stroke-width="1.3"/><rect x="1243.7" y="893.4" width="10.62" height="9.1" fill="#21A03B" stroke="#000" stroke-width="1.3"/><rect x="1254.6" y="893.4" width="10.62" height="9.1" fill="#21A03B" stroke="#000" stroke-width="1.3"/><rect x="1265.5" y="893.4" width="10.62" height="9.1" fill="#21A03B" stroke="#000" stroke-width="1.3"/><rect x="1276.4" y="893.4" width="10.62" height="9.1" fill="#21A03B" stroke="#000" stroke-width="1.3"/><rect x="1287.3" y="893.4" width="10.62" height="9.1" fill="#21A03B" stroke="#000" stroke-width="1.3"/><rect x="1298.2" y="893.4" width="10.62" height="9.1" fill="#21A03B" stroke="#000" stroke-width="1.3"/><rect x="1309.1" y="893.4" width="10.62" height="9.1" fill="#21A03B" stroke="#000" stroke-width="1.3"/><rect x="1320.0" y="893.4" width="10.62" height="9.1" fill="#21A03B" stroke="#000" stroke-width="1.3"/><rect x="1330.9" y="893.4" width="10.62" height="9.1" fill="#21A03B" stroke="#000" stroke-width="1.3"/><rect x="1341.8" y="893.4" width="10.62" height="9.1" fill="#21A03B" stroke="#000" stroke-width="1.3"/><rect x="1352.6" y="893.4" width="10.62" height="9.1" fill="#21A03B" stroke="#000" stroke-width="1.3"/><rect x="1363.5" y="893.4" width="10.62" height="9.1" fill="#21A03B" stroke="#000" stroke-width="1.3"/><rect x="1374.4" y="893.4" width="10.62" height="9.1" fill="#21A03B" stroke="#000" stroke-width="1.3"/><rect x="1385.3" y="893.4" width="10.62" height="9.1" fill="#21A03B" stroke="#000" stroke-width="1.3"/><rect x="1396.2" y="893.4" width="10.62" height="9.1" fill="#21A03B" stroke="#000" stroke-width="1.3"/><rect x="1407.1" y="893.4" width="10.62" height="9.1" fill="#21A03B" stroke="#000" stroke-width="1.3"/><rect x="1418.0" y="893.4" width="10.62" height="9.1" fill="#21A03B" stroke="#000" stroke-width="1.3"/><rect x="1428.9" y="893.4" width="10.62" height="9.1" fill="#21A03B" stroke="#000" stroke-width="1.3"/><rect x="1439.8" y="893.4" width="10.62" height="9.1" fill="#21A03B" stroke="#000" stroke-width="1.3"/><rect x="1450.7" y="893.4" width="10.62" height="9.1" fill="#21A03B" stroke="#000" stroke-width="1.3"/><rect x="1461.6" y="893.4" width="10.62" height="9.1" fill="#21A03B" stroke="#000" stroke-width="1.3"/><rect x="1472.5" y="893.4" width="10.62" height="9.1" fill="#21A03B" stroke="#000" stroke-width="1.3"/><rect x="1483.4" y="893.4" width="10.62" height="9.1" fill="#21A03B" stroke="#000" stroke-width="1.3"/><rect x="1494.2" y="893.4" width="10.62" height="9.1" fill="#21A03B" stroke="#000" stroke-width="1.3"/><rect x="1505.1" y="893.4" width="10.62" height="9.1" fill="#21A03B" stroke="#000" stroke-width="1.3"/><rect x="1516.0" y="893.4" width="10.62" height="9.1" fill="#21A03B" stroke="#000" stroke-width="1.3"/><rect x="1526.9" y="893.4" width="10.62" height="9.1" fill="#21A03B" stroke="#000" stroke-width="1.3"/><rect x="1537.8" y="893.4" width="10.62" height="9.1" fill="#21A03B" stroke="#000" stroke-width="1.3"/><rect x="1548.7" y="893.4" width="10.62" height="9.1" fill="#21A03B" stroke="#000" stroke-width="1.3"/><rect x="1559.6" y="893.4" width="10.62" height="9.1" fill="#21A03B" stroke="#000" stroke-width="1.3"/><rect x="1570.5" y="893.4" width="10.62" height="9.1" fill="#21A03B" stroke="#000" stroke-width="1.3"/></g><rect x="1141" y="509.5" width="442.5" height="393.0" fill="none" stroke="#000" stroke-width="1.5"/><path d="M1141 900.9h3M1141 893.9h6M1141 886.9h3M1141 879.8h3M1141 872.8h3M1141 865.8h6M1141 858.7h3M1141 851.7h3M1141 844.7h3M1141 837.6h6M1141 830.6h3M1141 823.6h3M1141 816.5h3M1141 809.5h6M1141 802.5h3M1141 795.4h3M1141 788.4h3M1141 781.4h6M1141 774.3h3M1141 767.3h3M1141 760.3h3M1141 753.2h6M1141 746.2h3M1141 739.2h3M1141 732.1h3M1141 725.1h6M1141 718.1h3M1141 711.0h3M1141 704.0h3M1141 697.0h6M1141 690.0h3M1141 682.9h3M1141 675.9h3M1141 668.9h6M1141 661.8h3M1141 654.8h3M1141 647.8h3M1141 640.7h6M1141 633.7h3M1141 626.7h3M1141 619.6h3M1141 612.6h6M1141 605.6h3M1141 598.5h3M1141 591.5h3M1141 584.5h6M1141 577.4h3M1141 570.4h3M1141 563.4h3M1141 556.3h6M1141 549.3h3M1141 542.3h3M1141 535.2h3M1141 528.2h6M1141 521.2h3M1141 514.1h3M1151.0 509.5v6M1151.0 902.5v-6M1172.2 509.5v3M1172.2 902.5v-3M1193.5 509.5v3M1193.5 902.5v-3M1214.7 509.5v3M1214.7 902.5v-3M1236.0 509.5v6M1236.0 902.5v-6M1257.2 509.5v3M1257.2 902.5v-3M1278.4 509.5v3M1278.4 902.5v-3M1299.7 509.5v3M1299.7 902.5v-3M1320.9 509.5v6M1320.9 902.5v-6M1342.2 509.5v3M1342.2 902.5v-3M1363.4 509.5v3M1363.4 902.5v-3M1384.6 509.5v3M1384.6 902.5v-3M1405.9 509.5v6M1405.9 902.5v-6M1427.1 509.5v3M1427.1 902.5v-3M1448.4 509.5v3M1448.4 902.5v-3M1469.6 509.5v3M1469.6 902.5v-3M1490.8 509.5v6M1490.8 902.5v-6M1512.1 509.5v3M1512.1 902.5v-3M1533.3 509.5v3M1533.3 902.5v-3M1554.6 509.5v3M1554.6 902.5v-3M1575.8 509.5v6M1575.8 902.5v-6" stroke="#000" fill="none"/><clipPath id="xl477"><rect x="1074" y="902.5" width="510.5" height="40"/></clipPath><text x="1137" y="899.9" font-size="16" text-anchor="end" font-family="Liberation Sans">0,00</text><text x="1137" y="871.8" font-size="16" text-anchor="end" font-family="Liberation Sans">0,04</text><text x="1137" y="843.6" font-size="16" text-anchor="end" font-family="Liberation Sans">0,08</text><text x="1137" y="815.5" font-size="16" text-anchor="end" font-family="Liberation Sans">0,12</text><text x="1137" y="787.4" font-size="16" text-anchor="end" font-family="Liberation Sans">0,16</text><text x="1137" y="759.2" font-size="16" text-anchor="end" font-family="Liberation Sans">0,20</text><text x="1137" y="731.1" font-size="16" text-anchor="end" font-family="Liberation Sans">0,24</text><text x="1137" y="703.0" font-size="16" text-anchor="end" font-family="Liberation Sans">0,28</text><text x="1137" y="674.9" font-size="16" text-anchor="end" font-family="Liberation Sans">0,32</text><text x="1137" y="646.7" font-size="16" text-anchor="end" font-family="Liberation Sans">0,36</text><text x="1137" y="618.6" font-size="16" text-anchor="end" font-family="Liberation Sans">0,40</text><text x="1137" y="590.5" font-size="16" text-anchor="end" font-family="Liberation Sans">0,44</text><text x="1137" y="562.3" font-size="16" text-anchor="end" font-family="Liberation Sans">0,48</text><text x="1137" y="534.2" font-size="16" text-anchor="end" font-family="Liberation Sans">0,52</text><text clip-path="url(#xl477)" x="1151.0" y="918.5" font-size="16" text-anchor="middle" font-family="Liberation Sans">0</text><text clip-path="url(#xl477)" x="1236.0" y="918.5" font-size="16" text-anchor="middle" font-family="Liberation Sans">20</text><text clip-path="url(#xl477)" x="1320.9" y="918.5" font-size="16" text-anchor="middle" font-family="Liberation Sans">40</text><text clip-path="url(#xl477)" x="1405.9" y="918.5" font-size="16" text-anchor="middle" font-family="Liberation Sans">60</text><text clip-path="url(#xl477)" x="1490.8" y="918.5" font-size="16" text-anchor="middle" font-family="Liberation Sans">80</text><text clip-path="url(#xl477)" x="1575.8" y="918.5" font-size="16" text-anchor="middle" font-family="Liberation Sans">100</text><text x="1361" y="939" font-size="16" text-anchor="middle" font-family="Liberation Sans">Distance [Ro]</text><text transform="translate(1098,707) rotate(-90)" font-size="15" text-anchor="middle" font-family="Liberation Sans">Occur. [10 <tspan font-size="11" dy="-5" dx="3">3</tspan><tspan dy="5" dx="3"> Events]</tspan></text></svg>
<div class="a" style="left:1796px;top:14px;width:1px;height:937px;background:#a0a8a0"></div>
<div class="a" style="left:1599px;top:15px;width:189px;height:111px;border:2px solid #6e6e6e;box-shadow:inset 1px 1px 0 #fff, 1px 1px 0 #fff"></div>
<div class="t" style="left:1607px;top:7px;background:#E1E9E0;padding:0 1px">E{_FRET}</div>
<div class="t" style="left:1606px;top:33px;">Min:</div>
<div class="inp" style="left:1645px;top:30px;width:116px;height:25px;line-height:23px;padding-right:2px">0,0 %</div>
<div class="a" style="left:1761px;top:30px;width:20px;height:12px;border:1px solid #7a7a7a;background:#E1E9E0"></div>
<div class="a" style="left:1761px;top:42px;width:20px;height:13px;border:1px solid #7a7a7a;background:#E1E9E0"></div>
<div class="tri" style="left:1767px;top:34px;border-left-width:4px;border-right-width:4px;border-bottom:4px solid #000"></div>
<div class="tri" style="left:1767px;top:46px;border-left-width:4px;border-right-width:4px;border-top:4px solid #000"></div>
<div class="t" style="left:1606px;top:64px;">Max:</div>
<div class="inp" style="left:1645px;top:61px;width:116px;height:25px;line-height:23px;padding-right:2px">100,0 %</div>
<div class="a" style="left:1761px;top:61px;width:20px;height:12px;border:1px solid #7a7a7a;background:#E1E9E0"></div>
<div class="a" style="left:1761px;top:73px;width:20px;height:13px;border:1px solid #7a7a7a;background:#E1E9E0"></div>
<div class="tri" style="left:1767px;top:65px;border-left-width:4px;border-right-width:4px;border-bottom:4px solid #000"></div>
<div class="tri" style="left:1767px;top:77px;border-left-width:4px;border-right-width:4px;border-top:4px solid #000"></div>
<div class="t" style="left:1606px;top:95px;">Smpl. Pts.:</div>
<div class="inp" style="left:1686px;top:92px;width:75px;height:25px;line-height:23px;padding-right:18px">40</div>
<div class="a" style="left:1761px;top:92px;width:20px;height:12px;border:1px solid #7a7a7a;background:#E1E9E0"></div>
<div class="a" style="left:1761px;top:104px;width:20px;height:13px;border:1px solid #7a7a7a;background:#E1E9E0"></div>
<div class="tri" style="left:1767px;top:96px;border-left-width:4px;border-right-width:4px;border-bottom:4px solid #000"></div>
<div class="tri" style="left:1767px;top:108px;border-left-width:4px;border-right-width:4px;border-top:4px solid #000"></div>
<div class="btn" style="left:1600px;top:336px;width:188px;height:25px;"><span style="position:relative;top:4px;line-height:15px">Recalculate Histogram</span></div>
<div class="btn" style="left:1600px;top:367px;width:188px;height:25px;"><span style="position:relative;top:4px;line-height:15px">Optimize View</span></div>
<div class="btn" style="left:1600px;top:398px;width:188px;height:25px;"><span style="position:relative;top:4px;line-height:15px">Autoscale Histogram</span></div>
<div class="btn" style="left:1600px;top:429px;width:188px;height:25px;"><span style="position:relative;top:4px;line-height:15px">Show All Events</span></div>
<div class="a" style="left:1599px;top:492px;width:189px;height:112px;border:2px solid #6e6e6e;box-shadow:inset 1px 1px 0 #fff, 1px 1px 0 #fff"></div>
<div class="t" style="left:1607px;top:484px;background:#E1E9E0;padding:0 1px">Distance</div>
<div class="t" style="left:1606px;top:510px;">Min:</div>
<div class="inp" style="left:1645px;top:506px;width:116px;height:25px;line-height:23px;padding-right:0;text-align:left"><span style="position:absolute;right:-4px">0,0 Ro</span></div>
<div class="a" style="left:1761px;top:506px;width:20px;height:12px;border:1px solid #7a7a7a;background:#E1E9E0"></div>
<div class="a" style="left:1761px;top:518px;width:20px;height:13px;border:1px solid #7a7a7a;background:#E1E9E0"></div>
<div class="tri" style="left:1767px;top:510px;border-left-width:4px;border-right-width:4px;border-bottom:4px solid #000"></div>
<div class="tri" style="left:1767px;top:522px;border-left-width:4px;border-right-width:4px;border-top:4px solid #000"></div>
<div class="t" style="left:1606px;top:541px;">Max:</div>
<div class="inp" style="left:1645px;top:537px;width:116px;height:25px;line-height:23px;padding-right:0;text-align:left"><span style="position:absolute;right:-4px">100,0 Ro</span></div>
<div class="a" style="left:1761px;top:537px;width:20px;height:12px;border:1px solid #7a7a7a;background:#E1E9E0"></div>
<div class="a" style="left:1761px;top:549px;width:20px;height:13px;border:1px solid #7a7a7a;background:#E1E9E0"></div>
<div class="tri" style="left:1767px;top:541px;border-left-width:4px;border-right-width:4px;border-bottom:4px solid #000"></div>
<div class="tri" style="left:1767px;top:553px;border-left-width:4px;border-right-width:4px;border-top:4px solid #000"></div>
<div class="t" style="left:1606px;top:572px;">Smpl. Pts.:</div>
<div class="inp" style="left:1686px;top:568px;width:75px;height:25px;line-height:23px;padding-right:18px">40</div>
<div class="a" style="left:1761px;top:568px;width:20px;height:12px;border:1px solid #7a7a7a;background:#E1E9E0"></div>
<div class="a" style="left:1761px;top:580px;width:20px;height:13px;border:1px solid #7a7a7a;background:#E1E9E0"></div>
<div class="tri" style="left:1767px;top:572px;border-left-width:4px;border-right-width:4px;border-bottom:4px solid #000"></div>
<div class="tri" style="left:1767px;top:584px;border-left-width:4px;border-right-width:4px;border-top:4px solid #000"></div>
<div class="btn" style="left:1600px;top:812px;width:188px;height:25px;"><span style="position:relative;top:4px;line-height:15px">Recalculate Histogram</span></div>
<div class="btn" style="left:1600px;top:843px;width:188px;height:25px;"><span style="position:relative;top:4px;line-height:15px">Optimize View</span></div>
<div class="btn" style="left:1600px;top:874px;width:188px;height:25px;"><span style="position:relative;top:4px;line-height:15px">Autoscale Histogram</span></div>
<div class="btn" style="left:1600px;top:905px;width:188px;height:25px;"><span style="position:relative;top:4px;line-height:15px">Show All Events</span></div></body></html>
